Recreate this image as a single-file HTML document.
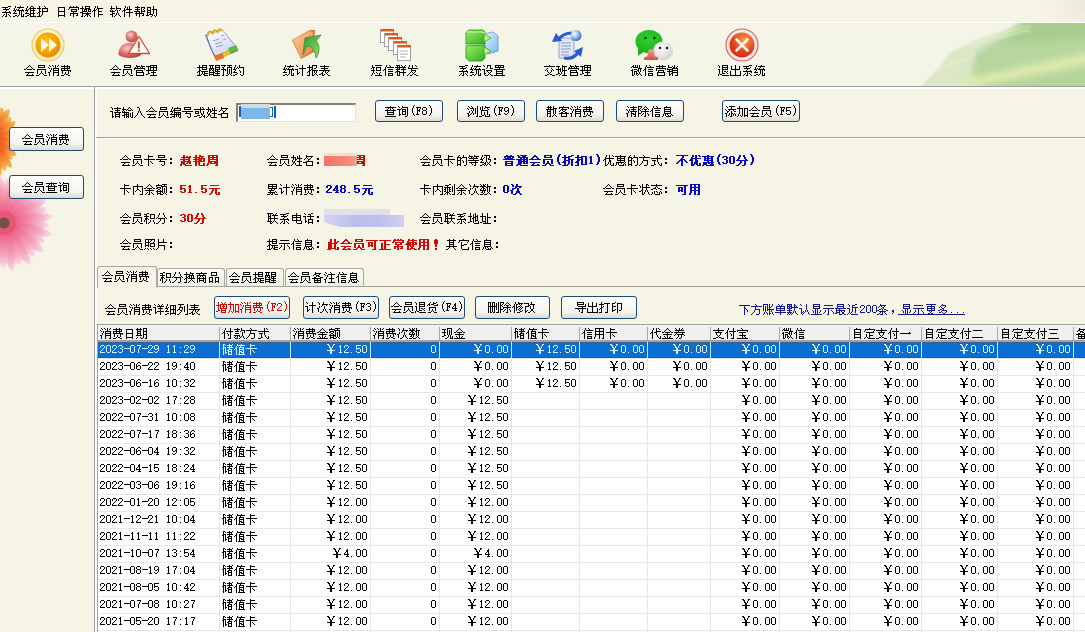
<!DOCTYPE html>
<html><head><meta charset="utf-8">
<style>
*{margin:0;padding:0;box-sizing:border-box}
html,body{width:1085px;height:632px;overflow:hidden;background:#F6F4E5;font-family:"Liberation Sans",sans-serif;font-size:12px;color:#000}
.a{position:absolute}
.t{position:absolute;font-size:12px;line-height:14px;white-space:nowrap}
.b{font-weight:bold;letter-spacing:1px}
.m{font-family:"Liberation Mono",monospace;font-size:12px;letter-spacing:-1.2px}
.red{color:#D00808}
.blue{color:#0808C0}
.btn{position:absolute;border:1px solid #1F4A78;border-radius:3px;background:linear-gradient(#FFFFFF,#F4F3EE 70%,#DCDBD3);font-size:12px;line-height:14px;text-align:center;white-space:nowrap}
.gh{position:absolute;top:326px;font-size:12px;line-height:14px;white-space:nowrap}
.hsep{position:absolute;top:327px;width:1px;height:13px;background:#A8A8A8}
.row{position:absolute;left:98px;width:987px;height:17px}
.row .c{position:absolute;top:0px;font-size:12px;line-height:14px;white-space:nowrap;margin-left:-98px}
.row .c.r{text-align:right}
.sel{background:#0A6ED2;color:#D8F4FF;border-top:1px solid #3D5F88;border-bottom:1px solid #3D5470;height:16px!important}
.sel .c{top:-1px!important}
.vls{position:absolute;top:343px;width:1px;height:14px;background:#B8ECFF}
.b .m{letter-spacing:-0.2px}
.y{display:inline-block;width:12px;text-align:right;padding-right:1px;font-family:"Liberation Sans",sans-serif;font-weight:bold;font-size:12px}
.vl{position:absolute;top:342px;width:1px;height:290px;background:#E6E6E6}
.hl{position:absolute;left:98px;width:987px;height:1px;background:#E8E8E8}
.k{display:inline-block;color:transparent;overflow:hidden;height:14px;vertical-align:top;white-space:nowrap;text-decoration:none}
</style></head><body>

<!-- menu bar -->
<div class="t" style="left:1px;top:4px"><span class="k" style="width: 48px;">系统维护</span></div>
<div class="t" style="left:56px;top:4px"><span class="k" style="width: 48px;">日常操作</span></div>
<div class="t" style="left:110px;top:4px"><span class="k" style="width: 48px;">软件帮助</span></div>
<div class="a" style="left:0;top:22px;width:1085px;height:1px;background:#FFFFFF"></div>
<div class="a" style="left:1000px;top:0;width:85px;height:22px;background:radial-gradient(ellipse 40px 26px at 100% 25%,#EAE8DA,rgba(246,244,229,0))"></div>

<!-- toolbar -->
<div class="a" style="left:0;top:23px;width:1085px;height:63px;background:#F5F5E7"></div>
<svg class="a" style="left:880px;top:23px" width="205" height="63" viewBox="880 23 205 63">
  <defs>
    <filter id="bl1" filterUnits="userSpaceOnUse" x="850" y="0" width="260" height="110"><feGaussianBlur stdDeviation="1.2"></feGaussianBlur></filter>
    <filter id="bl3" filterUnits="userSpaceOnUse" x="850" y="0" width="260" height="110"><feGaussianBlur stdDeviation="3"></feGaussianBlur></filter>
  </defs>
  <path d="M1028 15 L1100 15 L1100 95 L912 95 L925 82 L940 66 L950 52 L975 40 L1005 30Z" fill="#DCE7C6" filter="url(#bl1)"></path>
  <path d="M1032 15 L1100 15 L1100 95 L985 95 L972 75 L975 55 L995 40 L1015 30Z" fill="#B6D69E" filter="url(#bl3)"></path>
  <path d="M1030 15 L1100 15 L1100 38 L1040 42 L1005 42Z" fill="#A9CD8F" filter="url(#bl3)"></path>
  <path d="M958 80 L1100 50 L1100 62 L970 88Z" fill="#DDE9AC" filter="url(#bl3)"></path>
  <path d="M985 92 L1100 72 L1100 95 L1000 95Z" fill="#B2D598" filter="url(#bl3)"></path>
  <path d="M945 52 L1030 30 M960 45 L1030 26 M930 72 L975 55" stroke="#F0F4E4" stroke-width="1.2" opacity="0.8" filter="url(#bl1)"></path>
</svg>
<div class="a" style="left:0;top:86px;width:1085px;height:1px;background:#A0A0A0"></div>
<div class="a" style="left:0;top:87px;width:1085px;height:2px;background:#FFFFFF"></div>

<!-- toolbar icons -->
<svg class="a" style="left:31px;top:28px" width="34" height="34" viewBox="0 0 34 34">
  <defs>
    <radialGradient id="og" cx="0.4" cy="0.35" r="0.7"><stop offset="0" stop-color="#FFC21A"></stop><stop offset="0.7" stop-color="#F29A00"></stop><stop offset="1" stop-color="#E08A00"></stop></radialGradient>
  </defs>
  <circle cx="17" cy="17" r="16" fill="#FDF1C8" stroke="#F1C860" stroke-width="1.2"></circle>
  <circle cx="17" cy="17" r="12.5" fill="url(#og)"></circle>
  <path d="M10 10 L18 17 L10 24Z M18 10 L26 17 L18 24Z" fill="#FFFBEA"></path>
</svg>
<svg class="a" style="left:117px;top:29px" width="34" height="31" viewBox="0 0 34 31">
  <defs>
    <radialGradient id="rg" cx="0.4" cy="0.35" r="0.75"><stop offset="0" stop-color="#F8C8C8"></stop><stop offset="0.55" stop-color="#D86868"></stop><stop offset="1" stop-color="#B03838"></stop></radialGradient>
  </defs>
  <path d="M1.5 26 C1 19 5 14 12 14 C20 14 24 18 24 26 C19 30 7 30 1.5 26Z" fill="url(#rg)"></path>
  <circle cx="14.5" cy="7.5" r="6" fill="url(#rg)"></circle>
  <path d="M22 7.5 L32.5 24.5 L11.5 24.5Z" fill="#FFFFFF" stroke="#D0502A" stroke-width="1.3" stroke-linejoin="round"></path>
  <rect x="20.8" y="12.5" width="2" height="7" fill="#D84A28"></rect>
  <rect x="20.8" y="20.5" width="2" height="2" fill="#D84A28"></rect>
</svg>
<svg class="a" style="left:204px;top:28px" width="36" height="34" viewBox="0 0 36 34">
  <defs><linearGradient id="pg" x1="0" y1="0" x2="1" y2="1"><stop offset="0" stop-color="#FFFFFF"></stop><stop offset="1" stop-color="#C8CCF0"></stop></linearGradient></defs>
  <path d="M1 7 L19 2 C24 8 28 14 33 19 L34 23 L12 32 C8 25 4 15 1 7Z" fill="#6E70A8"></path>
  <path d="M2.5 6.5 L19 2.5 C23 8 27 13.5 32 18.5 L11.5 28 C8 22 5 14 2.5 6.5Z" fill="url(#pg)"></path>
  <path d="M9 13 L15 11 M11 16 L18 14 M12 19 L19 17 M17 8 L20 7 M19 12 L22 11" stroke="#9AA0C8" stroke-width="1"></path>
  <path d="M10 28 L18 25 L20 30 L12 33Z" fill="#E8702A"></path>
  <path d="M18 25 L25 22 L27 26 L20 29Z" fill="#F0C020"></path>
  <path d="M24 20 L32 17 L34 22 L26 25Z" fill="#58C038"></path>
  <path d="M4 8 C3 4 7 2 8 5 M9 6.5 C8 2.5 12 1 13 4 M14 5 C13 1 17 0 18 3" stroke="#D8A818" stroke-width="1.8" fill="none"></path>
</svg>
<svg class="a" style="left:290px;top:28px" width="36" height="32" viewBox="0 0 36 32">
  <defs><linearGradient id="fg" x1="0" y1="0" x2="1" y2="1"><stop offset="0" stop-color="#FFD0A0"></stop><stop offset="1" stop-color="#E88038"></stop></linearGradient>
  <linearGradient id="ag" x1="0" y1="0" x2="1" y2="1"><stop offset="0" stop-color="#2E9A2E"></stop><stop offset="1" stop-color="#9EE070"></stop></linearGradient></defs>
  <path d="M2 12 L20 2 L25 2 L24 24 L11 31 Z" fill="#D87838"></path>
  <path d="M3 12 L20 3 L23 4 L22 23 L11 30 Z" fill="url(#fg)"></path>
  <path d="M15 10 L31 7 L26 13 C30 17 30 24 26 30 C26 24 22 18 17 18 L13 27Z" fill="url(#ag)" stroke="#3A8A30" stroke-width="0.8"></path>
</svg>
<svg class="a" style="left:378px;top:28px" width="34" height="34" viewBox="0 0 34 34">
  <g stroke="#A0A0A0" stroke-width="1" fill="#FFFFFF">
    <rect x="2.5" y="1.5" width="13" height="13"></rect>
    <rect x="6.5" y="5.5" width="13" height="13"></rect>
    <rect x="10.5" y="9.5" width="13" height="13"></rect>
    <rect x="15.5" y="13.5" width="13" height="13"></rect>
    <rect x="19.5" y="17.5" width="13" height="15"></rect>
  </g>
  <g fill="#E05A20">
    <rect x="3" y="1" width="13" height="2.5"></rect>
    <rect x="7" y="5" width="13" height="2.5"></rect>
    <rect x="11" y="9" width="13" height="2.5"></rect>
    <rect x="16" y="13" width="13" height="2.5"></rect>
    <rect x="20" y="17" width="13" height="2.5"></rect>
  </g>
  <path d="M22 23 H30 M22 26 H30 M22 29 H28" stroke="#B0B0B0" stroke-width="1"></path>
</svg>
<svg class="a" style="left:465px;top:28px" width="34" height="34" viewBox="0 0 34 34">
  <defs><linearGradient id="gc" x1="0" y1="0" x2="1" y2="1"><stop offset="0" stop-color="#9AF060"></stop><stop offset="1" stop-color="#30B020"></stop></linearGradient>
  <linearGradient id="bc" x1="0" y1="0" x2="1" y2="1"><stop offset="0" stop-color="#E0F2FF"></stop><stop offset="1" stop-color="#78B8F0"></stop></linearGradient></defs>
  <path d="M19 6 L28 4 L33 8 L33 23 L23 26 L19 24Z" fill="url(#bc)" stroke="#5A98D0" stroke-width="0.8"></path>
  <path d="M1 4 L4 2 L18 2 L20 4 L20 16 L1 16Z" fill="url(#gc)" stroke="#2A8A20" stroke-width="0.8"></path>
  <path d="M1 18 L20 17 L20 30 L17 33 L4 33 L1 30Z" fill="url(#gc)" stroke="#2A8A20" stroke-width="0.8"></path>
  <path d="M1 4 L18 4 L20 6" stroke="#C8FF98" stroke-width="1.2" fill="none"></path>
  <path d="M19 6 L26 10 L19 14Z M19 19 L26 23 L19 27Z" fill="#B8F878" stroke="#40A030" stroke-width="0.8"></path>
</svg>
<svg class="a" style="left:550px;top:29px" width="34" height="33" viewBox="0 0 34 33">
  <defs><radialGradient id="bb" cx="0.35" cy="0.35" r="0.7"><stop offset="0" stop-color="#FFFFFF"></stop><stop offset="0.5" stop-color="#9ABCF4"></stop><stop offset="1" stop-color="#3868C8"></stop></radialGradient></defs>
  <path d="M9 9 L20 9 L24 13 L24 29 L9 29Z" fill="#E2E8F6" stroke="#8090B8" stroke-width="0.8"></path>
  <path d="M11 14 H21 M11 17 H21 M11 20 H21 M11 23 H19 M11 26 H19" stroke="#8A9AC8" stroke-width="1"></path>
  <path d="M8 11 Q13 4 22 4" stroke="#2A5AD8" stroke-width="3.2" fill="none"></path>
  <path d="M2 13 L6 4 L12 12Z" fill="#2A5AD8"></path>
  <path d="M14 29 Q24 31 29 22" stroke="#2A5AD8" stroke-width="3.2" fill="none"></path>
  <path d="M33 18 L31 28 L24 22Z" fill="#2A5AD8"></path>
  <circle cx="26" cy="6.5" r="5.5" fill="url(#bb)"></circle>
</svg>
<svg class="a" style="left:634px;top:29px" width="40" height="33" viewBox="0 0 40 33">
  <defs><radialGradient id="wg" cx="0.45" cy="0.4" r="0.7"><stop offset="0" stop-color="#30D030"></stop><stop offset="1" stop-color="#18B018"></stop></radialGradient>
  <radialGradient id="ww" cx="0.4" cy="0.35" r="0.7"><stop offset="0" stop-color="#FFFFFF"></stop><stop offset="1" stop-color="#D0D0D0"></stop></radialGradient>
  <linearGradient id="sg" x1="0" y1="0" x2="0" y2="1"><stop offset="0" stop-color="#F4A090"></stop><stop offset="1" stop-color="#C85848"></stop></linearGradient></defs>
  <ellipse cx="15" cy="12.5" rx="13.5" ry="11.5" fill="url(#wg)"></ellipse>
  <path d="M4 19 L4 27 L11 22Z" fill="#1CB41C"></path>
  <circle cx="11.5" cy="9" r="1.3" fill="#102010"></circle><circle cx="20.5" cy="9" r="1.3" fill="#102010"></circle>
  <ellipse cx="29" cy="22" rx="10" ry="9.5" fill="url(#ww)"></ellipse>
  <circle cx="26" cy="19" r="1.3" fill="#202020"></circle><circle cx="33" cy="19" r="1.3" fill="#202020"></circle>
  <path d="M13.5 27 C13.5 23 14 20 17 20 C20 20 20.5 23 20.5 27 L24 28.5 L24 31 L10 31 L10 28.5Z" fill="url(#sg)"></path>
</svg>
<svg class="a" style="left:725px;top:28px" width="34" height="34" viewBox="0 0 34 34">
  <defs><radialGradient id="xg" cx="0.6" cy="0.3" r="0.8"><stop offset="0" stop-color="#F8A040"></stop><stop offset="0.6" stop-color="#E04020"></stop><stop offset="1" stop-color="#C82818"></stop></radialGradient></defs>
  <circle cx="17" cy="17" r="16" fill="#FBEAE6" stroke="#D86060" stroke-width="1.2"></circle>
  <circle cx="17" cy="17" r="12.5" fill="url(#xg)"></circle>
  <path d="M11.5 11.5 L22.5 22.5 M22.5 11.5 L11.5 22.5" stroke="#FFF4EE" stroke-width="2.6" stroke-linecap="round"></path>
</svg>

<div class="t" style="left:24px;top:63px"><span class="k" style="width: 48px;">会员消费</span></div>
<div class="t" style="left:110px;top:63px"><span class="k" style="width: 48px;">会员管理</span></div>
<div class="t" style="left:197px;top:63px"><span class="k" style="width: 48px;">提醒预约</span></div>
<div class="t" style="left:283px;top:63px"><span class="k" style="width: 48px;">统计报表</span></div>
<div class="t" style="left:371px;top:63px"><span class="k" style="width: 48px;">短信群发</span></div>
<div class="t" style="left:458px;top:63px"><span class="k" style="width: 48px;">系统设置</span></div>
<div class="t" style="left:544px;top:63px"><span class="k" style="width: 48px;">交班管理</span></div>
<div class="t" style="left:631px;top:63px"><span class="k" style="width: 48px;">微信营销</span></div>
<div class="t" style="left:718px;top:63px"><span class="k" style="width: 48px;">退出系统</span></div>

<!-- left panel -->
<svg class="a" style="left:0;top:88px" width="94" height="200" viewBox="0 88 94 200">
<defs>
<filter id="fb" x="-20%" y="-20%" width="140%" height="140%"><feGaussianBlur stdDeviation="0.7"></feGaussianBlur></filter>
<linearGradient id="pp" x1="0" y1="0" x2="1" y2="0"><stop offset="0" stop-color="#E03A60"></stop><stop offset="0.3" stop-color="#EE6A8E"></stop><stop offset="0.7" stop-color="#F4A2BC"></stop><stop offset="1" stop-color="#FBDDE8"></stop></linearGradient>
<linearGradient id="op" x1="0" y1="0" x2="1" y2="0"><stop offset="0" stop-color="#E84010"></stop><stop offset="0.5" stop-color="#F06A28"></stop><stop offset="1" stop-color="#F8C058"></stop></linearGradient>
</defs><g filter="url(#fb)">
<ellipse cx="17.7" cy="0" rx="17.7" ry="4.2" fill="url(#op)" transform="translate(-10,140) rotate(-80)"></ellipse>
<ellipse cx="17.4" cy="0" rx="17.4" ry="4.2" fill="url(#op)" transform="translate(-10,140) rotate(-69)"></ellipse>
<ellipse cx="18.2" cy="0" rx="18.2" ry="4.2" fill="url(#op)" transform="translate(-10,140) rotate(-58)"></ellipse>
<ellipse cx="15.4" cy="0" rx="15.4" ry="4.2" fill="url(#op)" transform="translate(-10,140) rotate(-47)"></ellipse>
<ellipse cx="15.7" cy="0" rx="15.7" ry="4.2" fill="url(#op)" transform="translate(-10,140) rotate(-36)"></ellipse>
<ellipse cx="13.3" cy="0" rx="13.3" ry="4.2" fill="url(#op)" transform="translate(-10,140) rotate(-25)"></ellipse>
<ellipse cx="14.3" cy="0" rx="14.3" ry="4.2" fill="url(#op)" transform="translate(-10,140) rotate(-14)"></ellipse>
<ellipse cx="12.5" cy="0" rx="12.5" ry="4.2" fill="url(#op)" transform="translate(-10,140) rotate(-3)"></ellipse>
<ellipse cx="14.1" cy="0" rx="14.1" ry="4.2" fill="url(#op)" transform="translate(-10,140) rotate(8)"></ellipse>
<ellipse cx="13.0" cy="0" rx="13.0" ry="4.2" fill="url(#op)" transform="translate(-10,140) rotate(19)"></ellipse>
<ellipse cx="15.2" cy="0" rx="15.2" ry="4.2" fill="url(#op)" transform="translate(-10,140) rotate(30)"></ellipse>
<ellipse cx="14.7" cy="0" rx="14.7" ry="4.2" fill="url(#op)" transform="translate(-10,140) rotate(41)"></ellipse>
<ellipse cx="17.5" cy="0" rx="17.5" ry="4.2" fill="url(#op)" transform="translate(-10,140) rotate(52)"></ellipse>
<ellipse cx="17.2" cy="0" rx="17.2" ry="4.2" fill="url(#op)" transform="translate(-10,140) rotate(63)"></ellipse>
<ellipse cx="18.7" cy="0" rx="18.7" ry="4.2" fill="url(#op)" transform="translate(-10,140) rotate(74)"></ellipse>
<ellipse cx="24.5" cy="0" rx="24.5" ry="5.2" fill="url(#pp)" transform="translate(4,223) rotate(-96)"></ellipse>
<ellipse cx="22.5" cy="0" rx="22.5" ry="5.2" fill="url(#pp)" transform="translate(4,223) rotate(-85)"></ellipse>
<ellipse cx="24.5" cy="0" rx="24.5" ry="5.2" fill="url(#pp)" transform="translate(4,223) rotate(-74)"></ellipse>
<ellipse cx="22.5" cy="0" rx="22.5" ry="5.2" fill="url(#pp)" transform="translate(4,223) rotate(-63)"></ellipse>
<ellipse cx="24.5" cy="0" rx="24.5" ry="5.2" fill="url(#pp)" transform="translate(4,223) rotate(-52)"></ellipse>
<ellipse cx="22.5" cy="0" rx="22.5" ry="5.2" fill="url(#pp)" transform="translate(4,223) rotate(-41)"></ellipse>
<ellipse cx="24.5" cy="0" rx="24.5" ry="5.2" fill="url(#pp)" transform="translate(4,223) rotate(-30)"></ellipse>
<ellipse cx="22.5" cy="0" rx="22.5" ry="5.2" fill="url(#pp)" transform="translate(4,223) rotate(-19)"></ellipse>
<ellipse cx="24.5" cy="0" rx="24.5" ry="5.2" fill="url(#pp)" transform="translate(4,223) rotate(-8)"></ellipse>
<ellipse cx="22.5" cy="0" rx="22.5" ry="5.2" fill="url(#pp)" transform="translate(4,223) rotate(3)"></ellipse>
<ellipse cx="24.5" cy="0" rx="24.5" ry="5.2" fill="url(#pp)" transform="translate(4,223) rotate(14)"></ellipse>
<ellipse cx="22.5" cy="0" rx="22.5" ry="5.2" fill="url(#pp)" transform="translate(4,223) rotate(25)"></ellipse>
<ellipse cx="24.5" cy="0" rx="24.5" ry="5.2" fill="url(#pp)" transform="translate(4,223) rotate(36)"></ellipse>
<ellipse cx="22.5" cy="0" rx="22.5" ry="5.2" fill="url(#pp)" transform="translate(4,223) rotate(47)"></ellipse>
<ellipse cx="24.5" cy="0" rx="24.5" ry="5.2" fill="url(#pp)" transform="translate(4,223) rotate(58)"></ellipse>
<ellipse cx="22.5" cy="0" rx="22.5" ry="5.2" fill="url(#pp)" transform="translate(4,223) rotate(69)"></ellipse>
<ellipse cx="24.5" cy="0" rx="24.5" ry="5.2" fill="url(#pp)" transform="translate(4,223) rotate(80)"></ellipse>
<ellipse cx="22.5" cy="0" rx="22.5" ry="5.2" fill="url(#pp)" transform="translate(4,223) rotate(91)"></ellipse>
<circle cx="4" cy="223" r="12" fill="#E85676" opacity="0.85"></circle>
<circle cx="4" cy="223" r="5.5" fill="#74504C"></circle>
</g></svg>
<div class="btn" style="left:9px;top:127px;width:75px;height:24px;padding-top:4px"><span class="k" style="width: 48px;">会员消费</span></div>
<div class="btn" style="left:9px;top:175px;width:75px;height:24px;padding-top:4px"><span class="k" style="width: 48px;">会员查询</span></div>
<div class="a" style="left:94px;top:87px;width:1px;height:545px;background:#A0A0A0"></div>
<div class="a" style="left:95px;top:88px;width:2px;height:544px;background:#FFFFFF"></div>

<!-- search row -->
<div class="t" style="left:110px;top:105px"><span class="k" style="width: 120px;">请输入会员编号或姓名</span></div>
<div class="a" style="left:236px;top:103px;width:120px;height:19px;background:#fff;border-top:2px solid #808080;border-left:2px solid #808080;border-right:1px solid #E4E2D8;border-bottom:1px solid #E4E2D8"></div>
<div class="a" style="left:239px;top:106px;width:2px;height:11px;background:#1A64B4"></div>
<div class="a" style="left:241px;top:104px;width:29px;height:4px;background:#D2DADE"></div>
<div class="a" style="left:241px;top:108px;width:29px;height:11px;background:#7EB6E8"></div>
<div class="a" style="left:270px;top:107px;width:3px;height:10px;border-right:1px solid #1A64B4;border-top:1px solid #1A64B4;border-bottom:1px solid #1A64B4"></div>
<div class="a" style="left:274px;top:106px;width:2px;height:12px;background:#1060C0"></div>
<div class="btn" style="left:375px;top:100px;width:68px;height:22px;padding-top:3px"><span class="k" style="width: 24px;">查询</span><span class="m"><span class="k" style="width: 24px;">(F8)</span></span></div>
<div class="btn" style="left:457px;top:100px;width:68px;height:22px;padding-top:3px"><span class="k" style="width: 24px;">浏览</span><span class="m"><span class="k" style="width: 24px;">(F9)</span></span></div>
<div class="btn" style="left:536px;top:100px;width:68px;height:22px;padding-top:3px"><span class="k" style="width: 48px;">散客消费</span></div>
<div class="btn" style="left:616px;top:100px;width:68px;height:22px;padding-top:3px"><span class="k" style="width: 48px;">清除信息</span></div>
<div class="btn" style="left:722px;top:100px;width:78px;height:22px;padding-top:3px"><span class="k" style="width: 48px;">添加会员</span><span class="m"><span class="k" style="width: 24px;">(F5)</span></span></div>
<div class="a" style="left:96px;top:137px;width:989px;height:1px;background:#A0A0A0"></div>
<div class="a" style="left:96px;top:138px;width:989px;height:1px;background:#FFFFFF"></div>

<!-- info -->
<div class="t" style="left:120px;top:153px"><span class="k" style="width: 60px;">会员卡号：</span></div>
<div class="t b red" style="left:180px;top:153px"><span class="k" style="width: 39px;">赵艳周</span></div>
<div class="t" style="left:267px;top:153px"><span class="k" style="width: 60px;">会员姓名：</span></div>
<div class="a" style="left:324px;top:153px;width:33px;height:3px;background:#F6DCCC;z-index:60"></div>
<div class="a" style="left:324px;top:156px;width:33px;height:10px;background:linear-gradient(90deg,#F47468,#F48478 60%,#F2A090);z-index:60"></div>
<div class="t b red" style="left:353px;top:153px"><span class="k" style="width: 13px;">周</span></div>
<div class="t" style="left:420px;top:153px"><span class="k" style="width: 84px;">会员卡的等级：</span></div>
<div class="t b blue" style="left:503px;top:153px"><span class="k" style="width: 52px;">普通会员</span><span class="m"><span class="k" style="width: 7px;">(</span></span><span class="k" style="width: 26px;">折扣</span><span class="m"><span class="k" style="width: 14px;">1)</span></span></div>
<div class="t" style="left:603px;top:153px"><span class="k" style="width: 72px;">优惠的方式：</span></div>
<div class="t b blue" style="left:676px;top:153px"><span class="k" style="width: 39px;">不优惠</span><span class="m"><span class="k" style="width: 21px;">(30</span></span><span class="k" style="width: 13px;">分</span><span class="m"><span class="k" style="width: 7px;">)</span></span></div>

<div class="t" style="left:120px;top:182px"><span class="k" style="width: 60px;">卡内余额：</span></div>
<div class="t b red" style="left:180px;top:182px"><span class="m"><span class="k" style="width: 28px;">51.5</span></span><span class="k" style="width: 13px;">元</span></div>
<div class="t" style="left:267px;top:182px"><span class="k" style="width: 60px;">累计消费：</span></div>
<div class="t b blue" style="left:326px;top:182px"><span class="m"><span class="k" style="width: 35px;">248.5</span></span><span class="k" style="width: 13px;">元</span></div>
<div class="t" style="left:420px;top:182px"><span class="k" style="width: 84px;">卡内剩余次数：</span></div>
<div class="t b blue" style="left:503px;top:182px"><span class="m"><span class="k" style="width: 7px;">0</span></span><span class="k" style="width: 13px;">次</span></div>
<div class="t" style="left:603px;top:182px"><span class="k" style="width: 72px;">会员卡状态：</span></div>
<div class="t b blue" style="left:676px;top:182px"><span class="k" style="width: 26px;">可用</span></div>

<div class="t" style="left:120px;top:211px"><span class="k" style="width: 60px;">会员积分：</span></div>
<div class="t b red" style="left:180px;top:211px"><span class="m"><span class="k" style="width: 14px;">30</span></span><span class="k" style="width: 13px;">分</span></div>
<div class="t" style="left:267px;top:211px"><span class="k" style="width: 60px;">联系电话：</span></div>
<div class="a" style="left:324px;top:209px;width:66px;height:6px;background:#E0E0EA"></div>
<div class="a" style="left:324px;top:215px;width:80px;height:12px;background:linear-gradient(90deg,#D4D4F0,#BCBCEE 40%,#C0C0F0 70%,#D0D0F0);clip-path:polygon(0 0,100% 0,100% 100%,20% 100%,0 60%)"></div>
<div class="t" style="left:420px;top:211px"><span class="k" style="width: 84px;">会员联系地址：</span></div>

<div class="t" style="left:120px;top:237px"><span class="k" style="width: 60px;">会员照片：</span></div>
<div class="t" style="left:267px;top:237px"><span class="k" style="width: 60px;">提示信息：</span></div>
<div class="t b red" style="left:327px;top:237px"><span class="k" style="width: 117px;">此会员可正常使用！</span></div>
<div class="t" style="left:446px;top:237px"><span class="k" style="width: 60px;">其它信息：</span></div>

<!-- tabs -->
<div class="a" style="left:157px;top:268px;width:68px;height:19px;border:1px solid #A8A8A0;border-bottom:1px solid #B0B0A8;border-radius:3px 3px 0 0;background:linear-gradient(#FCFCF6,#F0EFE4)"></div>
<div class="a" style="left:226px;top:268px;width:58px;height:19px;border:1px solid #A8A8A0;border-bottom:1px solid #B0B0A8;border-radius:3px 3px 0 0;background:linear-gradient(#FCFCF6,#F0EFE4)"></div>
<div class="a" style="left:285px;top:268px;width:79px;height:19px;border:1px solid #A8A8A0;border-bottom:1px solid #B0B0A8;border-radius:3px 3px 0 0;background:linear-gradient(#FCFCF6,#F0EFE4)"></div>
<div class="a" style="left:157px;top:286px;width:928px;height:1px;background:#A4A39A"></div>
<div class="a" style="left:97px;top:266px;width:60px;height:22px;border:1px solid #A8A8A0;border-bottom:none;border-radius:3px 3px 0 0;background:#F6F4E5"></div>
<div class="t" style="left:102px;top:269px"><span class="k" style="width: 48px;">会员消费</span></div>
<div class="t" style="left:160px;top:270px"><span class="k" style="width: 60px;">积分换商品</span></div>
<div class="t" style="left:229px;top:270px"><span class="k" style="width: 48px;">会员提醒</span></div>
<div class="t" style="left:288px;top:270px"><span class="k" style="width: 72px;">会员备注信息</span></div>

<!-- action buttons -->
<div class="t" style="left:105px;top:302px"><span class="k" style="width: 96px;">会员消费详细列表</span></div>
<div class="btn red" style="left:214px;top:296px;width:76px;height:23px;padding-top:3px"><span class="k" style="width: 48px;">增加消费</span><span class="m"><span class="k" style="width: 24px;">(F2)</span></span></div>
<div class="btn" style="left:303px;top:296px;width:76px;height:23px;padding-top:3px"><span class="k" style="width: 48px;">计次消费</span><span class="m"><span class="k" style="width: 24px;">(F3)</span></span></div>
<div class="btn" style="left:389px;top:296px;width:76px;height:23px;padding-top:3px"><span class="k" style="width: 48px;">会员退货</span><span class="m"><span class="k" style="width: 24px;">(F4)</span></span></div>
<div class="btn" style="left:475px;top:296px;width:75px;height:23px;padding-top:3px"><span class="k" style="width: 48px;">删除修改</span></div>
<div class="btn" style="left:561px;top:296px;width:76px;height:23px;padding-top:3px"><span class="k" style="width: 48px;">导出打印</span></div>
<div class="t" style="left:739px;top:302px;color:#14148C"><span class="k" style="width: 120px;">下方账单默认显示最近</span><span class="m"><span class="k" style="width: 18px;">200</span></span><span class="k" style="width: 72px;">条，显示更多</span><span class="m"><span class="k" style="width: 18px;">...</span></span></div>
<div class="a" style="left:898px;top:314px;width:67px;height:1px;background:#14148C"></div>

<!-- grid -->
<div class="a" style="left:97px;top:324px;width:988px;height:308px;background:#FFFFFF;border-top:1px solid #A0A0A0;border-left:1px solid #A0A0A0"></div>
<div class="a" style="left:98px;top:325px;width:987px;height:16px;background:#F0F0F0"></div>
<div class="a" style="left:98px;top:340px;width:987px;height:2px;background:#A4A4A4"></div>
<div class="gh" style="left:100px"><span class="k" style="width: 48px;">消费日期</span></div>
<div class="gh" style="left:222px"><span class="k" style="width: 48px;">付款方式</span></div>
<div class="gh" style="left:293px"><span class="k" style="width: 48px;">消费金额</span></div>
<div class="gh" style="left:373px"><span class="k" style="width: 48px;">消费次数</span></div>
<div class="gh" style="left:442px"><span class="k" style="width: 24px;">现金</span></div>
<div class="gh" style="left:514px"><span class="k" style="width: 36px;">储值卡</span></div>
<div class="gh" style="left:582px"><span class="k" style="width: 36px;">信用卡</span></div>
<div class="gh" style="left:650px"><span class="k" style="width: 36px;">代金券</span></div>
<div class="gh" style="left:713px"><span class="k" style="width: 36px;">支付宝</span></div>
<div class="gh" style="left:782px"><span class="k" style="width: 24px;">微信</span></div>
<div class="gh" style="left:852px"><span class="k" style="width: 60px;">自定支付一</span></div>
<div class="gh" style="left:924px"><span class="k" style="width: 60px;">自定支付二</span></div>
<div class="gh" style="left:1000px"><span class="k" style="width: 60px;">自定支付三</span></div>
<div class="gh" style="left:1076px"><span class="k" style="width: 24px;">备注</span></div>
<div class="hsep" style="left:219px"></div>
<div class="hsep" style="left:290px"></div>
<div class="hsep" style="left:370px"></div>
<div class="hsep" style="left:439px"></div>
<div class="hsep" style="left:511px"></div>
<div class="hsep" style="left:579px"></div>
<div class="hsep" style="left:647px"></div>
<div class="hsep" style="left:710px"></div>
<div class="hsep" style="left:779px"></div>
<div class="hsep" style="left:849px"></div>
<div class="hsep" style="left:921px"></div>
<div class="hsep" style="left:997px"></div>
<div class="hsep" style="left:1073px"></div>
<div class="row sel" style="top:342px"><span class="c" style="left:99px"><span class="m"><span class="k" style="width: 96px;">2023-07-29 11:29</span></span></span><span class="c" style="left:222px"><span class="k" style="width: 36px;">储值卡</span></span><span class="c r" style="left:290px;width:77px"><span class="k" style="width: 12px;">￥</span><span class="m"><span class="k" style="width: 30px;">12.50</span></span></span><span class="c r" style="left:370px;width:66px"><span class="m"><span class="k" style="width: 6px;">0</span></span></span><span class="c r" style="left:439px;width:69px"><span class="k" style="width: 12px;">￥</span><span class="m"><span class="k" style="width: 24px;">0.00</span></span></span><span class="c r" style="left:511px;width:65px"><span class="k" style="width: 12px;">￥</span><span class="m"><span class="k" style="width: 30px;">12.50</span></span></span><span class="c r" style="left:579px;width:65px"><span class="k" style="width: 12px;">￥</span><span class="m"><span class="k" style="width: 24px;">0.00</span></span></span><span class="c r" style="left:647px;width:60px"><span class="k" style="width: 12px;">￥</span><span class="m"><span class="k" style="width: 24px;">0.00</span></span></span><span class="c r" style="left:710px;width:66px"><span class="k" style="width: 12px;">￥</span><span class="m"><span class="k" style="width: 24px;">0.00</span></span></span><span class="c r" style="left:779px;width:67px"><span class="k" style="width: 12px;">￥</span><span class="m"><span class="k" style="width: 24px;">0.00</span></span></span><span class="c r" style="left:849px;width:69px"><span class="k" style="width: 12px;">￥</span><span class="m"><span class="k" style="width: 24px;">0.00</span></span></span><span class="c r" style="left:921px;width:73px"><span class="k" style="width: 12px;">￥</span><span class="m"><span class="k" style="width: 24px;">0.00</span></span></span><span class="c r" style="left:997px;width:73px"><span class="k" style="width: 12px;">￥</span><span class="m"><span class="k" style="width: 24px;">0.00</span></span></span></div>
<div class="row" style="top:359px"><span class="c" style="left:99px"><span class="m"><span class="k" style="width: 96px;">2023-06-22 19:40</span></span></span><span class="c" style="left:222px"><span class="k" style="width: 36px;">储值卡</span></span><span class="c r" style="left:290px;width:77px"><span class="k" style="width: 12px;">￥</span><span class="m"><span class="k" style="width: 30px;">12.50</span></span></span><span class="c r" style="left:370px;width:66px"><span class="m"><span class="k" style="width: 6px;">0</span></span></span><span class="c r" style="left:439px;width:69px"><span class="k" style="width: 12px;">￥</span><span class="m"><span class="k" style="width: 24px;">0.00</span></span></span><span class="c r" style="left:511px;width:65px"><span class="k" style="width: 12px;">￥</span><span class="m"><span class="k" style="width: 30px;">12.50</span></span></span><span class="c r" style="left:579px;width:65px"><span class="k" style="width: 12px;">￥</span><span class="m"><span class="k" style="width: 24px;">0.00</span></span></span><span class="c r" style="left:647px;width:60px"><span class="k" style="width: 12px;">￥</span><span class="m"><span class="k" style="width: 24px;">0.00</span></span></span><span class="c r" style="left:710px;width:66px"><span class="k" style="width: 12px;">￥</span><span class="m"><span class="k" style="width: 24px;">0.00</span></span></span><span class="c r" style="left:779px;width:67px"><span class="k" style="width: 12px;">￥</span><span class="m"><span class="k" style="width: 24px;">0.00</span></span></span><span class="c r" style="left:849px;width:69px"><span class="k" style="width: 12px;">￥</span><span class="m"><span class="k" style="width: 24px;">0.00</span></span></span><span class="c r" style="left:921px;width:73px"><span class="k" style="width: 12px;">￥</span><span class="m"><span class="k" style="width: 24px;">0.00</span></span></span><span class="c r" style="left:997px;width:73px"><span class="k" style="width: 12px;">￥</span><span class="m"><span class="k" style="width: 24px;">0.00</span></span></span></div>
<div class="row" style="top:376px"><span class="c" style="left:99px"><span class="m"><span class="k" style="width: 96px;">2023-06-16 10:32</span></span></span><span class="c" style="left:222px"><span class="k" style="width: 36px;">储值卡</span></span><span class="c r" style="left:290px;width:77px"><span class="k" style="width: 12px;">￥</span><span class="m"><span class="k" style="width: 30px;">12.50</span></span></span><span class="c r" style="left:370px;width:66px"><span class="m"><span class="k" style="width: 6px;">0</span></span></span><span class="c r" style="left:439px;width:69px"><span class="k" style="width: 12px;">￥</span><span class="m"><span class="k" style="width: 24px;">0.00</span></span></span><span class="c r" style="left:511px;width:65px"><span class="k" style="width: 12px;">￥</span><span class="m"><span class="k" style="width: 30px;">12.50</span></span></span><span class="c r" style="left:579px;width:65px"><span class="k" style="width: 12px;">￥</span><span class="m"><span class="k" style="width: 24px;">0.00</span></span></span><span class="c r" style="left:647px;width:60px"><span class="k" style="width: 12px;">￥</span><span class="m"><span class="k" style="width: 24px;">0.00</span></span></span><span class="c r" style="left:710px;width:66px"><span class="k" style="width: 12px;">￥</span><span class="m"><span class="k" style="width: 24px;">0.00</span></span></span><span class="c r" style="left:779px;width:67px"><span class="k" style="width: 12px;">￥</span><span class="m"><span class="k" style="width: 24px;">0.00</span></span></span><span class="c r" style="left:849px;width:69px"><span class="k" style="width: 12px;">￥</span><span class="m"><span class="k" style="width: 24px;">0.00</span></span></span><span class="c r" style="left:921px;width:73px"><span class="k" style="width: 12px;">￥</span><span class="m"><span class="k" style="width: 24px;">0.00</span></span></span><span class="c r" style="left:997px;width:73px"><span class="k" style="width: 12px;">￥</span><span class="m"><span class="k" style="width: 24px;">0.00</span></span></span></div>
<div class="row" style="top:393px"><span class="c" style="left:99px"><span class="m"><span class="k" style="width: 96px;">2023-02-02 17:28</span></span></span><span class="c" style="left:222px"><span class="k" style="width: 36px;">储值卡</span></span><span class="c r" style="left:290px;width:77px"><span class="k" style="width: 12px;">￥</span><span class="m"><span class="k" style="width: 30px;">12.50</span></span></span><span class="c r" style="left:370px;width:66px"><span class="m"><span class="k" style="width: 6px;">0</span></span></span><span class="c r" style="left:439px;width:69px"><span class="k" style="width: 12px;">￥</span><span class="m"><span class="k" style="width: 30px;">12.50</span></span></span><span class="c r" style="left:710px;width:66px"><span class="k" style="width: 12px;">￥</span><span class="m"><span class="k" style="width: 24px;">0.00</span></span></span><span class="c r" style="left:779px;width:67px"><span class="k" style="width: 12px;">￥</span><span class="m"><span class="k" style="width: 24px;">0.00</span></span></span><span class="c r" style="left:849px;width:69px"><span class="k" style="width: 12px;">￥</span><span class="m"><span class="k" style="width: 24px;">0.00</span></span></span><span class="c r" style="left:921px;width:73px"><span class="k" style="width: 12px;">￥</span><span class="m"><span class="k" style="width: 24px;">0.00</span></span></span><span class="c r" style="left:997px;width:73px"><span class="k" style="width: 12px;">￥</span><span class="m"><span class="k" style="width: 24px;">0.00</span></span></span></div>
<div class="row" style="top:410px"><span class="c" style="left:99px"><span class="m"><span class="k" style="width: 96px;">2022-07-31 10:08</span></span></span><span class="c" style="left:222px"><span class="k" style="width: 36px;">储值卡</span></span><span class="c r" style="left:290px;width:77px"><span class="k" style="width: 12px;">￥</span><span class="m"><span class="k" style="width: 30px;">12.50</span></span></span><span class="c r" style="left:370px;width:66px"><span class="m"><span class="k" style="width: 6px;">0</span></span></span><span class="c r" style="left:439px;width:69px"><span class="k" style="width: 12px;">￥</span><span class="m"><span class="k" style="width: 30px;">12.50</span></span></span><span class="c r" style="left:710px;width:66px"><span class="k" style="width: 12px;">￥</span><span class="m"><span class="k" style="width: 24px;">0.00</span></span></span><span class="c r" style="left:779px;width:67px"><span class="k" style="width: 12px;">￥</span><span class="m"><span class="k" style="width: 24px;">0.00</span></span></span><span class="c r" style="left:849px;width:69px"><span class="k" style="width: 12px;">￥</span><span class="m"><span class="k" style="width: 24px;">0.00</span></span></span><span class="c r" style="left:921px;width:73px"><span class="k" style="width: 12px;">￥</span><span class="m"><span class="k" style="width: 24px;">0.00</span></span></span><span class="c r" style="left:997px;width:73px"><span class="k" style="width: 12px;">￥</span><span class="m"><span class="k" style="width: 24px;">0.00</span></span></span></div>
<div class="row" style="top:427px"><span class="c" style="left:99px"><span class="m"><span class="k" style="width: 96px;">2022-07-17 18:36</span></span></span><span class="c" style="left:222px"><span class="k" style="width: 36px;">储值卡</span></span><span class="c r" style="left:290px;width:77px"><span class="k" style="width: 12px;">￥</span><span class="m"><span class="k" style="width: 30px;">12.50</span></span></span><span class="c r" style="left:370px;width:66px"><span class="m"><span class="k" style="width: 6px;">0</span></span></span><span class="c r" style="left:439px;width:69px"><span class="k" style="width: 12px;">￥</span><span class="m"><span class="k" style="width: 30px;">12.50</span></span></span><span class="c r" style="left:710px;width:66px"><span class="k" style="width: 12px;">￥</span><span class="m"><span class="k" style="width: 24px;">0.00</span></span></span><span class="c r" style="left:779px;width:67px"><span class="k" style="width: 12px;">￥</span><span class="m"><span class="k" style="width: 24px;">0.00</span></span></span><span class="c r" style="left:849px;width:69px"><span class="k" style="width: 12px;">￥</span><span class="m"><span class="k" style="width: 24px;">0.00</span></span></span><span class="c r" style="left:921px;width:73px"><span class="k" style="width: 12px;">￥</span><span class="m"><span class="k" style="width: 24px;">0.00</span></span></span><span class="c r" style="left:997px;width:73px"><span class="k" style="width: 12px;">￥</span><span class="m"><span class="k" style="width: 24px;">0.00</span></span></span></div>
<div class="row" style="top:444px"><span class="c" style="left:99px"><span class="m"><span class="k" style="width: 96px;">2022-06-04 19:32</span></span></span><span class="c" style="left:222px"><span class="k" style="width: 36px;">储值卡</span></span><span class="c r" style="left:290px;width:77px"><span class="k" style="width: 12px;">￥</span><span class="m"><span class="k" style="width: 30px;">12.50</span></span></span><span class="c r" style="left:370px;width:66px"><span class="m"><span class="k" style="width: 6px;">0</span></span></span><span class="c r" style="left:439px;width:69px"><span class="k" style="width: 12px;">￥</span><span class="m"><span class="k" style="width: 30px;">12.50</span></span></span><span class="c r" style="left:710px;width:66px"><span class="k" style="width: 12px;">￥</span><span class="m"><span class="k" style="width: 24px;">0.00</span></span></span><span class="c r" style="left:779px;width:67px"><span class="k" style="width: 12px;">￥</span><span class="m"><span class="k" style="width: 24px;">0.00</span></span></span><span class="c r" style="left:849px;width:69px"><span class="k" style="width: 12px;">￥</span><span class="m"><span class="k" style="width: 24px;">0.00</span></span></span><span class="c r" style="left:921px;width:73px"><span class="k" style="width: 12px;">￥</span><span class="m"><span class="k" style="width: 24px;">0.00</span></span></span><span class="c r" style="left:997px;width:73px"><span class="k" style="width: 12px;">￥</span><span class="m"><span class="k" style="width: 24px;">0.00</span></span></span></div>
<div class="row" style="top:461px"><span class="c" style="left:99px"><span class="m"><span class="k" style="width: 96px;">2022-04-15 18:24</span></span></span><span class="c" style="left:222px"><span class="k" style="width: 36px;">储值卡</span></span><span class="c r" style="left:290px;width:77px"><span class="k" style="width: 12px;">￥</span><span class="m"><span class="k" style="width: 30px;">12.50</span></span></span><span class="c r" style="left:370px;width:66px"><span class="m"><span class="k" style="width: 6px;">0</span></span></span><span class="c r" style="left:439px;width:69px"><span class="k" style="width: 12px;">￥</span><span class="m"><span class="k" style="width: 30px;">12.50</span></span></span><span class="c r" style="left:710px;width:66px"><span class="k" style="width: 12px;">￥</span><span class="m"><span class="k" style="width: 24px;">0.00</span></span></span><span class="c r" style="left:779px;width:67px"><span class="k" style="width: 12px;">￥</span><span class="m"><span class="k" style="width: 24px;">0.00</span></span></span><span class="c r" style="left:849px;width:69px"><span class="k" style="width: 12px;">￥</span><span class="m"><span class="k" style="width: 24px;">0.00</span></span></span><span class="c r" style="left:921px;width:73px"><span class="k" style="width: 12px;">￥</span><span class="m"><span class="k" style="width: 24px;">0.00</span></span></span><span class="c r" style="left:997px;width:73px"><span class="k" style="width: 12px;">￥</span><span class="m"><span class="k" style="width: 24px;">0.00</span></span></span></div>
<div class="row" style="top:478px"><span class="c" style="left:99px"><span class="m"><span class="k" style="width: 96px;">2022-03-06 19:16</span></span></span><span class="c" style="left:222px"><span class="k" style="width: 36px;">储值卡</span></span><span class="c r" style="left:290px;width:77px"><span class="k" style="width: 12px;">￥</span><span class="m"><span class="k" style="width: 30px;">12.50</span></span></span><span class="c r" style="left:370px;width:66px"><span class="m"><span class="k" style="width: 6px;">0</span></span></span><span class="c r" style="left:439px;width:69px"><span class="k" style="width: 12px;">￥</span><span class="m"><span class="k" style="width: 30px;">12.50</span></span></span><span class="c r" style="left:710px;width:66px"><span class="k" style="width: 12px;">￥</span><span class="m"><span class="k" style="width: 24px;">0.00</span></span></span><span class="c r" style="left:779px;width:67px"><span class="k" style="width: 12px;">￥</span><span class="m"><span class="k" style="width: 24px;">0.00</span></span></span><span class="c r" style="left:849px;width:69px"><span class="k" style="width: 12px;">￥</span><span class="m"><span class="k" style="width: 24px;">0.00</span></span></span><span class="c r" style="left:921px;width:73px"><span class="k" style="width: 12px;">￥</span><span class="m"><span class="k" style="width: 24px;">0.00</span></span></span><span class="c r" style="left:997px;width:73px"><span class="k" style="width: 12px;">￥</span><span class="m"><span class="k" style="width: 24px;">0.00</span></span></span></div>
<div class="row" style="top:495px"><span class="c" style="left:99px"><span class="m"><span class="k" style="width: 96px;">2022-01-20 12:05</span></span></span><span class="c" style="left:222px"><span class="k" style="width: 36px;">储值卡</span></span><span class="c r" style="left:290px;width:77px"><span class="k" style="width: 12px;">￥</span><span class="m"><span class="k" style="width: 30px;">12.00</span></span></span><span class="c r" style="left:370px;width:66px"><span class="m"><span class="k" style="width: 6px;">0</span></span></span><span class="c r" style="left:439px;width:69px"><span class="k" style="width: 12px;">￥</span><span class="m"><span class="k" style="width: 30px;">12.00</span></span></span><span class="c r" style="left:710px;width:66px"><span class="k" style="width: 12px;">￥</span><span class="m"><span class="k" style="width: 24px;">0.00</span></span></span><span class="c r" style="left:779px;width:67px"><span class="k" style="width: 12px;">￥</span><span class="m"><span class="k" style="width: 24px;">0.00</span></span></span><span class="c r" style="left:849px;width:69px"><span class="k" style="width: 12px;">￥</span><span class="m"><span class="k" style="width: 24px;">0.00</span></span></span><span class="c r" style="left:921px;width:73px"><span class="k" style="width: 12px;">￥</span><span class="m"><span class="k" style="width: 24px;">0.00</span></span></span><span class="c r" style="left:997px;width:73px"><span class="k" style="width: 12px;">￥</span><span class="m"><span class="k" style="width: 24px;">0.00</span></span></span></div>
<div class="row" style="top:512px"><span class="c" style="left:99px"><span class="m"><span class="k" style="width: 96px;">2021-12-21 10:04</span></span></span><span class="c" style="left:222px"><span class="k" style="width: 36px;">储值卡</span></span><span class="c r" style="left:290px;width:77px"><span class="k" style="width: 12px;">￥</span><span class="m"><span class="k" style="width: 30px;">12.00</span></span></span><span class="c r" style="left:370px;width:66px"><span class="m"><span class="k" style="width: 6px;">0</span></span></span><span class="c r" style="left:439px;width:69px"><span class="k" style="width: 12px;">￥</span><span class="m"><span class="k" style="width: 30px;">12.00</span></span></span><span class="c r" style="left:710px;width:66px"><span class="k" style="width: 12px;">￥</span><span class="m"><span class="k" style="width: 24px;">0.00</span></span></span><span class="c r" style="left:779px;width:67px"><span class="k" style="width: 12px;">￥</span><span class="m"><span class="k" style="width: 24px;">0.00</span></span></span><span class="c r" style="left:849px;width:69px"><span class="k" style="width: 12px;">￥</span><span class="m"><span class="k" style="width: 24px;">0.00</span></span></span><span class="c r" style="left:921px;width:73px"><span class="k" style="width: 12px;">￥</span><span class="m"><span class="k" style="width: 24px;">0.00</span></span></span><span class="c r" style="left:997px;width:73px"><span class="k" style="width: 12px;">￥</span><span class="m"><span class="k" style="width: 24px;">0.00</span></span></span></div>
<div class="row" style="top:529px"><span class="c" style="left:99px"><span class="m"><span class="k" style="width: 96px;">2021-11-11 11:22</span></span></span><span class="c" style="left:222px"><span class="k" style="width: 36px;">储值卡</span></span><span class="c r" style="left:290px;width:77px"><span class="k" style="width: 12px;">￥</span><span class="m"><span class="k" style="width: 30px;">12.00</span></span></span><span class="c r" style="left:370px;width:66px"><span class="m"><span class="k" style="width: 6px;">0</span></span></span><span class="c r" style="left:439px;width:69px"><span class="k" style="width: 12px;">￥</span><span class="m"><span class="k" style="width: 30px;">12.00</span></span></span><span class="c r" style="left:710px;width:66px"><span class="k" style="width: 12px;">￥</span><span class="m"><span class="k" style="width: 24px;">0.00</span></span></span><span class="c r" style="left:779px;width:67px"><span class="k" style="width: 12px;">￥</span><span class="m"><span class="k" style="width: 24px;">0.00</span></span></span><span class="c r" style="left:849px;width:69px"><span class="k" style="width: 12px;">￥</span><span class="m"><span class="k" style="width: 24px;">0.00</span></span></span><span class="c r" style="left:921px;width:73px"><span class="k" style="width: 12px;">￥</span><span class="m"><span class="k" style="width: 24px;">0.00</span></span></span><span class="c r" style="left:997px;width:73px"><span class="k" style="width: 12px;">￥</span><span class="m"><span class="k" style="width: 24px;">0.00</span></span></span></div>
<div class="row" style="top:546px"><span class="c" style="left:99px"><span class="m"><span class="k" style="width: 96px;">2021-10-07 13:54</span></span></span><span class="c" style="left:222px"><span class="k" style="width: 36px;">储值卡</span></span><span class="c r" style="left:290px;width:77px"><span class="k" style="width: 12px;">￥</span><span class="m"><span class="k" style="width: 24px;">4.00</span></span></span><span class="c r" style="left:370px;width:66px"><span class="m"><span class="k" style="width: 6px;">0</span></span></span><span class="c r" style="left:439px;width:69px"><span class="k" style="width: 12px;">￥</span><span class="m"><span class="k" style="width: 24px;">4.00</span></span></span><span class="c r" style="left:710px;width:66px"><span class="k" style="width: 12px;">￥</span><span class="m"><span class="k" style="width: 24px;">0.00</span></span></span><span class="c r" style="left:779px;width:67px"><span class="k" style="width: 12px;">￥</span><span class="m"><span class="k" style="width: 24px;">0.00</span></span></span><span class="c r" style="left:849px;width:69px"><span class="k" style="width: 12px;">￥</span><span class="m"><span class="k" style="width: 24px;">0.00</span></span></span><span class="c r" style="left:921px;width:73px"><span class="k" style="width: 12px;">￥</span><span class="m"><span class="k" style="width: 24px;">0.00</span></span></span><span class="c r" style="left:997px;width:73px"><span class="k" style="width: 12px;">￥</span><span class="m"><span class="k" style="width: 24px;">0.00</span></span></span></div>
<div class="row" style="top:563px"><span class="c" style="left:99px"><span class="m"><span class="k" style="width: 96px;">2021-08-19 17:04</span></span></span><span class="c" style="left:222px"><span class="k" style="width: 36px;">储值卡</span></span><span class="c r" style="left:290px;width:77px"><span class="k" style="width: 12px;">￥</span><span class="m"><span class="k" style="width: 30px;">12.00</span></span></span><span class="c r" style="left:370px;width:66px"><span class="m"><span class="k" style="width: 6px;">0</span></span></span><span class="c r" style="left:439px;width:69px"><span class="k" style="width: 12px;">￥</span><span class="m"><span class="k" style="width: 30px;">12.00</span></span></span><span class="c r" style="left:710px;width:66px"><span class="k" style="width: 12px;">￥</span><span class="m"><span class="k" style="width: 24px;">0.00</span></span></span><span class="c r" style="left:779px;width:67px"><span class="k" style="width: 12px;">￥</span><span class="m"><span class="k" style="width: 24px;">0.00</span></span></span><span class="c r" style="left:849px;width:69px"><span class="k" style="width: 12px;">￥</span><span class="m"><span class="k" style="width: 24px;">0.00</span></span></span><span class="c r" style="left:921px;width:73px"><span class="k" style="width: 12px;">￥</span><span class="m"><span class="k" style="width: 24px;">0.00</span></span></span><span class="c r" style="left:997px;width:73px"><span class="k" style="width: 12px;">￥</span><span class="m"><span class="k" style="width: 24px;">0.00</span></span></span></div>
<div class="row" style="top:580px"><span class="c" style="left:99px"><span class="m"><span class="k" style="width: 96px;">2021-08-05 10:42</span></span></span><span class="c" style="left:222px"><span class="k" style="width: 36px;">储值卡</span></span><span class="c r" style="left:290px;width:77px"><span class="k" style="width: 12px;">￥</span><span class="m"><span class="k" style="width: 30px;">12.00</span></span></span><span class="c r" style="left:370px;width:66px"><span class="m"><span class="k" style="width: 6px;">0</span></span></span><span class="c r" style="left:439px;width:69px"><span class="k" style="width: 12px;">￥</span><span class="m"><span class="k" style="width: 30px;">12.00</span></span></span><span class="c r" style="left:710px;width:66px"><span class="k" style="width: 12px;">￥</span><span class="m"><span class="k" style="width: 24px;">0.00</span></span></span><span class="c r" style="left:779px;width:67px"><span class="k" style="width: 12px;">￥</span><span class="m"><span class="k" style="width: 24px;">0.00</span></span></span><span class="c r" style="left:849px;width:69px"><span class="k" style="width: 12px;">￥</span><span class="m"><span class="k" style="width: 24px;">0.00</span></span></span><span class="c r" style="left:921px;width:73px"><span class="k" style="width: 12px;">￥</span><span class="m"><span class="k" style="width: 24px;">0.00</span></span></span><span class="c r" style="left:997px;width:73px"><span class="k" style="width: 12px;">￥</span><span class="m"><span class="k" style="width: 24px;">0.00</span></span></span></div>
<div class="row" style="top:597px"><span class="c" style="left:99px"><span class="m"><span class="k" style="width: 96px;">2021-07-08 10:27</span></span></span><span class="c" style="left:222px"><span class="k" style="width: 36px;">储值卡</span></span><span class="c r" style="left:290px;width:77px"><span class="k" style="width: 12px;">￥</span><span class="m"><span class="k" style="width: 30px;">12.00</span></span></span><span class="c r" style="left:370px;width:66px"><span class="m"><span class="k" style="width: 6px;">0</span></span></span><span class="c r" style="left:439px;width:69px"><span class="k" style="width: 12px;">￥</span><span class="m"><span class="k" style="width: 30px;">12.00</span></span></span><span class="c r" style="left:710px;width:66px"><span class="k" style="width: 12px;">￥</span><span class="m"><span class="k" style="width: 24px;">0.00</span></span></span><span class="c r" style="left:779px;width:67px"><span class="k" style="width: 12px;">￥</span><span class="m"><span class="k" style="width: 24px;">0.00</span></span></span><span class="c r" style="left:849px;width:69px"><span class="k" style="width: 12px;">￥</span><span class="m"><span class="k" style="width: 24px;">0.00</span></span></span><span class="c r" style="left:921px;width:73px"><span class="k" style="width: 12px;">￥</span><span class="m"><span class="k" style="width: 24px;">0.00</span></span></span><span class="c r" style="left:997px;width:73px"><span class="k" style="width: 12px;">￥</span><span class="m"><span class="k" style="width: 24px;">0.00</span></span></span></div>
<div class="row" style="top:614px"><span class="c" style="left:99px"><span class="m"><span class="k" style="width: 96px;">2021-05-20 17:17</span></span></span><span class="c" style="left:222px"><span class="k" style="width: 36px;">储值卡</span></span><span class="c r" style="left:290px;width:77px"><span class="k" style="width: 12px;">￥</span><span class="m"><span class="k" style="width: 30px;">12.00</span></span></span><span class="c r" style="left:370px;width:66px"><span class="m"><span class="k" style="width: 6px;">0</span></span></span><span class="c r" style="left:439px;width:69px"><span class="k" style="width: 12px;">￥</span><span class="m"><span class="k" style="width: 30px;">12.00</span></span></span><span class="c r" style="left:710px;width:66px"><span class="k" style="width: 12px;">￥</span><span class="m"><span class="k" style="width: 24px;">0.00</span></span></span><span class="c r" style="left:779px;width:67px"><span class="k" style="width: 12px;">￥</span><span class="m"><span class="k" style="width: 24px;">0.00</span></span></span><span class="c r" style="left:849px;width:69px"><span class="k" style="width: 12px;">￥</span><span class="m"><span class="k" style="width: 24px;">0.00</span></span></span><span class="c r" style="left:921px;width:73px"><span class="k" style="width: 12px;">￥</span><span class="m"><span class="k" style="width: 24px;">0.00</span></span></span><span class="c r" style="left:997px;width:73px"><span class="k" style="width: 12px;">￥</span><span class="m"><span class="k" style="width: 24px;">0.00</span></span></span></div>
<div class="hl" style="top:358px"></div>
<div class="hl" style="top:375px"></div>
<div class="hl" style="top:392px"></div>
<div class="hl" style="top:409px"></div>
<div class="hl" style="top:426px"></div>
<div class="hl" style="top:443px"></div>
<div class="hl" style="top:460px"></div>
<div class="hl" style="top:477px"></div>
<div class="hl" style="top:494px"></div>
<div class="hl" style="top:511px"></div>
<div class="hl" style="top:528px"></div>
<div class="hl" style="top:545px"></div>
<div class="hl" style="top:562px"></div>
<div class="hl" style="top:579px"></div>
<div class="hl" style="top:596px"></div>
<div class="hl" style="top:613px"></div>
<div class="hl" style="top:630px"></div>
<div class="vl" style="left:219px"></div>
<div class="vls" style="left:219px"></div>
<div class="vl" style="left:290px"></div>
<div class="vls" style="left:290px"></div>
<div class="vl" style="left:370px"></div>
<div class="vls" style="left:370px"></div>
<div class="vl" style="left:439px"></div>
<div class="vls" style="left:439px"></div>
<div class="vl" style="left:511px"></div>
<div class="vls" style="left:511px"></div>
<div class="vl" style="left:579px"></div>
<div class="vls" style="left:579px"></div>
<div class="vl" style="left:647px"></div>
<div class="vls" style="left:647px"></div>
<div class="vl" style="left:710px"></div>
<div class="vls" style="left:710px"></div>
<div class="vl" style="left:779px"></div>
<div class="vls" style="left:779px"></div>
<div class="vl" style="left:849px"></div>
<div class="vls" style="left:849px"></div>
<div class="vl" style="left:921px"></div>
<div class="vls" style="left:921px"></div>
<div class="vl" style="left:997px"></div>
<div class="vls" style="left:997px"></div>
<div class="vl" style="left:1073px"></div>
<div class="vls" style="left:1073px"></div>

<svg class="a" style="left:0;top:0;z-index:50;pointer-events:none" width="1085" height="632" shape-rendering="crispEdges"><defs>
<path id="g0" d="M7 2h3v1h-3zM1 3h6v1h-6zM4 4h1v1h-1zM8 4h1v1h-1zM2 5h6v1h-6zM5 6h1v1h-1zM4 7h1v1h-1zM8 7h1v1h-1zM1 8h9v1h-9zM5 9h1v1h-1zM9 9h1v1h-1zM3 10h1v1h-1zM5 10h1v1h-1zM7 10h1v1h-1zM2 11h1v1h-1zM5 11h1v1h-1zM8 11h1v1h-1zM1 12h1v1h-1zM4 12h2v1h-2zM9 12h1v1h-1z"/>
<path id="g1" d="M2 2h1v1h-1zM7 2h1v1h-1zM2 3h1v1h-1zM4 3h7v1h-7zM1 4h1v1h-1zM6 4h1v1h-1zM1 5h1v1h-1zM3 5h1v1h-1zM5 5h1v1h-1zM9 5h1v1h-1zM0 6h3v1h-3zM4 6h7v1h-7zM2 7h1v1h-1zM6 7h1v1h-1zM8 7h1v1h-1zM10 7h1v1h-1zM1 8h1v1h-1zM6 8h1v1h-1zM8 8h1v1h-1zM0 9h4v1h-4zM6 9h1v1h-1zM8 9h1v1h-1zM6 10h1v1h-1zM8 10h1v1h-1zM10 10h1v1h-1zM2 11h2v1h-2zM5 11h1v1h-1zM8 11h1v1h-1zM10 11h1v1h-1zM0 12h2v1h-2zM4 12h1v1h-1zM8 12h3v1h-3z"/>
<path id="g2" d="M2 2h1v1h-1zM6 2h2v1h-2zM2 3h1v1h-1zM5 3h1v1h-1zM8 3h1v1h-1zM1 4h1v1h-1zM4 4h7v1h-7zM1 5h1v1h-1zM3 5h1v1h-1zM5 5h1v1h-1zM8 5h1v1h-1zM0 6h3v1h-3zM5 6h5v1h-5zM2 7h1v1h-1zM5 7h1v1h-1zM8 7h1v1h-1zM1 8h1v1h-1zM5 8h1v1h-1zM8 8h1v1h-1zM0 9h4v1h-4zM5 9h5v1h-5zM4 10h2v1h-2zM8 10h1v1h-1zM2 11h2v1h-2zM5 11h1v1h-1zM8 11h1v1h-1zM0 12h2v1h-2zM5 12h6v1h-6z"/>
<path id="g3" d="M2 2h1v1h-1zM7 2h1v1h-1zM2 3h1v1h-1zM8 3h1v1h-1zM0 4h4v1h-4zM5 4h6v1h-6zM2 5h1v1h-1zM5 5h1v1h-1zM10 5h1v1h-1zM2 6h1v1h-1zM5 6h1v1h-1zM10 6h1v1h-1zM2 7h2v1h-2zM5 7h6v1h-6zM1 8h2v1h-2zM5 8h1v1h-1zM0 9h1v1h-1zM2 9h1v1h-1zM5 9h1v1h-1zM2 10h1v1h-1zM5 10h1v1h-1zM2 11h1v1h-1zM4 11h1v1h-1zM0 12h4v1h-4z"/>
<path id="g4" d="M2 3h7v1h-7zM2 4h1v1h-1zM8 4h1v1h-1zM2 5h1v1h-1zM8 5h1v1h-1zM2 6h1v1h-1zM8 6h1v1h-1zM2 7h7v1h-7zM2 8h1v1h-1zM8 8h1v1h-1zM2 9h1v1h-1zM8 9h1v1h-1zM2 10h1v1h-1zM8 10h1v1h-1zM2 11h7v1h-7zM2 12h1v1h-1zM8 12h1v1h-1z"/>
<path id="g5" d="M2 2h1v1h-1zM5 2h1v1h-1zM8 2h1v1h-1zM1 3h10v1h-10zM1 4h1v1h-1zM10 4h1v1h-1zM0 5h1v1h-1zM3 5h6v1h-6zM10 5h1v1h-1zM3 6h1v1h-1zM8 6h1v1h-1zM3 7h6v1h-6zM5 8h1v1h-1zM2 9h8v1h-8zM2 10h1v1h-1zM5 10h1v1h-1zM9 10h1v1h-1zM2 11h1v1h-1zM5 11h1v1h-1zM8 11h2v1h-2zM5 12h1v1h-1z"/>
<path id="g6" d="M2 2h1v1h-1zM5 2h5v1h-5zM2 3h1v1h-1zM5 3h1v1h-1zM9 3h1v1h-1zM0 4h4v1h-4zM5 4h5v1h-5zM2 5h1v1h-1zM4 5h3v1h-3zM8 5h3v1h-3zM2 6h1v1h-1zM4 6h1v1h-1zM6 6h1v1h-1zM8 6h1v1h-1zM10 6h1v1h-1zM2 7h5v1h-5zM8 7h3v1h-3zM0 8h3v1h-3zM7 8h1v1h-1zM2 9h9v1h-9zM2 10h1v1h-1zM6 10h3v1h-3zM2 11h1v1h-1zM5 11h1v1h-1zM7 11h1v1h-1zM9 11h1v1h-1zM1 12h2v1h-2zM4 12h1v1h-1zM7 12h1v1h-1zM10 12h1v1h-1z"/>
<path id="g7" d="M3 2h1v1h-1zM5 2h1v1h-1zM3 3h1v1h-1zM5 3h1v1h-1zM2 4h1v1h-1zM5 4h6v1h-6zM2 5h1v1h-1zM4 5h1v1h-1zM6 5h1v1h-1zM1 6h3v1h-3zM6 6h1v1h-1zM0 7h1v1h-1zM2 7h1v1h-1zM6 7h4v1h-4zM2 8h1v1h-1zM6 8h1v1h-1zM2 9h1v1h-1zM6 9h1v1h-1zM2 10h1v1h-1zM6 10h5v1h-5zM2 11h1v1h-1zM6 11h1v1h-1zM2 12h1v1h-1zM6 12h1v1h-1z"/>
<path id="g8" d="M1 2h1v1h-1zM6 2h1v1h-1zM1 3h1v1h-1zM6 3h1v1h-1zM0 4h5v1h-5zM6 4h5v1h-5zM1 5h1v1h-1zM6 5h1v1h-1zM10 5h1v1h-1zM0 6h1v1h-1zM2 6h1v1h-1zM5 6h1v1h-1zM7 6h1v1h-1zM9 6h1v1h-1zM0 7h5v1h-5zM7 7h1v1h-1zM2 8h1v1h-1zM7 8h1v1h-1zM2 9h3v1h-3zM6 9h1v1h-1zM8 9h1v1h-1zM0 10h3v1h-3zM6 10h1v1h-1zM8 10h1v1h-1zM2 11h1v1h-1zM5 11h1v1h-1zM9 11h1v1h-1zM2 12h1v1h-1zM4 12h1v1h-1zM10 12h1v1h-1z"/>
<path id="g9" d="M3 2h1v1h-1zM7 2h1v1h-1zM3 3h1v1h-1zM5 3h1v1h-1zM7 3h1v1h-1zM2 4h1v1h-1zM5 4h1v1h-1zM7 4h1v1h-1zM2 5h1v1h-1zM4 5h6v1h-6zM1 6h3v1h-3zM7 6h1v1h-1zM0 7h1v1h-1zM2 7h1v1h-1zM7 7h1v1h-1zM2 8h1v1h-1zM4 8h7v1h-7zM2 9h1v1h-1zM7 9h1v1h-1zM2 10h1v1h-1zM7 10h1v1h-1zM2 11h1v1h-1zM7 11h1v1h-1zM2 12h1v1h-1zM7 12h1v1h-1z"/>
<path id="g10" d="M3 2h1v1h-1zM1 3h5v1h-5zM7 3h4v1h-4zM3 4h1v1h-1zM7 4h1v1h-1zM10 4h1v1h-1zM1 5h5v1h-5zM7 5h1v1h-1zM9 5h1v1h-1zM3 6h1v1h-1zM7 6h1v1h-1zM10 6h1v1h-1zM0 7h6v1h-6zM7 7h4v1h-4zM2 8h1v1h-1zM5 8h1v1h-1zM7 8h1v1h-1zM1 9h9v1h-9zM2 10h1v1h-1zM5 10h1v1h-1zM9 10h1v1h-1zM2 11h1v1h-1zM5 11h1v1h-1zM8 11h2v1h-2zM5 12h1v1h-1z"/>
<path id="g11" d="M7 2h1v1h-1zM1 3h4v1h-4zM7 3h1v1h-1zM1 4h1v1h-1zM4 4h1v1h-1zM7 4h1v1h-1zM1 5h1v1h-1zM4 5h1v1h-1zM6 5h5v1h-5zM1 6h4v1h-4zM7 6h1v1h-1zM10 6h1v1h-1zM1 7h1v1h-1zM4 7h1v1h-1zM7 7h1v1h-1zM10 7h1v1h-1zM1 8h4v1h-4zM7 8h1v1h-1zM10 8h1v1h-1zM1 9h1v1h-1zM4 9h1v1h-1zM7 9h1v1h-1zM10 9h1v1h-1zM1 10h1v1h-1zM3 10h4v1h-4zM10 10h1v1h-1zM0 11h3v1h-3zM6 11h1v1h-1zM8 11h1v1h-1zM10 11h1v1h-1zM5 12h1v1h-1zM9 12h1v1h-1z"/>
<path id="g12" d="M5 2h1v1h-1zM4 3h1v1h-1zM6 3h1v1h-1zM3 4h1v1h-1zM7 4h1v1h-1zM2 5h1v1h-1zM8 5h1v1h-1zM0 6h2v1h-2zM3 6h5v1h-5zM9 6h2v1h-2zM1 9h9v1h-9zM4 10h1v1h-1zM3 11h1v1h-1zM8 11h1v1h-1zM2 12h8v1h-8z"/>
<path id="g13" d="M2 2h7v1h-7zM2 3h1v1h-1zM8 3h1v1h-1zM2 4h7v1h-7zM1 6h9v1h-9zM1 7h1v1h-1zM9 7h1v1h-1zM1 8h1v1h-1zM5 8h1v1h-1zM9 8h1v1h-1zM1 9h1v1h-1zM5 9h1v1h-1zM9 9h1v1h-1zM1 10h1v1h-1zM4 10h1v1h-1zM6 10h1v1h-1zM9 10h1v1h-1zM3 11h1v1h-1zM7 11h1v1h-1zM0 12h3v1h-3zM8 12h3v1h-3z"/>
<path id="g14" d="M1 2h1v1h-1zM4 2h1v1h-1zM7 2h1v1h-1zM10 2h1v1h-1zM2 3h1v1h-1zM5 3h1v1h-1zM7 3h1v1h-1zM9 3h1v1h-1zM0 4h1v1h-1zM7 4h1v1h-1zM1 5h1v1h-1zM3 5h1v1h-1zM5 5h6v1h-6zM3 6h1v1h-1zM5 6h1v1h-1zM10 6h1v1h-1zM2 7h1v1h-1zM5 7h6v1h-6zM2 8h1v1h-1zM5 8h1v1h-1zM10 8h1v1h-1zM0 9h2v1h-2zM5 9h6v1h-6zM1 10h1v1h-1zM5 10h1v1h-1zM10 10h1v1h-1zM1 11h1v1h-1zM5 11h1v1h-1zM10 11h1v1h-1zM1 12h1v1h-1zM5 12h1v1h-1zM9 12h2v1h-2z"/>
<path id="g15" d="M4 2h1v1h-1zM7 2h1v1h-1zM1 3h9v1h-9zM4 4h1v1h-1zM7 4h1v1h-1zM9 4h1v1h-1zM1 5h9v1h-9zM1 6h1v1h-1zM4 6h1v1h-1zM7 6h1v1h-1zM1 7h10v1h-10zM2 8h1v1h-1zM8 8h1v1h-1zM10 8h1v1h-1zM2 9h1v1h-1zM5 9h1v1h-1zM8 9h1v1h-1zM2 10h1v1h-1zM5 10h1v1h-1zM8 10h1v1h-1zM4 11h1v1h-1zM6 11h2v1h-2zM1 12h3v1h-3zM8 12h2v1h-2z"/>
<path id="g16" d="M2 2h1v1h-1zM7 2h1v1h-1zM2 3h4v1h-4zM7 3h4v1h-4zM1 4h1v1h-1zM3 4h1v1h-1zM6 4h1v1h-1zM8 4h1v1h-1zM0 5h11v1h-11zM0 6h1v1h-1zM10 6h1v1h-1zM2 7h7v1h-7zM2 8h1v1h-1zM8 8h1v1h-1zM2 9h8v1h-8zM2 10h1v1h-1zM9 10h1v1h-1zM2 11h1v1h-1zM9 11h1v1h-1zM2 12h8v1h-8z"/>
<path id="g17" d="M4 2h7v1h-7zM0 3h5v1h-5zM7 3h1v1h-1zM10 3h1v1h-1zM2 4h1v1h-1zM4 4h7v1h-7zM2 5h1v1h-1zM4 5h1v1h-1zM7 5h1v1h-1zM10 5h1v1h-1zM2 6h1v1h-1zM4 6h1v1h-1zM7 6h1v1h-1zM10 6h1v1h-1zM0 7h11v1h-11zM2 8h1v1h-1zM7 8h1v1h-1zM2 9h1v1h-1zM5 9h5v1h-5zM2 10h2v1h-2zM7 10h1v1h-1zM0 11h2v1h-2zM7 11h1v1h-1zM4 12h7v1h-7z"/>
<path id="g18" d="M2 2h1v1h-1zM5 2h5v1h-5zM2 3h1v1h-1zM5 3h1v1h-1zM9 3h1v1h-1zM0 4h10v1h-10zM2 5h1v1h-1zM5 5h1v1h-1zM9 5h1v1h-1zM2 6h1v1h-1zM5 6h5v1h-5zM2 7h2v1h-2zM1 8h2v1h-2zM4 8h7v1h-7zM0 9h1v1h-1zM2 9h1v1h-1zM5 9h1v1h-1zM7 9h1v1h-1zM2 10h1v1h-1zM5 10h1v1h-1zM7 10h4v1h-4zM2 11h1v1h-1zM4 11h1v1h-1zM6 11h2v1h-2zM0 12h4v1h-4zM7 12h4v1h-4z"/>
<path id="g19" d="M0 2h5v1h-5zM6 2h5v1h-5zM1 3h1v1h-1zM3 3h1v1h-1zM6 3h1v1h-1zM10 3h1v1h-1zM1 4h1v1h-1zM3 4h1v1h-1zM6 4h5v1h-5zM0 5h5v1h-5zM6 5h1v1h-1zM10 5h1v1h-1zM0 6h1v1h-1zM2 6h1v1h-1zM4 6h1v1h-1zM6 6h5v1h-5zM0 7h2v1h-2zM3 7h2v1h-2zM6 7h1v1h-1zM8 7h1v1h-1zM0 8h1v1h-1zM4 8h1v1h-1zM6 8h5v1h-5zM0 9h6v1h-6zM8 9h1v1h-1zM0 10h1v1h-1zM4 10h1v1h-1zM6 10h5v1h-5zM0 11h5v1h-5zM8 11h1v1h-1zM0 12h1v1h-1zM4 12h7v1h-7z"/>
<path id="g20" d="M0 2h5v1h-5zM6 2h5v1h-5zM3 3h1v1h-1zM8 3h1v1h-1zM1 4h2v1h-2zM6 4h5v1h-5zM2 5h1v1h-1zM6 5h1v1h-1zM10 5h1v1h-1zM0 6h5v1h-5zM6 6h1v1h-1zM8 6h1v1h-1zM10 6h1v1h-1zM2 7h1v1h-1zM4 7h1v1h-1zM6 7h1v1h-1zM8 7h1v1h-1zM10 7h1v1h-1zM2 8h1v1h-1zM6 8h1v1h-1zM8 8h1v1h-1zM10 8h1v1h-1zM2 9h1v1h-1zM6 9h1v1h-1zM8 9h1v1h-1zM10 9h1v1h-1zM2 10h1v1h-1zM6 10h1v1h-1zM8 10h1v1h-1zM10 10h1v1h-1zM2 11h1v1h-1zM7 11h1v1h-1zM9 11h1v1h-1zM1 12h2v1h-2zM5 12h2v1h-2zM10 12h1v1h-1z"/>
<path id="g21" d="M2 2h1v1h-1zM6 2h1v1h-1zM2 3h1v1h-1zM6 3h1v1h-1zM1 4h1v1h-1zM4 4h1v1h-1zM6 4h5v1h-5zM1 5h1v1h-1zM3 5h1v1h-1zM5 5h1v1h-1zM10 5h1v1h-1zM0 6h3v1h-3zM10 6h1v1h-1zM2 7h1v1h-1zM6 7h1v1h-1zM10 7h1v1h-1zM1 8h1v1h-1zM7 8h1v1h-1zM10 8h1v1h-1zM0 9h4v1h-4zM7 9h1v1h-1zM10 9h1v1h-1zM4 10h1v1h-1zM10 10h1v1h-1zM2 11h2v1h-2zM7 11h1v1h-1zM10 11h1v1h-1zM0 12h2v1h-2zM8 12h2v1h-2z"/>
<path id="g22" d="M1 2h1v1h-1zM7 2h1v1h-1zM2 3h1v1h-1zM7 3h1v1h-1zM7 4h1v1h-1zM4 5h7v1h-7zM0 6h3v1h-3zM7 6h1v1h-1zM2 7h1v1h-1zM7 7h1v1h-1zM2 8h1v1h-1zM7 8h1v1h-1zM2 9h1v1h-1zM4 9h1v1h-1zM7 9h1v1h-1zM2 10h2v1h-2zM7 10h1v1h-1zM2 11h1v1h-1zM7 11h1v1h-1zM7 12h1v1h-1z"/>
<path id="g23" d="M2 2h1v1h-1zM5 2h5v1h-5zM2 3h1v1h-1zM5 3h1v1h-1zM9 3h1v1h-1zM0 4h6v1h-6zM9 4h1v1h-1zM2 5h1v1h-1zM5 5h1v1h-1zM7 5h2v1h-2zM2 6h1v1h-1zM4 6h2v1h-2zM2 7h2v1h-2zM5 7h6v1h-6zM1 8h2v1h-2zM5 8h1v1h-1zM7 8h1v1h-1zM9 8h1v1h-1zM0 9h1v1h-1zM2 9h1v1h-1zM5 9h1v1h-1zM7 9h1v1h-1zM9 9h1v1h-1zM2 10h1v1h-1zM5 10h1v1h-1zM8 10h1v1h-1zM2 11h1v1h-1zM5 11h1v1h-1zM7 11h1v1h-1zM9 11h1v1h-1zM0 12h3v1h-3zM5 12h2v1h-2zM10 12h1v1h-1z"/>
<path id="g24" d="M5 2h1v1h-1zM1 3h9v1h-9zM5 4h1v1h-1zM2 5h7v1h-7zM5 6h1v1h-1zM0 7h11v1h-11zM4 8h1v1h-1zM6 8h1v1h-1zM9 8h1v1h-1zM3 9h1v1h-1zM6 9h1v1h-1zM8 9h1v1h-1zM2 10h2v1h-2zM7 10h1v1h-1zM0 11h2v1h-2zM3 11h1v1h-1zM5 11h1v1h-1zM8 11h1v1h-1zM3 12h2v1h-2zM9 12h2v1h-2z"/>
<path id="g25" d="M1 2h1v1h-1zM4 2h7v1h-7zM1 3h1v1h-1zM1 4h3v1h-3zM5 4h5v1h-5zM0 5h1v1h-1zM2 5h1v1h-1zM5 5h1v1h-1zM9 5h1v1h-1zM2 6h1v1h-1zM5 6h1v1h-1zM9 6h1v1h-1zM0 7h4v1h-4zM5 7h5v1h-5zM2 8h1v1h-1zM2 9h1v1h-1zM5 9h1v1h-1zM9 9h1v1h-1zM1 10h1v1h-1zM3 10h1v1h-1zM6 10h1v1h-1zM8 10h1v1h-1zM1 11h1v1h-1zM8 11h1v1h-1zM0 12h1v1h-1zM4 12h7v1h-7z"/>
<path id="g26" d="M3 2h1v1h-1zM6 2h1v1h-1zM3 3h1v1h-1zM7 3h1v1h-1zM2 4h1v1h-1zM4 4h7v1h-7zM2 5h1v1h-1zM1 6h2v1h-2zM5 6h5v1h-5zM0 7h1v1h-1zM2 7h1v1h-1zM2 8h1v1h-1zM5 8h5v1h-5zM2 9h1v1h-1zM2 10h1v1h-1zM5 10h5v1h-5zM2 11h1v1h-1zM5 11h1v1h-1zM9 11h1v1h-1zM2 12h1v1h-1zM5 12h5v1h-5z"/>
<path id="g27" d="M1 2h4v1h-4zM6 2h1v1h-1zM10 2h1v1h-1zM2 3h1v1h-1zM4 3h1v1h-1zM7 3h1v1h-1zM9 3h1v1h-1zM0 4h11v1h-11zM2 5h1v1h-1zM4 5h1v1h-1zM8 5h1v1h-1zM1 6h4v1h-4zM6 6h5v1h-5zM2 7h1v1h-1zM8 7h1v1h-1zM1 8h4v1h-4zM8 8h1v1h-1zM0 9h1v1h-1zM2 9h1v1h-1zM4 9h7v1h-7zM2 10h1v1h-1zM4 10h1v1h-1zM8 10h1v1h-1zM2 11h1v1h-1zM4 11h1v1h-1zM8 11h1v1h-1zM2 12h3v1h-3zM8 12h1v1h-1z"/>
<path id="g28" d="M2 2h1v1h-1zM5 2h1v1h-1zM8 2h1v1h-1zM2 3h1v1h-1zM5 3h1v1h-1zM9 3h1v1h-1zM1 4h1v1h-1zM5 4h1v1h-1zM1 5h10v1h-10zM4 6h1v1h-1zM4 7h5v1h-5zM4 8h1v1h-1zM8 8h1v1h-1zM3 9h1v1h-1zM5 9h1v1h-1zM7 9h1v1h-1zM2 10h1v1h-1zM6 10h1v1h-1zM1 11h1v1h-1zM5 11h1v1h-1zM7 11h2v1h-2zM0 12h1v1h-1zM3 12h2v1h-2zM9 12h2v1h-2z"/>
<path id="g29" d="M1 2h1v1h-1zM5 2h4v1h-4zM2 3h1v1h-1zM5 3h1v1h-1zM8 3h1v1h-1zM5 4h1v1h-1zM8 4h1v1h-1zM4 5h1v1h-1zM8 5h3v1h-3zM0 6h3v1h-3zM2 7h1v1h-1zM4 7h6v1h-6zM2 8h1v1h-1zM5 8h1v1h-1zM9 8h1v1h-1zM2 9h1v1h-1zM6 9h1v1h-1zM8 9h1v1h-1zM2 10h2v1h-2zM7 10h1v1h-1zM2 11h1v1h-1zM6 11h1v1h-1zM8 11h1v1h-1zM3 12h3v1h-3zM9 12h2v1h-2z"/>
<path id="g30" d="M1 2h9v1h-9zM1 3h1v1h-1zM4 3h1v1h-1zM6 3h1v1h-1zM9 3h1v1h-1zM1 4h9v1h-9zM5 5h1v1h-1zM0 6h11v1h-11zM2 7h1v1h-1zM8 7h1v1h-1zM2 8h7v1h-7zM2 9h1v1h-1zM8 9h1v1h-1zM2 10h7v1h-7zM2 11h1v1h-1zM8 11h1v1h-1zM0 12h11v1h-11z"/>
<path id="g31" d="M5 2h1v1h-1zM0 3h11v1h-11zM3 5h1v1h-1zM7 5h1v1h-1zM2 6h1v1h-1zM8 6h1v1h-1zM1 7h1v1h-1zM3 7h1v1h-1zM7 7h1v1h-1zM9 7h1v1h-1zM3 8h1v1h-1zM7 8h1v1h-1zM4 9h1v1h-1zM6 9h1v1h-1zM5 10h1v1h-1zM3 11h2v1h-2zM6 11h2v1h-2zM1 12h2v1h-2zM8 12h3v1h-3z"/>
<path id="g32" d="M6 2h1v1h-1zM0 3h4v1h-4zM6 3h5v1h-5zM2 4h1v1h-1zM6 4h1v1h-1zM8 4h1v1h-1zM2 5h1v1h-1zM4 5h1v1h-1zM6 5h1v1h-1zM8 5h1v1h-1zM0 6h5v1h-5zM6 6h1v1h-1zM8 6h1v1h-1zM2 7h1v1h-1zM4 7h1v1h-1zM6 7h5v1h-5zM2 8h1v1h-1zM4 8h1v1h-1zM6 8h1v1h-1zM8 8h1v1h-1zM2 9h1v1h-1zM5 9h1v1h-1zM8 9h1v1h-1zM2 10h2v1h-2zM5 10h1v1h-1zM8 10h1v1h-1zM0 11h2v1h-2zM4 11h1v1h-1zM8 11h1v1h-1zM3 12h1v1h-1zM6 12h5v1h-5z"/>
<path id="g33" d="M2 2h1v1h-1zM4 2h1v1h-1zM6 2h1v1h-1zM8 2h1v1h-1zM1 3h2v1h-2zM4 3h1v1h-1zM6 3h1v1h-1zM8 3h1v1h-1zM0 4h1v1h-1zM2 4h5v1h-5zM8 4h1v1h-1zM7 5h4v1h-4zM1 6h1v1h-1zM3 6h3v1h-3zM7 6h1v1h-1zM9 6h1v1h-1zM0 7h2v1h-2zM6 7h2v1h-2zM9 7h1v1h-1zM1 8h1v1h-1zM3 8h3v1h-3zM7 8h1v1h-1zM9 8h1v1h-1zM1 9h1v1h-1zM3 9h1v1h-1zM5 9h1v1h-1zM8 9h1v1h-1zM1 10h1v1h-1zM3 10h1v1h-1zM5 10h2v1h-2zM8 10h1v1h-1zM1 11h1v1h-1zM3 11h1v1h-1zM5 11h1v1h-1zM7 11h1v1h-1zM9 11h1v1h-1zM1 12h2v1h-2zM6 12h1v1h-1zM10 12h1v1h-1z"/>
<path id="g34" d="M4 2h1v1h-1zM7 2h1v1h-1zM1 3h10v1h-10zM4 4h1v1h-1zM7 4h1v1h-1zM1 5h10v1h-10zM1 6h1v1h-1zM10 6h1v1h-1zM1 7h1v1h-1zM3 7h6v1h-6zM3 8h1v1h-1zM8 8h1v1h-1zM2 9h8v1h-8zM2 10h1v1h-1zM9 10h1v1h-1zM2 11h1v1h-1zM9 11h1v1h-1zM2 12h8v1h-8z"/>
<path id="g35" d="M1 2h1v1h-1zM7 2h1v1h-1zM1 3h1v1h-1zM5 3h1v1h-1zM7 3h1v1h-1zM10 3h1v1h-1zM1 4h4v1h-4zM6 4h2v1h-2zM9 4h1v1h-1zM0 5h1v1h-1zM5 5h6v1h-6zM0 6h6v1h-6zM10 6h1v1h-1zM2 7h1v1h-1zM5 7h6v1h-6zM0 8h6v1h-6zM10 8h1v1h-1zM2 9h1v1h-1zM5 9h6v1h-6zM2 10h1v1h-1zM4 10h2v1h-2zM10 10h1v1h-1zM2 11h2v1h-2zM5 11h1v1h-1zM10 11h1v1h-1zM2 12h1v1h-1zM5 12h1v1h-1zM8 12h3v1h-3z"/>
<path id="g36" d="M0 2h1v1h-1zM4 2h6v1h-6zM1 3h1v1h-1zM4 3h1v1h-1zM9 3h1v1h-1zM1 4h1v1h-1zM4 4h6v1h-6zM4 5h1v1h-1zM9 5h1v1h-1zM0 6h2v1h-2zM4 6h6v1h-6zM1 7h1v1h-1zM4 7h1v1h-1zM1 8h1v1h-1zM4 8h1v1h-1zM6 8h2v1h-2zM9 8h1v1h-1zM1 9h1v1h-1zM4 9h1v1h-1zM8 9h1v1h-1zM1 10h1v1h-1zM4 10h3v1h-3zM9 10h1v1h-1zM0 11h1v1h-1zM2 11h2v1h-2zM0 12h1v1h-1zM4 12h7v1h-7z"/>
<path id="g37" d="M5 2h1v1h-1zM1 3h1v1h-1zM5 3h1v1h-1zM9 3h1v1h-1zM1 4h1v1h-1zM5 4h1v1h-1zM9 4h1v1h-1zM1 5h1v1h-1zM5 5h1v1h-1zM9 5h1v1h-1zM1 6h9v1h-9zM5 7h1v1h-1zM0 8h1v1h-1zM5 8h1v1h-1zM10 8h1v1h-1zM0 9h1v1h-1zM5 9h1v1h-1zM10 9h1v1h-1zM0 10h1v1h-1zM5 10h1v1h-1zM10 10h1v1h-1zM0 11h1v1h-1zM5 11h1v1h-1zM10 11h1v1h-1zM0 12h11v1h-11z"/>
<path id="g38" d="M5 2h1v1h-1zM0 3h11v1h-11zM3 4h1v1h-1zM5 4h1v1h-1zM7 4h1v1h-1zM2 5h1v1h-1zM5 5h1v1h-1zM8 5h1v1h-1zM0 6h11v1h-11zM2 7h1v1h-1zM8 7h1v1h-1zM2 8h7v1h-7zM2 9h1v1h-1zM8 9h1v1h-1zM2 10h7v1h-7zM0 12h11v1h-11z"/>
<path id="g39" d="M1 2h1v1h-1zM5 2h1v1h-1zM2 3h1v1h-1zM5 3h6v1h-6zM4 4h1v1h-1zM10 4h1v1h-1zM0 5h4v1h-4zM5 5h4v1h-4zM10 5h1v1h-1zM2 6h1v1h-1zM5 6h1v1h-1zM8 6h1v1h-1zM10 6h1v1h-1zM2 7h1v1h-1zM5 7h4v1h-4zM10 7h1v1h-1zM2 8h1v1h-1zM5 8h1v1h-1zM8 8h1v1h-1zM10 8h1v1h-1zM2 9h1v1h-1zM5 9h1v1h-1zM8 9h1v1h-1zM10 9h1v1h-1zM2 10h2v1h-2zM5 10h4v1h-4zM10 10h1v1h-1zM2 11h1v1h-1zM10 11h1v1h-1zM8 12h2v1h-2z"/>
<path id="g40" d="M1 2h1v1h-1zM7 2h1v1h-1zM2 3h1v1h-1zM4 3h7v1h-7zM2 4h1v1h-1zM7 4h1v1h-1zM5 5h5v1h-5zM0 6h3v1h-3zM7 6h1v1h-1zM2 7h1v1h-1zM4 7h7v1h-7zM2 8h1v1h-1zM5 8h1v1h-1zM9 8h1v1h-1zM2 9h1v1h-1zM5 9h5v1h-5zM2 10h1v1h-1zM5 10h1v1h-1zM9 10h1v1h-1zM2 11h2v1h-2zM5 11h5v1h-5zM2 12h1v1h-1zM5 12h1v1h-1zM9 12h1v1h-1z"/>
<path id="g41" d="M1 2h1v1h-1zM7 2h1v1h-1zM1 3h1v1h-1zM6 3h1v1h-1zM8 3h1v1h-1zM0 4h4v1h-4zM5 4h1v1h-1zM9 4h1v1h-1zM1 5h1v1h-1zM4 5h1v1h-1zM6 5h3v1h-3zM10 5h1v1h-1zM0 6h1v1h-1zM2 6h1v1h-1zM0 7h7v1h-7zM10 7h1v1h-1zM2 8h1v1h-1zM4 8h1v1h-1zM6 8h1v1h-1zM8 8h1v1h-1zM10 8h1v1h-1zM2 9h5v1h-5zM8 9h1v1h-1zM10 9h1v1h-1zM0 10h3v1h-3zM4 10h1v1h-1zM6 10h1v1h-1zM8 10h1v1h-1zM10 10h1v1h-1zM2 11h1v1h-1zM4 11h3v1h-3zM8 11h1v1h-1zM10 11h1v1h-1zM2 12h1v1h-1zM4 12h1v1h-1zM6 12h1v1h-1zM9 12h2v1h-2z"/>
<path id="g42" d="M3 2h2v1h-2zM5 3h1v1h-1zM5 4h1v1h-1zM5 5h1v1h-1zM4 6h1v1h-1zM6 6h1v1h-1zM4 7h1v1h-1zM6 7h1v1h-1zM3 8h1v1h-1zM7 8h1v1h-1zM3 9h1v1h-1zM7 9h1v1h-1zM2 10h1v1h-1zM8 10h1v1h-1zM1 11h1v1h-1zM9 11h1v1h-1zM0 12h1v1h-1zM10 12h1v1h-1z"/>
<path id="g43" d="M2 2h1v1h-1zM7 2h1v1h-1zM2 3h1v1h-1zM4 3h7v1h-7zM1 4h1v1h-1zM4 4h1v1h-1zM10 4h1v1h-1zM1 5h1v1h-1zM3 5h8v1h-8zM0 6h3v1h-3zM4 6h1v1h-1zM2 7h1v1h-1zM4 7h7v1h-7zM1 8h1v1h-1zM4 8h1v1h-1zM6 8h1v1h-1zM8 8h1v1h-1zM10 8h1v1h-1zM0 9h11v1h-11zM4 10h1v1h-1zM6 10h1v1h-1zM8 10h1v1h-1zM10 10h1v1h-1zM2 11h3v1h-3zM6 11h1v1h-1zM8 11h1v1h-1zM10 11h1v1h-1zM0 12h2v1h-2zM4 12h1v1h-1zM9 12h2v1h-2z"/>
<path id="g44" d="M2 2h7v1h-7zM2 3h1v1h-1zM8 3h1v1h-1zM2 4h7v1h-7zM0 6h11v1h-11zM4 7h1v1h-1zM3 8h6v1h-6zM8 9h1v1h-1zM8 10h1v1h-1zM5 11h1v1h-1zM8 11h1v1h-1zM6 12h2v1h-2z"/>
<path id="g45" d="M6 2h1v1h-1zM8 2h1v1h-1zM6 3h1v1h-1zM9 3h1v1h-1zM0 4h11v1h-11zM6 5h1v1h-1zM1 6h4v1h-4zM6 6h1v1h-1zM9 6h1v1h-1zM1 7h1v1h-1zM4 7h1v1h-1zM6 7h1v1h-1zM9 7h1v1h-1zM1 8h4v1h-4zM7 8h1v1h-1zM9 8h1v1h-1zM7 9h2v1h-2zM3 10h3v1h-3zM8 10h1v1h-1zM10 10h1v1h-1zM0 11h3v1h-3zM7 11h1v1h-1zM9 11h2v1h-2zM5 12h2v1h-2zM10 12h1v1h-1z"/>
<path id="g46" d="M2 2h1v1h-1zM8 2h1v1h-1zM2 3h1v1h-1zM6 3h1v1h-1zM8 3h1v1h-1zM0 4h5v1h-5zM6 4h1v1h-1zM8 4h1v1h-1zM2 5h1v1h-1zM4 5h1v1h-1zM6 5h5v1h-5zM2 6h1v1h-1zM4 6h2v1h-2zM8 6h1v1h-1zM1 7h1v1h-1zM4 7h1v1h-1zM8 7h1v1h-1zM1 8h1v1h-1zM3 8h1v1h-1zM6 8h5v1h-5zM2 9h2v1h-2zM8 9h1v1h-1zM2 10h1v1h-1zM4 10h1v1h-1zM8 10h1v1h-1zM1 11h1v1h-1zM4 11h1v1h-1zM8 11h1v1h-1zM0 12h1v1h-1zM5 12h6v1h-6z"/>
<path id="g47" d="M3 2h1v1h-1zM3 3h7v1h-7zM3 4h1v1h-1zM8 4h1v1h-1zM2 5h1v1h-1zM4 5h1v1h-1zM7 5h1v1h-1zM1 6h1v1h-1zM5 6h2v1h-2zM5 7h1v1h-1zM3 8h7v1h-7zM0 9h4v1h-4zM9 9h1v1h-1zM3 10h1v1h-1zM9 10h1v1h-1zM3 11h1v1h-1zM9 11h1v1h-1zM3 12h7v1h-7z"/>
<path id="a48" d="M5 -2h1v1h-1zM4 -1h1v1h-1zM4 0h1v1h-1zM3 1h1v1h-1zM3 2h1v1h-1zM3 3h1v1h-1zM3 4h1v1h-1zM3 5h1v1h-1zM4 6h1v1h-1zM4 7h1v1h-1zM5 8h1v1h-1z"/>
<path id="a49" d="M1 0h5v1h-5zM2 1h1v1h-1zM5 1h1v1h-1zM2 2h1v1h-1zM4 2h1v1h-1zM2 3h3v1h-3zM2 4h1v1h-1zM4 4h1v1h-1zM2 5h1v1h-1zM2 6h1v1h-1zM1 7h3v1h-3z"/>
<path id="a50" d="M2 0h3v1h-3zM1 1h1v1h-1zM5 1h1v1h-1zM1 2h1v1h-1zM5 2h1v1h-1zM2 3h3v1h-3zM1 4h1v1h-1zM5 4h1v1h-1zM1 5h1v1h-1zM5 5h1v1h-1zM1 6h1v1h-1zM5 6h1v1h-1zM2 7h3v1h-3z"/>
<path id="a51" d="M2 -2h1v1h-1zM3 -1h1v1h-1zM3 0h1v1h-1zM4 1h1v1h-1zM4 2h1v1h-1zM4 3h1v1h-1zM4 4h1v1h-1zM4 5h1v1h-1zM3 6h1v1h-1zM3 7h1v1h-1zM2 8h1v1h-1z"/>
<path id="g52" d="M1 2h1v1h-1zM4 2h1v1h-1zM10 2h1v1h-1zM2 3h1v1h-1zM5 3h1v1h-1zM10 3h1v1h-1zM0 4h1v1h-1zM3 4h4v1h-4zM8 4h1v1h-1zM10 4h1v1h-1zM1 5h1v1h-1zM6 5h1v1h-1zM8 5h1v1h-1zM10 5h1v1h-1zM4 6h1v1h-1zM6 6h1v1h-1zM8 6h1v1h-1zM10 6h1v1h-1zM2 7h1v1h-1zM5 7h1v1h-1zM8 7h1v1h-1zM10 7h1v1h-1zM2 8h1v1h-1zM5 8h1v1h-1zM8 8h1v1h-1zM10 8h1v1h-1zM0 9h2v1h-2zM4 9h1v1h-1zM6 9h1v1h-1zM8 9h1v1h-1zM10 9h1v1h-1zM1 10h1v1h-1zM3 10h1v1h-1zM6 10h1v1h-1zM10 10h1v1h-1zM1 11h2v1h-2zM10 11h1v1h-1zM1 12h1v1h-1zM9 12h2v1h-2z"/>
<path id="g53" d="M3 2h1v1h-1zM6 2h1v1h-1zM1 3h1v1h-1zM3 3h1v1h-1zM6 3h5v1h-5zM1 4h1v1h-1zM3 4h1v1h-1zM5 4h1v1h-1zM8 4h1v1h-1zM1 5h1v1h-1zM3 5h1v1h-1zM9 5h1v1h-1zM2 6h7v1h-7zM2 7h1v1h-1zM8 7h1v1h-1zM2 8h1v1h-1zM5 8h1v1h-1zM8 8h1v1h-1zM2 9h1v1h-1zM5 9h1v1h-1zM8 9h1v1h-1zM2 10h1v1h-1zM5 10h1v1h-1zM8 10h1v1h-1zM10 10h1v1h-1zM3 11h2v1h-2zM6 11h1v1h-1zM10 11h1v1h-1zM0 12h3v1h-3zM6 12h5v1h-5z"/>
<path id="a54" d="M2 0h3v1h-3zM1 1h1v1h-1zM5 1h1v1h-1zM1 2h1v1h-1zM5 2h1v1h-1zM1 3h1v1h-1zM4 3h2v1h-2zM2 4h2v1h-2zM5 4h1v1h-1zM5 5h1v1h-1zM1 6h1v1h-1zM4 6h1v1h-1zM2 7h2v1h-2z"/>
<path id="g55" d="M2 2h1v1h-1zM4 2h1v1h-1zM7 2h1v1h-1zM1 3h5v1h-5zM7 3h1v1h-1zM2 4h1v1h-1zM4 4h1v1h-1zM7 4h4v1h-4zM0 5h8v1h-8zM9 5h1v1h-1zM1 6h1v1h-1zM4 6h1v1h-1zM7 6h1v1h-1zM9 6h1v1h-1zM1 7h4v1h-4zM7 7h1v1h-1zM9 7h1v1h-1zM1 8h1v1h-1zM4 8h1v1h-1zM7 8h1v1h-1zM9 8h1v1h-1zM1 9h4v1h-4zM7 9h1v1h-1zM9 9h1v1h-1zM1 10h1v1h-1zM4 10h1v1h-1zM8 10h1v1h-1zM1 11h1v1h-1zM4 11h1v1h-1zM7 11h1v1h-1zM9 11h1v1h-1zM1 12h1v1h-1zM3 12h2v1h-2zM6 12h1v1h-1zM10 12h1v1h-1z"/>
<path id="g56" d="M5 2h1v1h-1zM1 3h10v1h-10zM1 4h1v1h-1zM4 4h1v1h-1zM10 4h1v1h-1zM3 5h6v1h-6zM2 6h1v1h-1zM4 6h1v1h-1zM7 6h1v1h-1zM1 7h1v1h-1zM5 7h2v1h-2zM3 8h2v1h-2zM7 8h2v1h-2zM1 9h10v1h-10zM3 10h1v1h-1zM8 10h1v1h-1zM3 11h1v1h-1zM8 11h1v1h-1zM3 12h6v1h-6z"/>
<path id="g57" d="M1 2h1v1h-1zM7 2h1v1h-1zM2 3h1v1h-1zM4 3h7v1h-7zM7 4h1v1h-1zM0 5h1v1h-1zM3 5h1v1h-1zM5 5h5v1h-5zM1 6h1v1h-1zM3 6h1v1h-1zM7 6h1v1h-1zM2 7h1v1h-1zM4 7h7v1h-7zM2 8h1v1h-1zM5 8h1v1h-1zM9 8h1v1h-1zM0 9h2v1h-2zM5 9h3v1h-3zM9 9h1v1h-1zM1 10h1v1h-1zM5 10h1v1h-1zM7 10h3v1h-3zM1 11h1v1h-1zM5 11h1v1h-1zM9 11h1v1h-1zM1 12h1v1h-1zM5 12h1v1h-1zM8 12h2v1h-2z"/>
<path id="g58" d="M0 2h4v1h-4zM7 2h1v1h-1zM0 3h1v1h-1zM3 3h1v1h-1zM6 3h1v1h-1zM8 3h1v1h-1zM0 4h1v1h-1zM2 4h1v1h-1zM5 4h1v1h-1zM9 4h1v1h-1zM0 5h2v1h-2zM4 5h1v1h-1zM6 5h3v1h-3zM10 5h1v1h-1zM0 6h1v1h-1zM2 6h1v1h-1zM7 6h1v1h-1zM0 7h1v1h-1zM3 7h8v1h-8zM0 8h1v1h-1zM3 8h1v1h-1zM7 8h1v1h-1zM0 9h3v1h-3zM5 9h1v1h-1zM7 9h1v1h-1zM9 9h1v1h-1zM0 10h1v1h-1zM4 10h1v1h-1zM7 10h1v1h-1zM10 10h1v1h-1zM0 11h1v1h-1zM3 11h1v1h-1zM7 11h1v1h-1zM10 11h1v1h-1zM0 12h1v1h-1zM6 12h2v1h-2z"/>
<path id="g59" d="M4 2h1v1h-1zM2 3h7v1h-7zM2 4h1v1h-1zM8 4h1v1h-1zM2 5h7v1h-7zM2 6h1v1h-1zM8 6h1v1h-1zM2 7h7v1h-7zM2 8h1v1h-1zM8 8h1v1h-1zM2 9h7v1h-7zM1 10h1v1h-1zM3 10h1v1h-1zM5 10h1v1h-1zM9 10h1v1h-1zM1 11h1v1h-1zM3 11h1v1h-1zM6 11h1v1h-1zM8 11h1v1h-1zM10 11h1v1h-1zM0 12h1v1h-1zM4 12h5v1h-5z"/>
<path id="g60" d="M1 2h1v1h-1zM4 2h6v1h-6zM2 3h1v1h-1zM6 3h1v1h-1zM6 4h1v1h-1zM0 5h1v1h-1zM3 5h8v1h-8zM1 6h1v1h-1zM4 6h1v1h-1zM8 6h1v1h-1zM2 7h2v1h-2zM6 7h1v1h-1zM9 7h2v1h-2zM2 8h1v1h-1zM6 8h1v1h-1zM0 9h2v1h-2zM4 9h1v1h-1zM6 9h2v1h-2zM9 9h1v1h-1zM1 10h1v1h-1zM4 10h1v1h-1zM6 10h1v1h-1zM8 10h1v1h-1zM10 10h1v1h-1zM1 11h1v1h-1zM3 11h1v1h-1zM6 11h1v1h-1zM8 11h1v1h-1zM10 11h1v1h-1zM1 12h1v1h-1zM5 12h2v1h-2z"/>
<path id="g61" d="M2 2h1v1h-1zM2 3h1v1h-1zM0 4h6v1h-6zM7 4h4v1h-4zM2 5h1v1h-1zM5 5h1v1h-1zM7 5h1v1h-1zM10 5h1v1h-1zM2 6h1v1h-1zM5 6h1v1h-1zM7 6h1v1h-1zM10 6h1v1h-1zM2 7h1v1h-1zM5 7h1v1h-1zM7 7h1v1h-1zM10 7h1v1h-1zM2 8h1v1h-1zM5 8h1v1h-1zM7 8h1v1h-1zM10 8h1v1h-1zM2 9h1v1h-1zM5 9h1v1h-1zM7 9h1v1h-1zM10 9h1v1h-1zM1 10h1v1h-1zM5 10h1v1h-1zM7 10h1v1h-1zM10 10h1v1h-1zM1 11h1v1h-1zM3 11h1v1h-1zM5 11h1v1h-1zM7 11h4v1h-4zM0 12h1v1h-1zM4 12h1v1h-1zM7 12h1v1h-1zM10 12h1v1h-1z"/>
<path id="a62" d="M1 0h5v1h-5zM1 1h1v1h-1zM1 2h1v1h-1zM1 3h4v1h-4zM1 4h1v1h-1zM5 4h1v1h-1zM5 5h1v1h-1zM1 6h1v1h-1zM5 6h1v1h-1zM2 7h3v1h-3z"/>
<path id="g63" d="M4 2h1v1h-1zM4 3h5v1h-5zM4 4h1v1h-1zM4 5h1v1h-1zM0 6h11v1h-11zM4 7h1v1h-1zM4 8h1v1h-1zM6 8h1v1h-1zM4 9h1v1h-1zM7 9h1v1h-1zM4 10h1v1h-1zM8 10h1v1h-1zM4 11h1v1h-1zM4 12h1v1h-1z"/>
<path id="c64" d="M2 5h2v2h-2zM2 9h2v2h-2z"/>
<path id="g65" d="M3 2h1v1h-1zM3 3h1v1h-1zM6 3h1v1h-1zM9 3h1v1h-1zM1 4h5v1h-5zM7 4h1v1h-1zM9 4h1v1h-1zM3 5h1v1h-1zM8 5h1v1h-1zM0 6h7v1h-7zM8 6h1v1h-1zM3 7h1v1h-1zM8 7h1v1h-1zM1 8h1v1h-1zM3 8h3v1h-3zM7 8h1v1h-1zM9 8h1v1h-1zM1 9h1v1h-1zM3 9h1v1h-1zM7 9h1v1h-1zM9 9h1v1h-1zM1 10h3v1h-3zM6 10h1v1h-1zM9 10h1v1h-1zM0 11h1v1h-1zM3 11h2v1h-2zM0 12h1v1h-1zM5 12h6v1h-6z"/>
<path id="g66" d="M2 2h1v1h-1zM6 2h1v1h-1zM2 3h1v1h-1zM6 3h4v1h-4zM0 4h6v1h-6zM8 4h1v1h-1zM2 5h1v1h-1zM5 5h6v1h-6zM0 6h6v1h-6zM7 6h1v1h-1zM10 6h1v1h-1zM2 7h1v1h-1zM5 7h1v1h-1zM7 7h1v1h-1zM10 7h1v1h-1zM0 8h11v1h-11zM2 9h1v1h-1zM5 9h1v1h-1zM2 10h1v1h-1zM5 10h1v1h-1zM10 10h1v1h-1zM2 11h1v1h-1zM5 11h1v1h-1zM10 11h1v1h-1zM2 12h1v1h-1zM6 12h5v1h-5z"/>
<path id="g67" d="M2 2h9v1h-9zM2 3h1v1h-1zM6 3h1v1h-1zM10 3h1v1h-1zM2 4h1v1h-1zM4 4h5v1h-5zM10 4h1v1h-1zM2 5h1v1h-1zM6 5h1v1h-1zM10 5h1v1h-1zM2 6h9v1h-9zM2 7h1v1h-1zM10 7h1v1h-1zM2 8h1v1h-1zM4 8h5v1h-5zM10 8h1v1h-1zM2 9h1v1h-1zM4 9h1v1h-1zM8 9h1v1h-1zM10 9h1v1h-1zM1 10h1v1h-1zM4 10h5v1h-5zM10 10h1v1h-1zM1 11h1v1h-1zM10 11h1v1h-1zM0 12h1v1h-1zM9 12h2v1h-2z"/>
<path id="g68" d="M3 2h1v1h-1zM7 2h1v1h-1zM2 3h1v1h-1zM7 3h1v1h-1zM1 4h4v1h-4zM6 4h5v1h-5zM1 5h1v1h-1zM4 5h2v1h-2zM10 5h1v1h-1zM1 6h1v1h-1zM4 6h1v1h-1zM10 6h1v1h-1zM1 7h4v1h-4zM6 7h1v1h-1zM10 7h1v1h-1zM1 8h1v1h-1zM4 8h1v1h-1zM7 8h1v1h-1zM10 8h1v1h-1zM1 9h1v1h-1zM4 9h1v1h-1zM7 9h1v1h-1zM10 9h1v1h-1zM1 10h1v1h-1zM4 10h1v1h-1zM10 10h1v1h-1zM1 11h4v1h-4zM10 11h1v1h-1zM1 12h1v1h-1zM4 12h1v1h-1zM8 12h2v1h-2z"/>
<path id="g69" d="M1 2h1v1h-1zM6 2h1v1h-1zM1 3h4v1h-4zM6 3h5v1h-5zM0 4h1v1h-1zM3 4h1v1h-1zM5 4h1v1h-1zM8 4h1v1h-1zM1 5h9v1h-9zM5 6h1v1h-1zM0 7h11v1h-11zM7 8h1v1h-1zM1 9h9v1h-9zM3 10h1v1h-1zM7 10h1v1h-1zM4 11h1v1h-1zM7 11h1v1h-1zM6 12h2v1h-2z"/>
<path id="g70" d="M2 2h1v1h-1zM4 2h6v1h-6zM2 3h1v1h-1zM6 3h1v1h-1zM9 3h1v1h-1zM1 4h1v1h-1zM4 4h1v1h-1zM6 4h1v1h-1zM9 4h1v1h-1zM1 5h1v1h-1zM3 5h1v1h-1zM6 5h1v1h-1zM8 5h1v1h-1zM0 6h3v1h-3zM6 6h1v1h-1zM8 6h3v1h-3zM2 7h1v1h-1zM6 7h1v1h-1zM10 7h1v1h-1zM1 8h1v1h-1zM6 8h1v1h-1zM10 8h1v1h-1zM0 9h4v1h-4zM5 9h1v1h-1zM7 9h1v1h-1zM9 9h1v1h-1zM4 10h2v1h-2zM8 10h1v1h-1zM2 11h2v1h-2zM5 11h1v1h-1zM7 11h1v1h-1zM9 11h1v1h-1zM0 12h2v1h-2zM4 12h1v1h-1zM6 12h1v1h-1zM10 12h1v1h-1z"/>
<path id="g71" d="M3 2h1v1h-1zM7 2h1v1h-1zM1 3h9v1h-9zM1 4h1v1h-1zM4 4h1v1h-1zM6 4h1v1h-1zM9 4h1v1h-1zM2 5h1v1h-1zM4 5h1v1h-1zM6 5h1v1h-1zM8 5h1v1h-1zM0 6h11v1h-11zM2 8h7v1h-7zM2 9h1v1h-1zM8 9h1v1h-1zM2 10h7v1h-7zM2 11h1v1h-1zM8 11h1v1h-1zM2 12h7v1h-7z"/>
<path id="g72" d="M1 2h1v1h-1zM4 2h6v1h-6zM2 3h1v1h-1zM6 3h1v1h-1zM8 3h1v1h-1zM2 4h1v1h-1zM4 4h7v1h-7zM4 5h1v1h-1zM7 5h1v1h-1zM10 5h1v1h-1zM0 6h3v1h-3zM4 6h7v1h-7zM2 7h1v1h-1zM4 7h1v1h-1zM7 7h1v1h-1zM10 7h1v1h-1zM2 8h1v1h-1zM4 8h7v1h-7zM2 9h1v1h-1zM4 9h1v1h-1zM7 9h1v1h-1zM10 9h1v1h-1zM2 10h1v1h-1zM4 10h1v1h-1zM7 10h1v1h-1zM9 10h2v1h-2zM1 11h1v1h-1zM3 11h1v1h-1zM0 12h1v1h-1zM4 12h7v1h-7z"/>
<path id="g73" d="M2 2h1v1h-1zM9 2h2v1h-2zM2 3h1v1h-1zM6 3h3v1h-3zM0 4h5v1h-5zM6 4h1v1h-1zM2 5h1v1h-1zM6 5h1v1h-1zM2 6h1v1h-1zM6 6h5v1h-5zM2 7h3v1h-3zM6 7h1v1h-1zM9 7h1v1h-1zM1 8h2v1h-2zM6 8h1v1h-1zM9 8h1v1h-1zM0 9h1v1h-1zM2 9h1v1h-1zM6 9h1v1h-1zM9 9h1v1h-1zM2 10h1v1h-1zM6 10h1v1h-1zM9 10h1v1h-1zM2 11h1v1h-1zM5 11h1v1h-1zM9 11h1v1h-1zM0 12h3v1h-3zM4 12h1v1h-1zM9 12h1v1h-1z"/>
<path id="g74" d="M2 2h1v1h-1zM2 3h1v1h-1zM6 3h5v1h-5zM0 4h5v1h-5zM6 4h1v1h-1zM10 4h1v1h-1zM2 5h1v1h-1zM6 5h1v1h-1zM10 5h1v1h-1zM2 6h1v1h-1zM4 6h1v1h-1zM6 6h1v1h-1zM10 6h1v1h-1zM2 7h2v1h-2zM6 7h1v1h-1zM10 7h1v1h-1zM1 8h2v1h-2zM6 8h1v1h-1zM10 8h1v1h-1zM0 9h1v1h-1zM2 9h1v1h-1zM6 9h1v1h-1zM10 9h1v1h-1zM2 10h1v1h-1zM6 10h1v1h-1zM10 10h1v1h-1zM2 11h1v1h-1zM6 11h5v1h-5zM0 12h3v1h-3z"/>
<path id="a75" d="M3 0h1v1h-1zM2 1h2v1h-2zM3 2h1v1h-1zM3 3h1v1h-1zM3 4h1v1h-1zM3 5h1v1h-1zM3 6h1v1h-1zM2 7h3v1h-3z"/>
<path id="g76" d="M3 2h1v1h-1zM6 2h1v1h-1zM9 2h1v1h-1zM3 3h1v1h-1zM6 3h1v1h-1zM10 3h1v1h-1zM2 4h1v1h-1zM6 4h1v1h-1zM2 5h9v1h-9zM1 6h2v1h-2zM6 6h1v1h-1zM0 7h1v1h-1zM2 7h1v1h-1zM6 7h2v1h-2zM2 8h1v1h-1zM6 8h2v1h-2zM2 9h1v1h-1zM5 9h1v1h-1zM7 9h1v1h-1zM2 10h1v1h-1zM5 10h1v1h-1zM7 10h1v1h-1zM10 10h1v1h-1zM2 11h1v1h-1zM4 11h1v1h-1zM7 11h1v1h-1zM10 11h1v1h-1zM2 12h2v1h-2zM8 12h3v1h-3z"/>
<path id="g77" d="M5 2h1v1h-1zM0 3h11v1h-11zM2 4h1v1h-1zM5 4h1v1h-1zM9 4h1v1h-1zM2 5h8v1h-8zM2 6h1v1h-1zM5 6h1v1h-1zM9 6h1v1h-1zM2 7h8v1h-8zM5 8h1v1h-1zM9 8h1v1h-1zM1 9h8v1h-8zM10 9h1v1h-1zM1 10h1v1h-1zM3 10h1v1h-1zM6 10h1v1h-1zM9 10h1v1h-1zM1 11h1v1h-1zM3 11h1v1h-1zM8 11h1v1h-1zM10 11h1v1h-1zM0 12h1v1h-1zM4 12h5v1h-5zM10 12h1v1h-1z"/>
<path id="g78" d="M4 2h1v1h-1zM5 3h1v1h-1zM0 4h11v1h-11zM4 5h1v1h-1zM4 6h1v1h-1zM4 7h5v1h-5zM3 8h1v1h-1zM8 8h1v1h-1zM3 9h1v1h-1zM8 9h1v1h-1zM2 10h1v1h-1zM8 10h1v1h-1zM1 11h1v1h-1zM8 11h1v1h-1zM0 12h1v1h-1zM5 12h3v1h-3z"/>
<path id="g79" d="M6 2h1v1h-1zM8 2h1v1h-1zM6 3h1v1h-1zM9 3h1v1h-1zM6 4h1v1h-1zM0 5h11v1h-11zM6 6h1v1h-1zM1 7h4v1h-4zM6 7h1v1h-1zM3 8h1v1h-1zM6 8h1v1h-1zM3 9h1v1h-1zM7 9h1v1h-1zM3 10h1v1h-1zM7 10h1v1h-1zM10 10h1v1h-1zM3 11h2v1h-2zM8 11h1v1h-1zM10 11h1v1h-1zM0 12h3v1h-3zM9 12h2v1h-2z"/>
<path id="g80" d="M0 2h11v1h-11zM6 3h1v1h-1zM6 4h1v1h-1zM5 5h1v1h-1zM4 6h2v1h-2zM7 6h1v1h-1zM3 7h1v1h-1zM5 7h1v1h-1zM8 7h1v1h-1zM2 8h1v1h-1zM5 8h1v1h-1zM9 8h1v1h-1zM1 9h1v1h-1zM5 9h1v1h-1zM10 9h1v1h-1zM0 10h1v1h-1zM5 10h1v1h-1zM5 11h1v1h-1zM5 12h1v1h-1z"/>
<path id="a81" d="M2 0h3v1h-3zM1 1h1v1h-1zM5 1h1v1h-1zM5 2h1v1h-1zM3 3h2v1h-2zM5 4h1v1h-1zM5 5h1v1h-1zM1 6h1v1h-1zM5 6h1v1h-1zM2 7h3v1h-3z"/>
<path id="a82" d="M2 0h3v1h-3zM1 1h1v1h-1zM5 1h1v1h-1zM1 2h1v1h-1zM5 2h1v1h-1zM1 3h1v1h-1zM5 3h1v1h-1zM1 4h1v1h-1zM5 4h1v1h-1zM1 5h1v1h-1zM5 5h1v1h-1zM1 6h1v1h-1zM5 6h1v1h-1zM2 7h3v1h-3z"/>
<path id="g83" d="M3 2h1v1h-1zM7 2h1v1h-1zM3 3h1v1h-1zM7 3h1v1h-1zM2 4h1v1h-1zM8 4h1v1h-1zM2 5h1v1h-1zM8 5h1v1h-1zM1 6h1v1h-1zM9 6h1v1h-1zM0 7h1v1h-1zM2 7h7v1h-7zM10 7h1v1h-1zM4 8h1v1h-1zM8 8h1v1h-1zM4 9h1v1h-1zM8 9h1v1h-1zM3 10h1v1h-1zM8 10h1v1h-1zM2 11h1v1h-1zM8 11h1v1h-1zM0 12h2v1h-2zM6 12h2v1h-2z"/>
<path id="g84" d="M5 2h1v1h-1zM5 3h1v1h-1zM1 4h10v1h-10zM1 5h1v1h-1zM5 5h1v1h-1zM10 5h1v1h-1zM1 6h1v1h-1zM5 6h1v1h-1zM10 6h1v1h-1zM1 7h1v1h-1zM5 7h2v1h-2zM10 7h1v1h-1zM1 8h1v1h-1zM4 8h1v1h-1zM7 8h1v1h-1zM10 8h1v1h-1zM1 9h1v1h-1zM3 9h1v1h-1zM8 9h1v1h-1zM10 9h1v1h-1zM1 10h1v1h-1zM10 10h1v1h-1zM1 11h1v1h-1zM10 11h1v1h-1zM1 12h1v1h-1zM8 12h3v1h-3z"/>
<path id="g85" d="M5 2h1v1h-1zM4 3h1v1h-1zM6 3h1v1h-1zM3 4h1v1h-1zM7 4h1v1h-1zM2 5h1v1h-1zM8 5h1v1h-1zM0 6h2v1h-2zM3 6h5v1h-5zM9 6h2v1h-2zM5 7h1v1h-1zM1 8h9v1h-9zM5 9h1v1h-1zM3 10h1v1h-1zM5 10h1v1h-1zM7 10h1v1h-1zM2 11h1v1h-1zM5 11h1v1h-1zM8 11h1v1h-1zM1 12h1v1h-1zM4 12h2v1h-2zM9 12h1v1h-1z"/>
<path id="g86" d="M2 2h1v1h-1zM6 2h5v1h-5zM0 3h6v1h-6zM8 3h1v1h-1zM0 4h1v1h-1zM5 4h6v1h-6zM1 5h4v1h-4zM6 5h1v1h-1zM10 5h1v1h-1zM0 6h2v1h-2zM4 6h1v1h-1zM6 6h1v1h-1zM8 6h1v1h-1zM10 6h1v1h-1zM2 7h2v1h-2zM6 7h1v1h-1zM8 7h1v1h-1zM10 7h1v1h-1zM1 8h1v1h-1zM4 8h1v1h-1zM6 8h1v1h-1zM8 8h1v1h-1zM10 8h1v1h-1zM0 9h7v1h-7zM8 9h1v1h-1zM10 9h1v1h-1zM1 10h1v1h-1zM4 10h1v1h-1zM6 10h1v1h-1zM8 10h1v1h-1zM10 10h1v1h-1zM1 11h4v1h-4zM7 11h1v1h-1zM9 11h1v1h-1zM1 12h1v1h-1zM4 12h3v1h-3zM10 12h1v1h-1z"/>
<path id="a87" d="M2 7h1v1h-1z"/>
<path id="g88" d="M2 3h8v1h-8zM1 6h10v1h-10zM4 7h1v1h-1zM7 7h1v1h-1zM4 8h1v1h-1zM7 8h1v1h-1zM3 9h1v1h-1zM7 9h1v1h-1zM3 10h1v1h-1zM7 10h1v1h-1zM10 10h1v1h-1zM2 11h1v1h-1zM7 11h1v1h-1zM10 11h1v1h-1zM1 12h1v1h-1zM8 12h3v1h-3z"/>
<path id="g89" d="M1 2h9v1h-9zM1 3h1v1h-1zM5 3h1v1h-1zM9 3h1v1h-1zM1 4h9v1h-9zM1 5h1v1h-1zM5 5h1v1h-1zM9 5h1v1h-1zM1 6h9v1h-9zM4 7h1v1h-1zM7 7h1v1h-1zM2 8h5v1h-5zM3 9h1v1h-1zM8 9h1v1h-1zM1 10h7v1h-7zM9 10h1v1h-1zM3 11h1v1h-1zM5 11h1v1h-1zM7 11h1v1h-1zM0 12h3v1h-3zM4 12h2v1h-2zM8 12h3v1h-3z"/>
<path id="a90" d="M2 0h3v1h-3zM1 1h1v1h-1zM5 1h1v1h-1zM1 2h1v1h-1zM5 2h1v1h-1zM4 3h1v1h-1zM3 4h1v1h-1zM2 5h1v1h-1zM1 6h1v1h-1zM1 7h5v1h-5z"/>
<path id="a91" d="M4 0h1v1h-1zM3 1h2v1h-2zM3 2h2v1h-2zM2 3h1v1h-1zM4 3h1v1h-1zM1 4h1v1h-1zM4 4h1v1h-1zM1 5h5v1h-5zM4 6h1v1h-1zM3 7h3v1h-3z"/>
<path id="g92" d="M5 2h2v1h-2zM10 2h1v1h-1zM1 3h4v1h-4zM10 3h1v1h-1zM3 4h1v1h-1zM8 4h1v1h-1zM10 4h1v1h-1zM0 5h7v1h-7zM8 5h1v1h-1zM10 5h1v1h-1zM1 6h1v1h-1zM3 6h1v1h-1zM5 6h1v1h-1zM8 6h1v1h-1zM10 6h1v1h-1zM0 7h2v1h-2zM3 7h1v1h-1zM5 7h2v1h-2zM8 7h1v1h-1zM10 7h1v1h-1zM1 8h1v1h-1zM3 8h1v1h-1zM5 8h1v1h-1zM8 8h1v1h-1zM10 8h1v1h-1zM0 9h2v1h-2zM3 9h1v1h-1zM5 9h2v1h-2zM8 9h1v1h-1zM10 9h1v1h-1zM2 10h3v1h-3zM10 10h1v1h-1zM1 11h1v1h-1zM3 11h1v1h-1zM5 11h1v1h-1zM10 11h1v1h-1zM0 12h1v1h-1zM3 12h1v1h-1zM6 12h1v1h-1zM8 12h3v1h-3z"/>
<path id="g93" d="M1 2h1v1h-1zM6 2h1v1h-1zM2 3h1v1h-1zM6 3h1v1h-1zM2 4h1v1h-1zM5 4h6v1h-6zM5 5h1v1h-1zM9 5h1v1h-1zM2 6h1v1h-1zM4 6h1v1h-1zM7 6h1v1h-1zM2 7h1v1h-1zM7 7h1v1h-1zM0 8h2v1h-2zM7 8h1v1h-1zM1 9h1v1h-1zM6 9h1v1h-1zM8 9h1v1h-1zM1 10h1v1h-1zM6 10h1v1h-1zM8 10h1v1h-1zM1 11h1v1h-1zM5 11h1v1h-1zM9 11h1v1h-1zM3 12h2v1h-2zM10 12h1v1h-1z"/>
<path id="g94" d="M0 2h1v1h-1zM3 2h1v1h-1zM5 2h1v1h-1zM7 2h1v1h-1zM1 3h1v1h-1zM3 3h2v1h-2zM7 3h1v1h-1zM0 4h6v1h-6zM7 4h4v1h-4zM2 5h2v1h-2zM6 5h2v1h-2zM9 5h1v1h-1zM1 6h1v1h-1zM3 6h2v1h-2zM7 6h1v1h-1zM9 6h1v1h-1zM0 7h1v1h-1zM3 7h1v1h-1zM5 7h1v1h-1zM7 7h1v1h-1zM9 7h1v1h-1zM0 8h6v1h-6zM7 8h1v1h-1zM9 8h1v1h-1zM2 9h1v1h-1zM4 9h1v1h-1zM7 9h1v1h-1zM9 9h1v1h-1zM1 10h2v1h-2zM4 10h1v1h-1zM8 10h1v1h-1zM3 11h1v1h-1zM7 11h1v1h-1zM9 11h1v1h-1zM0 12h3v1h-3zM4 12h3v1h-3zM10 12h1v1h-1z"/>
<path id="g95" d="M3 2h1v1h-1zM7 2h2v1h-2zM0 3h1v1h-1zM3 3h1v1h-1zM7 3h1v1h-1zM9 3h1v1h-1zM1 4h1v1h-1zM3 4h1v1h-1zM7 4h1v1h-1zM1 5h1v1h-1zM3 5h8v1h-8zM3 6h1v1h-1zM7 6h1v1h-1zM3 7h1v1h-1zM7 7h1v1h-1zM2 8h2v1h-2zM6 8h1v1h-1zM8 8h1v1h-1zM0 9h2v1h-2zM3 9h1v1h-1zM6 9h1v1h-1zM8 9h1v1h-1zM3 10h1v1h-1zM5 10h1v1h-1zM9 10h1v1h-1zM3 11h1v1h-1zM5 11h1v1h-1zM9 11h1v1h-1zM3 12h2v1h-2zM10 12h1v1h-1z"/>
<path id="g96" d="M5 2h1v1h-1zM0 3h11v1h-11zM5 4h1v1h-1zM4 5h1v1h-1zM6 5h1v1h-1zM2 6h3v1h-3zM7 6h2v1h-2zM0 7h2v1h-2zM5 7h1v1h-1zM9 7h2v1h-2zM3 9h1v1h-1zM5 9h1v1h-1zM9 9h1v1h-1zM1 10h1v1h-1zM3 10h1v1h-1zM6 10h1v1h-1zM8 10h1v1h-1zM10 10h1v1h-1zM1 11h1v1h-1zM3 11h1v1h-1zM8 11h1v1h-1zM10 11h1v1h-1zM0 12h1v1h-1zM4 12h5v1h-5z"/>
<path id="g97" d="M0 3h11v1h-11zM8 4h1v1h-1zM2 5h4v1h-4zM8 5h1v1h-1zM2 6h1v1h-1zM5 6h1v1h-1zM8 6h1v1h-1zM2 7h1v1h-1zM5 7h1v1h-1zM8 7h1v1h-1zM2 8h4v1h-4zM8 8h1v1h-1zM2 9h1v1h-1zM5 9h1v1h-1zM8 9h1v1h-1zM8 10h1v1h-1zM8 11h1v1h-1zM6 12h3v1h-3z"/>
<path id="g98" d="M1 2h9v1h-9zM1 3h1v1h-1zM5 3h1v1h-1zM9 3h1v1h-1zM1 4h1v1h-1zM5 4h1v1h-1zM9 4h1v1h-1zM1 5h9v1h-9zM1 6h1v1h-1zM5 6h1v1h-1zM9 6h1v1h-1zM1 7h1v1h-1zM5 7h1v1h-1zM9 7h1v1h-1zM1 8h9v1h-9zM1 9h1v1h-1zM5 9h1v1h-1zM9 9h1v1h-1zM1 10h1v1h-1zM5 10h1v1h-1zM9 10h1v1h-1zM0 11h1v1h-1zM5 11h1v1h-1zM9 11h1v1h-1zM0 12h1v1h-1zM5 12h1v1h-1zM8 12h2v1h-2z"/>
<path id="g99" d="M3 2h2v1h-2zM0 3h3v1h-3zM6 3h5v1h-5zM2 4h1v1h-1zM6 4h1v1h-1zM10 4h1v1h-1zM0 5h5v1h-5zM6 5h1v1h-1zM10 5h1v1h-1zM2 6h1v1h-1zM6 6h1v1h-1zM10 6h1v1h-1zM1 7h3v1h-3zM6 7h5v1h-5zM1 8h2v1h-2zM4 8h1v1h-1zM0 9h1v1h-1zM2 9h1v1h-1zM6 9h1v1h-1zM9 9h1v1h-1zM0 10h1v1h-1zM2 10h1v1h-1zM6 10h1v1h-1zM9 10h1v1h-1zM2 11h1v1h-1zM5 11h1v1h-1zM10 11h1v1h-1zM2 12h1v1h-1zM4 12h1v1h-1zM10 12h1v1h-1z"/>
<path id="g100" d="M0 2h6v1h-6zM9 2h1v1h-1zM1 3h1v1h-1zM3 3h1v1h-1zM6 3h1v1h-1zM8 3h1v1h-1zM1 4h1v1h-1zM3 4h1v1h-1zM5 4h6v1h-6zM1 5h3v1h-3zM7 5h1v1h-1zM1 6h1v1h-1zM3 6h1v1h-1zM7 6h1v1h-1zM1 7h10v1h-10zM1 8h1v1h-1zM3 8h1v1h-1zM7 8h1v1h-1zM1 9h1v1h-1zM3 9h1v1h-1zM7 9h1v1h-1zM0 10h5v1h-5zM6 10h1v1h-1zM8 10h1v1h-1zM3 11h1v1h-1zM5 11h1v1h-1zM9 11h1v1h-1zM3 12h2v1h-2zM10 12h1v1h-1z"/>
<path id="g101" d="M5 2h1v1h-1zM5 3h1v1h-1zM1 4h9v1h-9zM1 5h1v1h-1zM5 5h1v1h-1zM9 5h1v1h-1zM1 6h9v1h-9zM1 7h1v1h-1zM5 7h1v1h-1zM9 7h1v1h-1zM1 8h1v1h-1zM5 8h1v1h-1zM9 8h1v1h-1zM1 9h9v1h-9zM5 10h1v1h-1zM10 10h1v1h-1zM5 11h1v1h-1zM10 11h1v1h-1zM6 12h5v1h-5z"/>
<path id="g102" d="M1 2h1v1h-1zM8 2h2v1h-2zM2 3h1v1h-1zM5 3h3v1h-3zM7 4h1v1h-1zM0 5h3v1h-3zM4 5h7v1h-7zM2 6h1v1h-1zM7 6h1v1h-1zM2 7h1v1h-1zM7 7h1v1h-1zM2 8h1v1h-1zM5 8h5v1h-5zM2 9h1v1h-1zM5 9h1v1h-1zM9 9h1v1h-1zM2 10h2v1h-2zM5 10h1v1h-1zM9 10h1v1h-1zM2 11h1v1h-1zM5 11h5v1h-5zM5 12h1v1h-1zM9 12h1v1h-1z"/>
<path id="g103" d="M2 2h1v1h-1zM7 2h1v1h-1zM2 3h1v1h-1zM5 3h1v1h-1zM7 3h1v1h-1zM2 4h1v1h-1zM5 4h1v1h-1zM7 4h1v1h-1zM9 4h1v1h-1zM0 5h4v1h-4zM5 5h1v1h-1zM7 5h3v1h-3zM2 6h1v1h-1zM5 6h3v1h-3zM9 6h1v1h-1zM2 7h1v1h-1zM4 7h2v1h-2zM7 7h1v1h-1zM9 7h1v1h-1zM2 8h1v1h-1zM5 8h1v1h-1zM7 8h1v1h-1zM9 8h1v1h-1zM2 9h1v1h-1zM5 9h1v1h-1zM7 9h3v1h-3zM2 10h2v1h-2zM5 10h1v1h-1zM7 10h1v1h-1zM10 10h1v1h-1zM0 11h2v1h-2zM5 11h1v1h-1zM10 11h1v1h-1zM6 12h5v1h-5z"/>
<path id="g104" d="M2 2h1v1h-1zM7 2h1v1h-1zM2 3h1v1h-1zM7 3h1v1h-1zM2 4h1v1h-1zM7 4h1v1h-1zM0 5h6v1h-6zM7 5h1v1h-1zM2 6h1v1h-1zM5 6h1v1h-1zM7 6h4v1h-4zM2 7h1v1h-1zM5 7h1v1h-1zM7 7h1v1h-1zM2 8h1v1h-1zM5 8h1v1h-1zM7 8h1v1h-1zM2 9h1v1h-1zM5 9h1v1h-1zM7 9h1v1h-1zM2 10h4v1h-4zM7 10h1v1h-1zM0 11h2v1h-2zM5 11h1v1h-1zM7 11h1v1h-1zM3 12h8v1h-8z"/>
<path id="g105" d="M1 2h10v1h-10zM1 3h1v1h-1zM4 3h1v1h-1zM7 3h1v1h-1zM10 3h1v1h-1zM1 4h1v1h-1zM4 4h1v1h-1zM6 4h1v1h-1zM10 4h1v1h-1zM1 5h5v1h-5zM9 5h1v1h-1zM1 6h1v1h-1zM4 6h1v1h-1zM6 6h5v1h-5zM1 7h1v1h-1zM4 7h1v1h-1zM6 7h1v1h-1zM10 7h1v1h-1zM1 8h4v1h-4zM6 8h1v1h-1zM10 8h1v1h-1zM1 9h1v1h-1zM4 9h1v1h-1zM6 9h5v1h-5zM1 11h1v1h-1zM3 11h1v1h-1zM6 11h1v1h-1zM9 11h1v1h-1zM0 12h1v1h-1zM4 12h1v1h-1zM7 12h1v1h-1zM10 12h1v1h-1z"/>
<path id="g106" d="M2 2h1v1h-1zM7 2h1v1h-1zM2 3h1v1h-1zM7 3h1v1h-1zM2 4h1v1h-1zM7 4h1v1h-1zM2 5h9v1h-9zM2 6h1v1h-1zM2 7h1v1h-1zM2 8h7v1h-7zM2 9h1v1h-1zM8 9h1v1h-1zM2 10h1v1h-1zM8 10h1v1h-1zM1 11h1v1h-1zM8 11h1v1h-1zM0 12h1v1h-1zM8 12h1v1h-1z"/>
<path id="g107" d="M1 3h9v1h-9zM0 6h11v1h-11zM5 7h1v1h-1zM2 8h1v1h-1zM5 8h1v1h-1zM8 8h1v1h-1zM2 9h1v1h-1zM5 9h1v1h-1zM9 9h1v1h-1zM1 10h1v1h-1zM5 10h1v1h-1zM10 10h1v1h-1zM0 11h1v1h-1zM5 11h1v1h-1zM10 11h1v1h-1zM4 12h2v1h-2z"/>
<path id="g108" d="M3 2h1v1h-1zM7 2h1v1h-1zM3 3h1v1h-1zM7 3h1v1h-1zM3 4h1v1h-1zM7 4h1v1h-1zM10 4h1v1h-1zM1 5h1v1h-1zM3 5h1v1h-1zM7 5h1v1h-1zM9 5h1v1h-1zM1 6h1v1h-1zM3 6h3v1h-3zM7 6h2v1h-2zM1 7h1v1h-1zM3 7h1v1h-1zM7 7h1v1h-1zM1 8h1v1h-1zM3 8h1v1h-1zM7 8h1v1h-1zM1 9h1v1h-1zM3 9h1v1h-1zM7 9h1v1h-1zM1 10h1v1h-1zM3 10h1v1h-1zM7 10h1v1h-1zM10 10h1v1h-1zM1 11h1v1h-1zM3 11h3v1h-3zM7 11h1v1h-1zM10 11h1v1h-1zM0 12h3v1h-3zM8 12h3v1h-3z"/>
<path id="g109" d="M0 3h11v1h-11zM5 4h1v1h-1zM5 5h1v1h-1zM2 6h1v1h-1zM5 6h1v1h-1zM2 7h1v1h-1zM5 7h5v1h-5zM2 8h1v1h-1zM5 8h1v1h-1zM2 9h1v1h-1zM5 9h1v1h-1zM2 10h1v1h-1zM5 10h1v1h-1zM2 11h1v1h-1zM5 11h1v1h-1zM0 12h11v1h-11z"/>
<path id="g110" d="M3 2h1v1h-1zM7 2h1v1h-1zM3 3h8v1h-8zM2 4h1v1h-1zM7 4h1v1h-1zM2 5h1v1h-1zM4 5h7v1h-7zM1 6h2v1h-2zM4 6h1v1h-1zM7 6h1v1h-1zM10 6h1v1h-1zM0 7h1v1h-1zM2 7h1v1h-1zM4 7h7v1h-7zM2 8h1v1h-1zM4 8h1v1h-1zM7 8h1v1h-1zM2 9h1v1h-1zM5 9h1v1h-1zM7 9h1v1h-1zM2 10h1v1h-1zM6 10h1v1h-1zM2 11h1v1h-1zM5 11h1v1h-1zM7 11h2v1h-2zM2 12h3v1h-3zM9 12h2v1h-2z"/>
<path id="g111" d="M4 2h1v1h-1zM3 3h3v1h-3zM3 4h3v1h-3zM3 5h3v1h-3zM3 6h3v1h-3zM4 7h1v1h-1zM4 8h1v1h-1zM4 9h1v1h-1zM4 11h1v1h-1zM4 12h1v1h-1z"/>
<path id="g112" d="M3 2h1v1h-1zM7 2h1v1h-1zM1 3h9v1h-9zM3 4h1v1h-1zM7 4h1v1h-1zM3 5h5v1h-5zM3 6h1v1h-1zM7 6h1v1h-1zM3 7h5v1h-5zM3 8h1v1h-1zM7 8h1v1h-1zM0 9h11v1h-11zM3 10h1v1h-1zM7 10h1v1h-1zM2 11h1v1h-1zM8 11h1v1h-1zM0 12h2v1h-2zM9 12h1v1h-1z"/>
<path id="g113" d="M5 2h1v1h-1zM1 3h10v1h-10zM1 4h1v1h-1zM10 4h1v1h-1zM0 5h1v1h-1zM3 5h1v1h-1zM9 5h1v1h-1zM3 6h1v1h-1zM3 7h1v1h-1zM6 7h3v1h-3zM3 8h3v1h-3zM3 9h1v1h-1zM3 10h1v1h-1zM10 10h1v1h-1zM3 11h1v1h-1zM10 11h1v1h-1zM4 12h7v1h-7z"/>
<path id="g114" d="M2 2h1v1h-1zM6 2h1v1h-1zM2 3h1v1h-1zM6 3h4v1h-4zM0 4h6v1h-6zM8 4h1v1h-1zM2 5h1v1h-1zM5 5h5v1h-5zM2 6h1v1h-1zM4 6h2v1h-2zM7 6h1v1h-1zM9 6h1v1h-1zM2 7h2v1h-2zM5 7h1v1h-1zM7 7h1v1h-1zM9 7h1v1h-1zM1 8h2v1h-2zM4 8h7v1h-7zM0 9h1v1h-1zM2 9h1v1h-1zM7 9h1v1h-1zM2 10h1v1h-1zM6 10h1v1h-1zM8 10h1v1h-1zM2 11h1v1h-1zM5 11h1v1h-1zM9 11h1v1h-1zM0 12h3v1h-3zM4 12h1v1h-1zM10 12h1v1h-1z"/>
<path id="g115" d="M5 2h1v1h-1zM0 3h11v1h-11zM3 4h1v1h-1zM7 4h1v1h-1zM1 5h9v1h-9zM1 6h1v1h-1zM4 6h1v1h-1zM6 6h1v1h-1zM9 6h1v1h-1zM1 7h1v1h-1zM3 7h1v1h-1zM7 7h1v1h-1zM9 7h1v1h-1zM1 8h9v1h-9zM1 9h1v1h-1zM3 9h1v1h-1zM7 9h1v1h-1zM9 9h1v1h-1zM1 10h1v1h-1zM3 10h5v1h-5zM9 10h1v1h-1zM1 11h1v1h-1zM3 11h1v1h-1zM7 11h1v1h-1zM9 11h1v1h-1zM1 12h1v1h-1zM8 12h2v1h-2z"/>
<path id="g116" d="M3 2h6v1h-6zM3 3h1v1h-1zM8 3h1v1h-1zM3 4h1v1h-1zM8 4h1v1h-1zM3 5h6v1h-6zM1 7h4v1h-4zM7 7h4v1h-4zM1 8h1v1h-1zM4 8h1v1h-1zM7 8h1v1h-1zM10 8h1v1h-1zM1 9h1v1h-1zM4 9h1v1h-1zM7 9h1v1h-1zM10 9h1v1h-1zM1 10h1v1h-1zM4 10h1v1h-1zM7 10h1v1h-1zM10 10h1v1h-1zM1 11h4v1h-4zM7 11h4v1h-4zM1 12h1v1h-1zM4 12h1v1h-1zM7 12h1v1h-1zM10 12h1v1h-1z"/>
<path id="g117" d="M3 2h1v1h-1zM3 3h6v1h-6zM2 4h2v1h-2zM7 4h1v1h-1zM1 5h1v1h-1zM4 5h3v1h-3zM4 6h1v1h-1zM6 6h2v1h-2zM2 7h2v1h-2zM8 7h3v1h-3zM0 8h9v1h-9zM2 9h1v1h-1zM5 9h1v1h-1zM8 9h1v1h-1zM2 10h7v1h-7zM2 11h1v1h-1zM5 11h1v1h-1zM8 11h1v1h-1zM2 12h7v1h-7z"/>
<path id="g118" d="M1 2h1v1h-1zM6 2h1v1h-1zM2 3h1v1h-1zM7 3h1v1h-1zM0 4h1v1h-1zM4 4h7v1h-7zM1 5h1v1h-1zM3 5h1v1h-1zM7 5h1v1h-1zM3 6h1v1h-1zM7 6h1v1h-1zM2 7h1v1h-1zM7 7h1v1h-1zM2 8h1v1h-1zM5 8h5v1h-5zM0 9h2v1h-2zM7 9h1v1h-1zM1 10h1v1h-1zM7 10h1v1h-1zM1 11h1v1h-1zM7 11h1v1h-1zM1 12h1v1h-1zM4 12h7v1h-7z"/>
<path id="g119" d="M1 2h1v1h-1zM5 2h1v1h-1zM9 2h1v1h-1zM2 3h1v1h-1zM6 3h1v1h-1zM8 3h1v1h-1zM4 4h7v1h-7zM0 5h3v1h-3zM7 5h1v1h-1zM2 6h1v1h-1zM5 6h5v1h-5zM2 7h1v1h-1zM7 7h1v1h-1zM2 8h1v1h-1zM7 8h1v1h-1zM2 9h1v1h-1zM4 9h7v1h-7zM2 10h2v1h-2zM7 10h1v1h-1zM2 11h1v1h-1zM7 11h1v1h-1zM7 12h1v1h-1z"/>
<path id="g120" d="M2 2h1v1h-1zM2 3h1v1h-1zM5 3h6v1h-6zM1 4h1v1h-1zM5 4h1v1h-1zM8 4h1v1h-1zM10 4h1v1h-1zM1 5h1v1h-1zM3 5h1v1h-1zM5 5h1v1h-1zM8 5h1v1h-1zM10 5h1v1h-1zM0 6h3v1h-3zM5 6h1v1h-1zM8 6h1v1h-1zM10 6h1v1h-1zM2 7h1v1h-1zM5 7h6v1h-6zM1 8h1v1h-1zM5 8h1v1h-1zM8 8h1v1h-1zM10 8h1v1h-1zM0 9h4v1h-4zM5 9h1v1h-1zM8 9h1v1h-1zM10 9h1v1h-1zM5 10h1v1h-1zM8 10h1v1h-1zM10 10h1v1h-1zM2 11h2v1h-2zM5 11h6v1h-6zM0 12h2v1h-2zM5 12h1v1h-1zM10 12h1v1h-1z"/>
<path id="g121" d="M1 2h6v1h-6zM10 2h1v1h-1zM3 3h1v1h-1zM10 3h1v1h-1zM3 4h1v1h-1zM7 4h1v1h-1zM10 4h1v1h-1zM2 5h4v1h-4zM7 5h1v1h-1zM10 5h1v1h-1zM2 6h1v1h-1zM5 6h1v1h-1zM7 6h1v1h-1zM10 6h1v1h-1zM1 7h2v1h-2zM5 7h1v1h-1zM7 7h1v1h-1zM10 7h1v1h-1zM0 8h1v1h-1zM3 8h2v1h-2zM7 8h1v1h-1zM10 8h1v1h-1zM4 9h1v1h-1zM7 9h1v1h-1zM10 9h1v1h-1zM3 10h1v1h-1zM10 10h1v1h-1zM2 11h1v1h-1zM10 11h1v1h-1zM0 12h2v1h-2zM8 12h3v1h-3z"/>
<path id="g122" d="M2 2h1v1h-1zM5 2h1v1h-1zM9 2h1v1h-1zM2 3h1v1h-1zM6 3h1v1h-1zM8 3h1v1h-1zM2 4h1v1h-1zM4 4h7v1h-7zM0 5h5v1h-5zM7 5h1v1h-1zM10 5h1v1h-1zM2 6h1v1h-1zM4 6h1v1h-1zM6 6h3v1h-3zM10 6h1v1h-1zM2 7h1v1h-1zM4 7h1v1h-1zM7 7h1v1h-1zM10 7h1v1h-1zM2 8h1v1h-1zM4 8h7v1h-7zM2 9h1v1h-1zM5 9h1v1h-1zM9 9h1v1h-1zM2 10h2v1h-2zM5 10h5v1h-5zM0 11h2v1h-2zM5 11h1v1h-1zM9 11h1v1h-1zM5 12h5v1h-5z"/>
<path id="g123" d="M3 2h1v1h-1zM6 2h1v1h-1zM9 2h1v1h-1zM2 3h1v1h-1zM6 3h3v1h-3zM1 4h2v1h-2zM4 4h3v1h-3zM10 4h1v1h-1zM0 5h1v1h-1zM2 5h1v1h-1zM7 5h4v1h-4zM2 7h7v1h-7zM2 8h1v1h-1zM8 8h1v1h-1zM2 9h1v1h-1zM5 9h1v1h-1zM8 9h1v1h-1zM2 10h1v1h-1zM5 10h1v1h-1zM8 10h1v1h-1zM4 11h1v1h-1zM6 11h1v1h-1zM1 12h3v1h-3zM7 12h3v1h-3z"/>
<path id="g124" d="M0 2h3v1h-3zM4 2h3v1h-3zM10 2h1v1h-1zM0 3h1v1h-1zM2 3h1v1h-1zM4 3h1v1h-1zM6 3h1v1h-1zM8 3h1v1h-1zM10 3h1v1h-1zM0 4h1v1h-1zM2 4h1v1h-1zM4 4h1v1h-1zM6 4h1v1h-1zM8 4h1v1h-1zM10 4h1v1h-1zM0 5h1v1h-1zM2 5h1v1h-1zM4 5h1v1h-1zM6 5h1v1h-1zM8 5h1v1h-1zM10 5h1v1h-1zM0 6h9v1h-9zM10 6h1v1h-1zM0 7h1v1h-1zM2 7h1v1h-1zM4 7h1v1h-1zM6 7h1v1h-1zM8 7h1v1h-1zM10 7h1v1h-1zM0 8h1v1h-1zM2 8h1v1h-1zM4 8h1v1h-1zM6 8h1v1h-1zM8 8h1v1h-1zM10 8h1v1h-1zM0 9h1v1h-1zM2 9h1v1h-1zM4 9h1v1h-1zM6 9h1v1h-1zM8 9h1v1h-1zM10 9h1v1h-1zM0 10h1v1h-1zM2 10h1v1h-1zM4 10h1v1h-1zM6 10h1v1h-1zM10 10h1v1h-1zM0 11h1v1h-1zM2 11h1v1h-1zM4 11h1v1h-1zM6 11h1v1h-1zM10 11h1v1h-1zM0 12h1v1h-1zM2 12h2v1h-2zM5 12h2v1h-2zM8 12h3v1h-3z"/>
<path id="g125" d="M3 2h1v1h-1zM6 2h1v1h-1zM3 3h1v1h-1zM6 3h5v1h-5zM2 4h1v1h-1zM4 4h2v1h-2zM7 4h1v1h-1zM9 4h1v1h-1zM2 5h1v1h-1zM4 5h1v1h-1zM8 5h1v1h-1zM1 6h2v1h-2zM4 6h1v1h-1zM6 6h2v1h-2zM9 6h1v1h-1zM0 7h1v1h-1zM2 7h1v1h-1zM4 7h2v1h-2zM8 7h1v1h-1zM10 7h1v1h-1zM2 8h1v1h-1zM4 8h1v1h-1zM7 8h1v1h-1zM9 8h1v1h-1zM2 9h1v1h-1zM4 9h1v1h-1zM6 9h1v1h-1zM8 9h1v1h-1zM2 10h1v1h-1zM4 10h1v1h-1zM7 10h1v1h-1zM10 10h1v1h-1zM2 11h1v1h-1zM8 11h2v1h-2zM2 12h1v1h-1zM5 12h3v1h-3z"/>
<path id="g126" d="M7 2h1v1h-1zM0 3h5v1h-5zM7 3h1v1h-1zM4 4h1v1h-1zM6 4h5v1h-5zM4 5h2v1h-2zM9 5h1v1h-1zM1 6h4v1h-4zM6 6h1v1h-1zM9 6h1v1h-1zM1 7h1v1h-1zM6 7h1v1h-1zM9 7h1v1h-1zM1 8h1v1h-1zM6 8h1v1h-1zM9 8h1v1h-1zM1 9h1v1h-1zM7 9h2v1h-2zM1 10h1v1h-1zM3 10h1v1h-1zM7 10h2v1h-2zM1 11h2v1h-2zM6 11h1v1h-1zM9 11h1v1h-1zM1 12h1v1h-1zM4 12h2v1h-2zM10 12h1v1h-1z"/>
<path id="g127" d="M2 2h7v1h-7zM2 3h1v1h-1zM8 3h1v1h-1zM2 4h7v1h-7zM10 4h1v1h-1zM2 5h1v1h-1zM10 5h1v1h-1zM3 6h8v1h-8zM7 7h1v1h-1zM0 8h11v1h-11zM3 9h1v1h-1zM7 9h1v1h-1zM4 10h1v1h-1zM7 10h1v1h-1zM4 11h1v1h-1zM7 11h1v1h-1zM6 12h2v1h-2z"/>
<path id="g128" d="M2 2h1v1h-1zM2 3h1v1h-1zM5 3h6v1h-6zM0 4h5v1h-5zM8 4h1v1h-1zM2 5h1v1h-1zM8 5h1v1h-1zM2 6h1v1h-1zM4 6h1v1h-1zM8 6h1v1h-1zM2 7h2v1h-2zM8 7h1v1h-1zM1 8h2v1h-2zM8 8h1v1h-1zM0 9h1v1h-1zM2 9h1v1h-1zM8 9h1v1h-1zM2 10h1v1h-1zM8 10h1v1h-1zM2 11h1v1h-1zM8 11h1v1h-1zM0 12h3v1h-3zM6 12h3v1h-3z"/>
<path id="g129" d="M4 2h1v1h-1zM1 3h3v1h-3zM6 3h5v1h-5zM1 4h1v1h-1zM6 4h1v1h-1zM10 4h1v1h-1zM1 5h1v1h-1zM6 5h1v1h-1zM10 5h1v1h-1zM1 6h4v1h-4zM6 6h1v1h-1zM10 6h1v1h-1zM1 7h1v1h-1zM6 7h1v1h-1zM10 7h1v1h-1zM1 8h1v1h-1zM6 8h1v1h-1zM10 8h1v1h-1zM1 9h1v1h-1zM4 9h1v1h-1zM6 9h1v1h-1zM10 9h1v1h-1zM1 10h3v1h-3zM6 10h1v1h-1zM8 10h2v1h-2zM1 11h1v1h-1zM6 11h1v1h-1zM6 12h1v1h-1z"/>
<path id="g130" d="M0 3h11v1h-11zM5 4h1v1h-1zM5 5h1v1h-1zM5 6h2v1h-2zM5 7h1v1h-1zM7 7h1v1h-1zM5 8h1v1h-1zM8 8h1v1h-1zM5 9h1v1h-1zM8 9h1v1h-1zM5 10h1v1h-1zM5 11h1v1h-1zM5 12h1v1h-1z"/>
<path id="g131" d="M0 2h5v1h-5zM6 2h1v1h-1zM9 2h1v1h-1zM0 3h1v1h-1zM4 3h1v1h-1zM6 3h1v1h-1zM9 3h1v1h-1zM0 4h1v1h-1zM2 4h1v1h-1zM4 4h1v1h-1zM6 4h1v1h-1zM8 4h1v1h-1zM0 5h1v1h-1zM2 5h1v1h-1zM4 5h1v1h-1zM6 5h2v1h-2zM0 6h1v1h-1zM2 6h1v1h-1zM4 6h1v1h-1zM6 6h1v1h-1zM0 7h1v1h-1zM2 7h1v1h-1zM4 7h7v1h-7zM0 8h1v1h-1zM2 8h1v1h-1zM4 8h1v1h-1zM6 8h1v1h-1zM8 8h1v1h-1zM2 9h1v1h-1zM6 9h1v1h-1zM8 9h1v1h-1zM1 10h1v1h-1zM3 10h1v1h-1zM6 10h1v1h-1zM9 10h1v1h-1zM1 11h1v1h-1zM4 11h1v1h-1zM6 11h2v1h-2zM9 11h1v1h-1zM0 12h1v1h-1zM4 12h1v1h-1zM6 12h1v1h-1zM10 12h1v1h-1z"/>
<path id="g132" d="M3 2h1v1h-1zM7 2h1v1h-1zM4 3h1v1h-1zM6 3h1v1h-1zM1 4h9v1h-9zM1 5h1v1h-1zM5 5h1v1h-1zM9 5h1v1h-1zM1 6h9v1h-9zM1 7h1v1h-1zM5 7h1v1h-1zM9 7h1v1h-1zM1 8h9v1h-9zM5 9h1v1h-1zM0 10h11v1h-11zM5 11h1v1h-1zM5 12h1v1h-1z"/>
<path id="g133" d="M0 2h5v1h-5zM7 2h1v1h-1zM0 3h1v1h-1zM2 3h1v1h-1zM4 3h1v1h-1zM7 3h2v1h-2zM0 4h5v1h-5zM7 4h1v1h-1zM9 4h1v1h-1zM0 5h1v1h-1zM2 5h1v1h-1zM4 5h7v1h-7zM0 6h5v1h-5zM7 6h1v1h-1zM2 7h1v1h-1zM7 7h1v1h-1zM0 8h5v1h-5zM7 8h1v1h-1zM2 9h1v1h-1zM6 9h1v1h-1zM8 9h1v1h-1zM0 10h5v1h-5zM6 10h1v1h-1zM8 10h1v1h-1zM1 11h1v1h-1zM3 11h1v1h-1zM5 11h1v1h-1zM9 11h1v1h-1zM0 12h1v1h-1zM2 12h1v1h-1zM4 12h1v1h-1zM10 12h1v1h-1z"/>
<path id="g134" d="M1 2h1v1h-1zM7 2h1v1h-1zM2 3h1v1h-1zM7 3h1v1h-1zM7 4h1v1h-1zM7 5h1v1h-1zM0 6h3v1h-3zM7 6h1v1h-1zM2 7h1v1h-1zM7 7h1v1h-1zM2 8h1v1h-1zM6 8h1v1h-1zM8 8h1v1h-1zM2 9h1v1h-1zM4 9h1v1h-1zM6 9h1v1h-1zM8 9h1v1h-1zM2 10h2v1h-2zM5 10h1v1h-1zM9 10h1v1h-1zM2 11h1v1h-1zM4 11h1v1h-1zM9 11h1v1h-1zM3 12h1v1h-1zM10 12h1v1h-1z"/>
<path id="g135" d="M2 2h7v1h-7zM2 3h1v1h-1zM8 3h1v1h-1zM2 4h7v1h-7zM2 5h1v1h-1zM8 5h1v1h-1zM2 6h7v1h-7zM4 7h1v1h-1zM6 7h1v1h-1zM1 8h1v1h-1zM4 8h1v1h-1zM6 8h1v1h-1zM9 8h1v1h-1zM2 9h1v1h-1zM4 9h1v1h-1zM6 9h1v1h-1zM9 9h1v1h-1zM2 10h1v1h-1zM4 10h1v1h-1zM6 10h1v1h-1zM8 10h1v1h-1zM4 11h1v1h-1zM6 11h1v1h-1zM0 12h11v1h-11z"/>
<path id="g136" d="M2 2h7v1h-7zM2 3h1v1h-1zM8 3h1v1h-1zM2 4h7v1h-7zM2 5h1v1h-1zM8 5h1v1h-1zM0 6h11v1h-11zM1 7h1v1h-1zM4 7h1v1h-1zM1 8h9v1h-9zM1 9h1v1h-1zM4 9h1v1h-1zM6 9h1v1h-1zM9 9h1v1h-1zM1 10h4v1h-4zM7 10h2v1h-2zM0 11h2v1h-2zM4 11h1v1h-1zM7 11h2v1h-2zM4 12h3v1h-3zM9 12h2v1h-2z"/>
<path id="g137" d="M1 2h1v1h-1zM8 2h2v1h-2zM2 3h1v1h-1zM5 3h3v1h-3zM2 4h1v1h-1zM5 4h1v1h-1zM5 5h6v1h-6zM0 6h3v1h-3zM5 6h1v1h-1zM8 6h1v1h-1zM2 7h1v1h-1zM5 7h1v1h-1zM8 7h1v1h-1zM2 8h1v1h-1zM5 8h1v1h-1zM8 8h1v1h-1zM2 9h1v1h-1zM5 9h1v1h-1zM8 9h1v1h-1zM2 10h1v1h-1zM4 10h1v1h-1zM8 10h1v1h-1zM1 11h1v1h-1zM3 11h1v1h-1zM0 12h1v1h-1zM4 12h7v1h-7z"/>
<path id="g138" d="M3 2h1v1h-1zM3 3h6v1h-6zM2 4h1v1h-1zM4 4h1v1h-1zM7 4h1v1h-1zM1 5h1v1h-1zM5 5h2v1h-2zM4 6h1v1h-1zM6 6h1v1h-1zM2 7h2v1h-2zM5 7h1v1h-1zM7 7h2v1h-2zM0 8h2v1h-2zM5 8h1v1h-1zM9 8h2v1h-2zM2 9h7v1h-7zM3 10h1v1h-1zM5 10h1v1h-1zM7 10h1v1h-1zM2 11h1v1h-1zM5 11h1v1h-1zM8 11h1v1h-1zM0 12h2v1h-2zM3 12h3v1h-3zM9 12h1v1h-1z"/>
<path id="g139" d="M3 8h2v1h-2zM3 9h2v1h-2zM4 10h1v1h-1zM3 11h1v1h-1z"/>
<path id="g140" d="M1 2h10v1h-10zM6 3h1v1h-1zM2 4h8v1h-8zM2 5h1v1h-1zM6 5h1v1h-1zM9 5h1v1h-1zM2 6h8v1h-8zM2 7h1v1h-1zM6 7h1v1h-1zM9 7h1v1h-1zM2 8h8v1h-8zM4 9h1v1h-1zM6 9h1v1h-1zM5 10h1v1h-1zM3 11h2v1h-2zM6 11h2v1h-2zM0 12h3v1h-3zM8 12h3v1h-3z"/>
<path id="g141" d="M5 2h1v1h-1zM4 3h5v1h-5zM3 4h1v1h-1zM8 4h1v1h-1zM2 5h1v1h-1zM4 5h1v1h-1zM7 5h1v1h-1zM5 6h2v1h-2zM3 7h2v1h-2zM6 7h1v1h-1zM1 8h2v1h-2zM5 8h5v1h-5zM4 9h1v1h-1zM9 9h1v1h-1zM2 10h2v1h-2zM5 10h1v1h-1zM8 10h1v1h-1zM6 11h2v1h-2zM1 12h5v1h-5z"/>
<path id="g142" d="M1 2h1v1h-1zM4 2h1v1h-1zM7 2h4v1h-4zM0 3h6v1h-6zM7 3h1v1h-1zM10 3h1v1h-1zM1 4h1v1h-1zM4 4h1v1h-1zM7 4h1v1h-1zM10 4h1v1h-1zM1 5h4v1h-4zM7 5h4v1h-4zM1 6h1v1h-1zM4 6h1v1h-1zM7 6h1v1h-1zM10 6h1v1h-1zM1 7h4v1h-4zM7 7h1v1h-1zM10 7h1v1h-1zM1 8h1v1h-1zM4 8h1v1h-1zM7 8h4v1h-4zM0 9h6v1h-6zM7 9h1v1h-1zM10 9h1v1h-1zM7 10h1v1h-1zM10 10h1v1h-1zM1 11h1v1h-1zM4 11h1v1h-1zM7 11h1v1h-1zM10 11h1v1h-1zM0 12h1v1h-1zM5 12h2v1h-2zM9 12h2v1h-2z"/>
<path id="g143" d="M3 2h1v1h-1zM8 2h1v1h-1zM3 3h1v1h-1zM8 3h1v1h-1zM2 4h1v1h-1zM8 4h1v1h-1zM2 5h1v1h-1zM4 5h7v1h-7zM1 6h2v1h-2zM8 6h1v1h-1zM0 7h1v1h-1zM2 7h1v1h-1zM5 7h1v1h-1zM8 7h1v1h-1zM2 8h1v1h-1zM6 8h1v1h-1zM8 8h1v1h-1zM2 9h1v1h-1zM6 9h1v1h-1zM8 9h1v1h-1zM2 10h1v1h-1zM8 10h1v1h-1zM2 11h1v1h-1zM8 11h1v1h-1zM2 12h1v1h-1zM6 12h3v1h-3z"/>
<path id="g144" d="M3 2h1v1h-1zM7 2h1v1h-1zM0 3h6v1h-6zM7 3h1v1h-1zM3 4h1v1h-1zM7 4h4v1h-4zM1 5h4v1h-4zM6 5h1v1h-1zM10 5h1v1h-1zM8 6h1v1h-1zM10 6h1v1h-1zM1 7h4v1h-4zM8 7h1v1h-1zM8 8h1v1h-1zM0 9h6v1h-6zM8 9h1v1h-1zM1 10h1v1h-1zM3 10h1v1h-1zM5 10h1v1h-1zM7 10h1v1h-1zM9 10h1v1h-1zM0 11h1v1h-1zM3 11h1v1h-1zM6 11h1v1h-1zM9 11h1v1h-1zM1 12h3v1h-3zM5 12h1v1h-1zM10 12h1v1h-1z"/>
<path id="g145" d="M5 2h1v1h-1zM4 3h1v1h-1zM6 3h1v1h-1zM3 4h1v1h-1zM7 4h1v1h-1zM2 5h1v1h-1zM8 5h1v1h-1zM0 6h2v1h-2zM3 6h5v1h-5zM9 6h2v1h-2zM5 7h1v1h-1zM1 8h9v1h-9zM5 9h1v1h-1zM2 10h1v1h-1zM5 10h1v1h-1zM8 10h1v1h-1zM3 11h1v1h-1zM5 11h1v1h-1zM7 11h1v1h-1zM0 12h11v1h-11z"/>
<path id="g146" d="M5 2h5v1h-5zM0 3h4v1h-4zM5 3h1v1h-1zM9 3h1v1h-1zM2 4h1v1h-1zM5 4h1v1h-1zM7 4h1v1h-1zM9 4h1v1h-1zM2 5h1v1h-1zM5 5h1v1h-1zM7 5h1v1h-1zM9 5h1v1h-1zM0 6h4v1h-4zM5 6h1v1h-1zM7 6h1v1h-1zM9 6h1v1h-1zM2 7h1v1h-1zM5 7h1v1h-1zM7 7h1v1h-1zM9 7h1v1h-1zM2 8h1v1h-1zM5 8h1v1h-1zM7 8h1v1h-1zM9 8h1v1h-1zM2 9h2v1h-2zM6 9h1v1h-1zM8 9h1v1h-1zM0 10h2v1h-2zM6 10h1v1h-1zM8 10h1v1h-1zM10 10h1v1h-1zM5 11h1v1h-1zM8 11h1v1h-1zM10 11h1v1h-1zM3 12h2v1h-2zM8 12h3v1h-3z"/>
<path id="g147" d="M1 2h2v1h-2zM7 2h1v1h-1zM10 2h1v1h-1zM1 3h1v1h-1zM3 3h1v1h-1zM5 3h5v1h-5zM1 4h1v1h-1zM7 4h1v1h-1zM9 4h1v1h-1zM1 5h3v1h-3zM5 5h6v1h-6zM0 6h2v1h-2zM3 6h1v1h-1zM7 6h1v1h-1zM1 7h1v1h-1zM3 7h1v1h-1zM6 7h4v1h-4zM1 8h1v1h-1zM3 8h1v1h-1zM5 8h2v1h-2zM9 8h1v1h-1zM1 9h1v1h-1zM3 9h1v1h-1zM6 9h4v1h-4zM1 10h1v1h-1zM3 10h2v1h-2zM6 10h1v1h-1zM9 10h1v1h-1zM1 11h1v1h-1zM3 11h1v1h-1zM6 11h1v1h-1zM9 11h1v1h-1zM1 12h1v1h-1zM6 12h4v1h-4z"/>
<path id="g148" d="M3 2h1v1h-1zM7 2h1v1h-1zM3 3h8v1h-8zM2 4h1v1h-1zM6 4h1v1h-1zM2 5h1v1h-1zM5 5h5v1h-5zM1 6h2v1h-2zM5 6h1v1h-1zM9 6h1v1h-1zM0 7h1v1h-1zM2 7h1v1h-1zM5 7h5v1h-5zM2 8h1v1h-1zM5 8h1v1h-1zM9 8h1v1h-1zM2 9h1v1h-1zM5 9h3v1h-3zM9 9h1v1h-1zM2 10h1v1h-1zM5 10h1v1h-1zM7 10h3v1h-3zM2 11h1v1h-1zM5 11h1v1h-1zM9 11h1v1h-1zM2 12h1v1h-1zM4 12h7v1h-7z"/>
<path id="g149" d="M3 2h1v1h-1zM6 2h1v1h-1zM8 2h1v1h-1zM3 3h1v1h-1zM6 3h1v1h-1zM9 3h1v1h-1zM2 4h1v1h-1zM6 4h1v1h-1zM2 5h1v1h-1zM6 5h5v1h-5zM1 6h2v1h-2zM4 6h3v1h-3zM0 7h1v1h-1zM2 7h1v1h-1zM6 7h1v1h-1zM2 8h1v1h-1zM6 8h1v1h-1zM2 9h1v1h-1zM7 9h1v1h-1zM2 10h1v1h-1zM7 10h1v1h-1zM10 10h1v1h-1zM2 11h1v1h-1zM8 11h1v1h-1zM10 11h1v1h-1zM2 12h1v1h-1zM9 12h2v1h-2z"/>
<path id="g150" d="M1 2h1v1h-1zM5 2h1v1h-1zM8 2h1v1h-1zM2 3h1v1h-1zM5 3h1v1h-1zM7 3h1v1h-1zM1 4h9v1h-9zM4 5h1v1h-1zM0 6h11v1h-11zM2 7h1v1h-1zM8 7h1v1h-1zM1 8h1v1h-1zM3 8h7v1h-7zM0 9h1v1h-1zM4 9h1v1h-1zM7 9h1v1h-1zM10 9h1v1h-1zM4 10h1v1h-1zM7 10h1v1h-1zM3 11h1v1h-1zM7 11h1v1h-1zM2 12h1v1h-1zM5 12h2v1h-2z"/>
<path id="g151" d="M5 2h1v1h-1zM5 3h1v1h-1zM0 4h11v1h-11zM5 5h1v1h-1zM2 6h7v1h-7zM3 7h1v1h-1zM7 7h1v1h-1zM3 8h1v1h-1zM7 8h1v1h-1zM4 9h1v1h-1zM6 9h1v1h-1zM5 10h1v1h-1zM3 11h2v1h-2zM6 11h2v1h-2zM0 12h3v1h-3zM8 12h3v1h-3z"/>
<path id="g152" d="M4 2h1v1h-1zM5 3h1v1h-1zM0 4h11v1h-11zM0 5h1v1h-1zM10 5h1v1h-1zM2 6h7v1h-7zM5 7h1v1h-1zM5 8h1v1h-1zM2 9h7v1h-7zM5 10h1v1h-1zM7 10h1v1h-1zM5 11h1v1h-1zM8 11h1v1h-1zM0 12h11v1h-11z"/>
<path id="g153" d="M4 2h1v1h-1zM2 3h7v1h-7zM2 4h1v1h-1zM8 4h1v1h-1zM2 5h1v1h-1zM8 5h1v1h-1zM2 6h7v1h-7zM2 7h1v1h-1zM8 7h1v1h-1zM2 8h7v1h-7zM2 9h1v1h-1zM8 9h1v1h-1zM2 10h1v1h-1zM8 10h1v1h-1zM2 11h7v1h-7zM2 12h1v1h-1zM8 12h1v1h-1z"/>
<path id="g154" d="M5 2h1v1h-1zM1 3h10v1h-10zM1 4h1v1h-1zM10 4h1v1h-1zM0 5h1v1h-1zM9 5h1v1h-1zM2 6h8v1h-8zM5 7h1v1h-1zM2 8h1v1h-1zM5 8h1v1h-1zM2 9h1v1h-1zM5 9h4v1h-4zM2 10h1v1h-1zM5 10h1v1h-1zM1 11h1v1h-1zM3 11h1v1h-1zM5 11h1v1h-1zM0 12h1v1h-1zM4 12h7v1h-7z"/>
<path id="g155" d="M9 6h1v1h-1zM0 7h11v1h-11z"/>
<path id="g156" d="M1 4h9v1h-9zM0 11h11v1h-11z"/>
<path id="g157" d="M1 3h9v1h-9zM2 7h7v1h-7zM0 12h11v1h-11z"/>
<path id="a158" d="M1 3h6v1h-6z"/>
<path id="a159" d="M2 0h4v1h-4zM5 1h1v1h-1zM4 2h1v1h-1zM4 3h1v1h-1zM3 4h1v1h-1zM3 5h1v1h-1zM3 6h1v1h-1zM3 7h1v1h-1z"/>
<path id="a160" d="M3 2h1v1h-1zM3 7h1v1h-1z"/>
<path id="a161" d="M2 -1h2v1h-2zM8 -1h2v1h-2zM3 0h2v1h-2zM8 0h1v1h-1zM4 1h1v1h-1zM7 1h1v1h-1zM4 2h2v1h-2zM7 2h1v1h-1zM5 3h2v1h-2zM5 4h2v1h-2zM2 5h8v1h-8zM5 6h2v1h-2zM5 7h2v1h-2zM5 8h2v1h-2z"/>
<path id="a162" d="M3 0h2v1h-2zM2 1h1v1h-1zM5 1h1v1h-1zM1 2h1v1h-1zM1 3h1v1h-1zM3 3h2v1h-2zM1 4h2v1h-2zM5 4h1v1h-1zM1 5h1v1h-1zM5 5h1v1h-1zM1 6h1v1h-1zM5 6h1v1h-1zM2 7h3v1h-3z"/>
</defs>
<g fill="#000000"><use href="#g0" x="1" y="4"/><use href="#g1" x="13" y="4"/><use href="#g2" x="25" y="4"/><use href="#g3" x="37" y="4"/><use href="#g4" x="56" y="4"/><use href="#g5" x="68" y="4"/><use href="#g6" x="80" y="4"/><use href="#g7" x="92" y="4"/><use href="#g8" x="110" y="4"/><use href="#g9" x="122" y="4"/><use href="#g10" x="134" y="4"/><use href="#g11" x="146" y="4"/><use href="#g12" x="24" y="63"/><use href="#g13" x="36" y="63"/><use href="#g14" x="48" y="63"/><use href="#g15" x="60" y="63"/><use href="#g12" x="110" y="63"/><use href="#g13" x="122" y="63"/><use href="#g16" x="134" y="63"/><use href="#g17" x="146" y="63"/><use href="#g18" x="197" y="63"/><use href="#g19" x="209" y="63"/><use href="#g20" x="221" y="63"/><use href="#g21" x="233" y="63"/><use href="#g1" x="283" y="63"/><use href="#g22" x="295" y="63"/><use href="#g23" x="307" y="63"/><use href="#g24" x="319" y="63"/><use href="#g25" x="371" y="63"/><use href="#g26" x="383" y="63"/><use href="#g27" x="395" y="63"/><use href="#g28" x="407" y="63"/><use href="#g0" x="458" y="63"/><use href="#g1" x="470" y="63"/><use href="#g29" x="482" y="63"/><use href="#g30" x="494" y="63"/><use href="#g31" x="544" y="63"/><use href="#g32" x="556" y="63"/><use href="#g16" x="568" y="63"/><use href="#g17" x="580" y="63"/><use href="#g33" x="631" y="63"/><use href="#g26" x="643" y="63"/><use href="#g34" x="655" y="63"/><use href="#g35" x="667" y="63"/><use href="#g36" x="718" y="63"/><use href="#g37" x="730" y="63"/><use href="#g0" x="742" y="63"/><use href="#g1" x="754" y="63"/><use href="#g12" x="22" y="132"/><use href="#g13" x="34" y="132"/><use href="#g14" x="46" y="132"/><use href="#g15" x="58" y="132"/><use href="#g12" x="22" y="180"/><use href="#g13" x="34" y="180"/><use href="#g38" x="46" y="180"/><use href="#g39" x="58" y="180"/><use href="#g40" x="110" y="105"/><use href="#g41" x="122" y="105"/><use href="#g42" x="134" y="105"/><use href="#g12" x="146" y="105"/><use href="#g13" x="158" y="105"/><use href="#g43" x="170" y="105"/><use href="#g44" x="182" y="105"/><use href="#g45" x="194" y="105"/><use href="#g46" x="206" y="105"/><use href="#g47" x="218" y="105"/><use href="#g38" x="385" y="104"/><use href="#g39" x="397" y="104"/><use href="#a48" x="409" y="107"/><use href="#a49" x="415" y="107"/><use href="#a50" x="421" y="107"/><use href="#a51" x="427" y="107"/><use href="#g52" x="467" y="104"/><use href="#g53" x="479" y="104"/><use href="#a48" x="491" y="107"/><use href="#a49" x="497" y="107"/><use href="#a54" x="503" y="107"/><use href="#a51" x="509" y="107"/><use href="#g55" x="546" y="104"/><use href="#g56" x="558" y="104"/><use href="#g14" x="570" y="104"/><use href="#g15" x="582" y="104"/><use href="#g57" x="626" y="104"/><use href="#g58" x="638" y="104"/><use href="#g26" x="650" y="104"/><use href="#g59" x="662" y="104"/><use href="#g60" x="725" y="104"/><use href="#g61" x="737" y="104"/><use href="#g12" x="749" y="104"/><use href="#g13" x="761" y="104"/><use href="#a48" x="773" y="107"/><use href="#a49" x="779" y="107"/><use href="#a62" x="785" y="107"/><use href="#a51" x="791" y="107"/><use href="#g12" x="120" y="153"/><use href="#g13" x="132" y="153"/><use href="#g63" x="144" y="153"/><use href="#g44" x="156" y="153"/><use href="#c64" x="168" y="153"/><use href="#g12" x="267" y="153"/><use href="#g13" x="279" y="153"/><use href="#g46" x="291" y="153"/><use href="#g47" x="303" y="153"/><use href="#c64" x="315" y="153"/><use href="#g12" x="420" y="153"/><use href="#g13" x="432" y="153"/><use href="#g63" x="444" y="153"/><use href="#g68" x="456" y="153"/><use href="#g69" x="468" y="153"/><use href="#g70" x="480" y="153"/><use href="#c64" x="492" y="153"/><use href="#g76" x="603" y="153"/><use href="#g77" x="615" y="153"/><use href="#g68" x="627" y="153"/><use href="#g78" x="639" y="153"/><use href="#g79" x="651" y="153"/><use href="#c64" x="663" y="153"/><use href="#g63" x="120" y="182"/><use href="#g84" x="132" y="182"/><use href="#g85" x="144" y="182"/><use href="#g86" x="156" y="182"/><use href="#c64" x="168" y="182"/><use href="#g89" x="267" y="182"/><use href="#g22" x="279" y="182"/><use href="#g14" x="291" y="182"/><use href="#g15" x="303" y="182"/><use href="#c64" x="315" y="182"/><use href="#g63" x="420" y="182"/><use href="#g84" x="432" y="182"/><use href="#g92" x="444" y="182"/><use href="#g85" x="456" y="182"/><use href="#g93" x="468" y="182"/><use href="#g94" x="480" y="182"/><use href="#c64" x="492" y="182"/><use href="#g12" x="603" y="182"/><use href="#g13" x="615" y="182"/><use href="#g63" x="627" y="182"/><use href="#g95" x="639" y="182"/><use href="#g96" x="651" y="182"/><use href="#c64" x="663" y="182"/><use href="#g12" x="120" y="211"/><use href="#g13" x="132" y="211"/><use href="#g99" x="144" y="211"/><use href="#g83" x="156" y="211"/><use href="#c64" x="168" y="211"/><use href="#g100" x="267" y="211"/><use href="#g0" x="279" y="211"/><use href="#g101" x="291" y="211"/><use href="#g102" x="303" y="211"/><use href="#c64" x="315" y="211"/><use href="#g12" x="420" y="211"/><use href="#g13" x="432" y="211"/><use href="#g100" x="444" y="211"/><use href="#g0" x="456" y="211"/><use href="#g103" x="468" y="211"/><use href="#g104" x="480" y="211"/><use href="#c64" x="492" y="211"/><use href="#g12" x="120" y="237"/><use href="#g13" x="132" y="237"/><use href="#g105" x="144" y="237"/><use href="#g106" x="156" y="237"/><use href="#c64" x="168" y="237"/><use href="#g18" x="267" y="237"/><use href="#g107" x="279" y="237"/><use href="#g26" x="291" y="237"/><use href="#g59" x="303" y="237"/><use href="#c64" x="315" y="237"/><use href="#g112" x="446" y="237"/><use href="#g113" x="458" y="237"/><use href="#g26" x="470" y="237"/><use href="#g59" x="482" y="237"/><use href="#c64" x="494" y="237"/><use href="#g12" x="102" y="269"/><use href="#g13" x="114" y="269"/><use href="#g14" x="126" y="269"/><use href="#g15" x="138" y="269"/><use href="#g99" x="160" y="270"/><use href="#g83" x="172" y="270"/><use href="#g114" x="184" y="270"/><use href="#g115" x="196" y="270"/><use href="#g116" x="208" y="270"/><use href="#g12" x="229" y="270"/><use href="#g13" x="241" y="270"/><use href="#g18" x="253" y="270"/><use href="#g19" x="265" y="270"/><use href="#g12" x="288" y="270"/><use href="#g13" x="300" y="270"/><use href="#g117" x="312" y="270"/><use href="#g118" x="324" y="270"/><use href="#g26" x="336" y="270"/><use href="#g59" x="348" y="270"/><use href="#g12" x="105" y="302"/><use href="#g13" x="117" y="302"/><use href="#g14" x="129" y="302"/><use href="#g15" x="141" y="302"/><use href="#g119" x="153" y="302"/><use href="#g120" x="165" y="302"/><use href="#g121" x="177" y="302"/><use href="#g24" x="189" y="302"/><use href="#g22" x="305" y="300"/><use href="#g93" x="317" y="300"/><use href="#g14" x="329" y="300"/><use href="#g15" x="341" y="300"/><use href="#a48" x="353" y="303"/><use href="#a49" x="359" y="303"/><use href="#a81" x="365" y="303"/><use href="#a51" x="371" y="303"/><use href="#g12" x="391" y="300"/><use href="#g13" x="403" y="300"/><use href="#g36" x="415" y="300"/><use href="#g123" x="427" y="300"/><use href="#a48" x="439" y="303"/><use href="#a49" x="445" y="303"/><use href="#a91" x="451" y="303"/><use href="#a51" x="457" y="303"/><use href="#g124" x="488" y="300"/><use href="#g58" x="500" y="300"/><use href="#g125" x="512" y="300"/><use href="#g126" x="524" y="300"/><use href="#g127" x="575" y="300"/><use href="#g37" x="587" y="300"/><use href="#g128" x="599" y="300"/><use href="#g129" x="611" y="300"/><use href="#g14" x="100" y="326"/><use href="#g15" x="112" y="326"/><use href="#g4" x="124" y="326"/><use href="#g142" x="136" y="326"/><use href="#g143" x="222" y="326"/><use href="#g144" x="234" y="326"/><use href="#g78" x="246" y="326"/><use href="#g79" x="258" y="326"/><use href="#g14" x="293" y="326"/><use href="#g15" x="305" y="326"/><use href="#g145" x="317" y="326"/><use href="#g86" x="329" y="326"/><use href="#g14" x="373" y="326"/><use href="#g15" x="385" y="326"/><use href="#g93" x="397" y="326"/><use href="#g94" x="409" y="326"/><use href="#g146" x="442" y="326"/><use href="#g145" x="454" y="326"/><use href="#g147" x="514" y="326"/><use href="#g148" x="526" y="326"/><use href="#g63" x="538" y="326"/><use href="#g26" x="582" y="326"/><use href="#g98" x="594" y="326"/><use href="#g63" x="606" y="326"/><use href="#g149" x="650" y="326"/><use href="#g145" x="662" y="326"/><use href="#g150" x="674" y="326"/><use href="#g151" x="713" y="326"/><use href="#g143" x="725" y="326"/><use href="#g152" x="737" y="326"/><use href="#g33" x="782" y="326"/><use href="#g26" x="794" y="326"/><use href="#g153" x="852" y="326"/><use href="#g154" x="864" y="326"/><use href="#g151" x="876" y="326"/><use href="#g143" x="888" y="326"/><use href="#g155" x="900" y="326"/><use href="#g153" x="924" y="326"/><use href="#g154" x="936" y="326"/><use href="#g151" x="948" y="326"/><use href="#g143" x="960" y="326"/><use href="#g156" x="972" y="326"/><use href="#g153" x="1000" y="326"/><use href="#g154" x="1012" y="326"/><use href="#g151" x="1024" y="326"/><use href="#g143" x="1036" y="326"/><use href="#g157" x="1048" y="326"/><use href="#g117" x="1076" y="326"/><use href="#g118" x="1088" y="326"/><use href="#a90" x="99" y="362"/><use href="#a82" x="105" y="362"/><use href="#a90" x="111" y="362"/><use href="#a81" x="117" y="362"/><use href="#a158" x="123" y="362"/><use href="#a82" x="129" y="362"/><use href="#a162" x="135" y="362"/><use href="#a158" x="141" y="362"/><use href="#a90" x="147" y="362"/><use href="#a90" x="153" y="362"/><use href="#a75" x="165" y="362"/><use href="#a54" x="171" y="362"/><use href="#a160" x="177" y="362"/><use href="#a91" x="183" y="362"/><use href="#a82" x="189" y="362"/><use href="#g147" x="222" y="359"/><use href="#g148" x="234" y="359"/><use href="#g63" x="246" y="359"/><use href="#a161" x="325" y="362"/><use href="#a75" x="337" y="362"/><use href="#a90" x="343" y="362"/><use href="#a87" x="349" y="362"/><use href="#a62" x="355" y="362"/><use href="#a82" x="361" y="362"/><use href="#a82" x="430" y="362"/><use href="#a161" x="472" y="362"/><use href="#a82" x="484" y="362"/><use href="#a87" x="490" y="362"/><use href="#a82" x="496" y="362"/><use href="#a82" x="502" y="362"/><use href="#a161" x="534" y="362"/><use href="#a75" x="546" y="362"/><use href="#a90" x="552" y="362"/><use href="#a87" x="558" y="362"/><use href="#a62" x="564" y="362"/><use href="#a82" x="570" y="362"/><use href="#a161" x="608" y="362"/><use href="#a82" x="620" y="362"/><use href="#a87" x="626" y="362"/><use href="#a82" x="632" y="362"/><use href="#a82" x="638" y="362"/><use href="#a161" x="671" y="362"/><use href="#a82" x="683" y="362"/><use href="#a87" x="689" y="362"/><use href="#a82" x="695" y="362"/><use href="#a82" x="701" y="362"/><use href="#a161" x="740" y="362"/><use href="#a82" x="752" y="362"/><use href="#a87" x="758" y="362"/><use href="#a82" x="764" y="362"/><use href="#a82" x="770" y="362"/><use href="#a161" x="810" y="362"/><use href="#a82" x="822" y="362"/><use href="#a87" x="828" y="362"/><use href="#a82" x="834" y="362"/><use href="#a82" x="840" y="362"/><use href="#a161" x="882" y="362"/><use href="#a82" x="894" y="362"/><use href="#a87" x="900" y="362"/><use href="#a82" x="906" y="362"/><use href="#a82" x="912" y="362"/><use href="#a161" x="958" y="362"/><use href="#a82" x="970" y="362"/><use href="#a87" x="976" y="362"/><use href="#a82" x="982" y="362"/><use href="#a82" x="988" y="362"/><use href="#a161" x="1034" y="362"/><use href="#a82" x="1046" y="362"/><use href="#a87" x="1052" y="362"/><use href="#a82" x="1058" y="362"/><use href="#a82" x="1064" y="362"/><use href="#a90" x="99" y="379"/><use href="#a82" x="105" y="379"/><use href="#a90" x="111" y="379"/><use href="#a81" x="117" y="379"/><use href="#a158" x="123" y="379"/><use href="#a82" x="129" y="379"/><use href="#a162" x="135" y="379"/><use href="#a158" x="141" y="379"/><use href="#a75" x="147" y="379"/><use href="#a162" x="153" y="379"/><use href="#a75" x="165" y="379"/><use href="#a82" x="171" y="379"/><use href="#a160" x="177" y="379"/><use href="#a81" x="183" y="379"/><use href="#a90" x="189" y="379"/><use href="#g147" x="222" y="376"/><use href="#g148" x="234" y="376"/><use href="#g63" x="246" y="376"/><use href="#a161" x="325" y="379"/><use href="#a75" x="337" y="379"/><use href="#a90" x="343" y="379"/><use href="#a87" x="349" y="379"/><use href="#a62" x="355" y="379"/><use href="#a82" x="361" y="379"/><use href="#a82" x="430" y="379"/><use href="#a161" x="472" y="379"/><use href="#a82" x="484" y="379"/><use href="#a87" x="490" y="379"/><use href="#a82" x="496" y="379"/><use href="#a82" x="502" y="379"/><use href="#a161" x="534" y="379"/><use href="#a75" x="546" y="379"/><use href="#a90" x="552" y="379"/><use href="#a87" x="558" y="379"/><use href="#a62" x="564" y="379"/><use href="#a82" x="570" y="379"/><use href="#a161" x="608" y="379"/><use href="#a82" x="620" y="379"/><use href="#a87" x="626" y="379"/><use href="#a82" x="632" y="379"/><use href="#a82" x="638" y="379"/><use href="#a161" x="671" y="379"/><use href="#a82" x="683" y="379"/><use href="#a87" x="689" y="379"/><use href="#a82" x="695" y="379"/><use href="#a82" x="701" y="379"/><use href="#a161" x="740" y="379"/><use href="#a82" x="752" y="379"/><use href="#a87" x="758" y="379"/><use href="#a82" x="764" y="379"/><use href="#a82" x="770" y="379"/><use href="#a161" x="810" y="379"/><use href="#a82" x="822" y="379"/><use href="#a87" x="828" y="379"/><use href="#a82" x="834" y="379"/><use href="#a82" x="840" y="379"/><use href="#a161" x="882" y="379"/><use href="#a82" x="894" y="379"/><use href="#a87" x="900" y="379"/><use href="#a82" x="906" y="379"/><use href="#a82" x="912" y="379"/><use href="#a161" x="958" y="379"/><use href="#a82" x="970" y="379"/><use href="#a87" x="976" y="379"/><use href="#a82" x="982" y="379"/><use href="#a82" x="988" y="379"/><use href="#a161" x="1034" y="379"/><use href="#a82" x="1046" y="379"/><use href="#a87" x="1052" y="379"/><use href="#a82" x="1058" y="379"/><use href="#a82" x="1064" y="379"/><use href="#a90" x="99" y="396"/><use href="#a82" x="105" y="396"/><use href="#a90" x="111" y="396"/><use href="#a81" x="117" y="396"/><use href="#a158" x="123" y="396"/><use href="#a82" x="129" y="396"/><use href="#a90" x="135" y="396"/><use href="#a158" x="141" y="396"/><use href="#a82" x="147" y="396"/><use href="#a90" x="153" y="396"/><use href="#a75" x="165" y="396"/><use href="#a159" x="171" y="396"/><use href="#a160" x="177" y="396"/><use href="#a90" x="183" y="396"/><use href="#a50" x="189" y="396"/><use href="#g147" x="222" y="393"/><use href="#g148" x="234" y="393"/><use href="#g63" x="246" y="393"/><use href="#a161" x="325" y="396"/><use href="#a75" x="337" y="396"/><use href="#a90" x="343" y="396"/><use href="#a87" x="349" y="396"/><use href="#a62" x="355" y="396"/><use href="#a82" x="361" y="396"/><use href="#a82" x="430" y="396"/><use href="#a161" x="466" y="396"/><use href="#a75" x="478" y="396"/><use href="#a90" x="484" y="396"/><use href="#a87" x="490" y="396"/><use href="#a62" x="496" y="396"/><use href="#a82" x="502" y="396"/><use href="#a161" x="740" y="396"/><use href="#a82" x="752" y="396"/><use href="#a87" x="758" y="396"/><use href="#a82" x="764" y="396"/><use href="#a82" x="770" y="396"/><use href="#a161" x="810" y="396"/><use href="#a82" x="822" y="396"/><use href="#a87" x="828" y="396"/><use href="#a82" x="834" y="396"/><use href="#a82" x="840" y="396"/><use href="#a161" x="882" y="396"/><use href="#a82" x="894" y="396"/><use href="#a87" x="900" y="396"/><use href="#a82" x="906" y="396"/><use href="#a82" x="912" y="396"/><use href="#a161" x="958" y="396"/><use href="#a82" x="970" y="396"/><use href="#a87" x="976" y="396"/><use href="#a82" x="982" y="396"/><use href="#a82" x="988" y="396"/><use href="#a161" x="1034" y="396"/><use href="#a82" x="1046" y="396"/><use href="#a87" x="1052" y="396"/><use href="#a82" x="1058" y="396"/><use href="#a82" x="1064" y="396"/><use href="#a90" x="99" y="413"/><use href="#a82" x="105" y="413"/><use href="#a90" x="111" y="413"/><use href="#a90" x="117" y="413"/><use href="#a158" x="123" y="413"/><use href="#a82" x="129" y="413"/><use href="#a159" x="135" y="413"/><use href="#a158" x="141" y="413"/><use href="#a81" x="147" y="413"/><use href="#a75" x="153" y="413"/><use href="#a75" x="165" y="413"/><use href="#a82" x="171" y="413"/><use href="#a160" x="177" y="413"/><use href="#a82" x="183" y="413"/><use href="#a50" x="189" y="413"/><use href="#g147" x="222" y="410"/><use href="#g148" x="234" y="410"/><use href="#g63" x="246" y="410"/><use href="#a161" x="325" y="413"/><use href="#a75" x="337" y="413"/><use href="#a90" x="343" y="413"/><use href="#a87" x="349" y="413"/><use href="#a62" x="355" y="413"/><use href="#a82" x="361" y="413"/><use href="#a82" x="430" y="413"/><use href="#a161" x="466" y="413"/><use href="#a75" x="478" y="413"/><use href="#a90" x="484" y="413"/><use href="#a87" x="490" y="413"/><use href="#a62" x="496" y="413"/><use href="#a82" x="502" y="413"/><use href="#a161" x="740" y="413"/><use href="#a82" x="752" y="413"/><use href="#a87" x="758" y="413"/><use href="#a82" x="764" y="413"/><use href="#a82" x="770" y="413"/><use href="#a161" x="810" y="413"/><use href="#a82" x="822" y="413"/><use href="#a87" x="828" y="413"/><use href="#a82" x="834" y="413"/><use href="#a82" x="840" y="413"/><use href="#a161" x="882" y="413"/><use href="#a82" x="894" y="413"/><use href="#a87" x="900" y="413"/><use href="#a82" x="906" y="413"/><use href="#a82" x="912" y="413"/><use href="#a161" x="958" y="413"/><use href="#a82" x="970" y="413"/><use href="#a87" x="976" y="413"/><use href="#a82" x="982" y="413"/><use href="#a82" x="988" y="413"/><use href="#a161" x="1034" y="413"/><use href="#a82" x="1046" y="413"/><use href="#a87" x="1052" y="413"/><use href="#a82" x="1058" y="413"/><use href="#a82" x="1064" y="413"/><use href="#a90" x="99" y="430"/><use href="#a82" x="105" y="430"/><use href="#a90" x="111" y="430"/><use href="#a90" x="117" y="430"/><use href="#a158" x="123" y="430"/><use href="#a82" x="129" y="430"/><use href="#a159" x="135" y="430"/><use href="#a158" x="141" y="430"/><use href="#a75" x="147" y="430"/><use href="#a159" x="153" y="430"/><use href="#a75" x="165" y="430"/><use href="#a50" x="171" y="430"/><use href="#a160" x="177" y="430"/><use href="#a81" x="183" y="430"/><use href="#a162" x="189" y="430"/><use href="#g147" x="222" y="427"/><use href="#g148" x="234" y="427"/><use href="#g63" x="246" y="427"/><use href="#a161" x="325" y="430"/><use href="#a75" x="337" y="430"/><use href="#a90" x="343" y="430"/><use href="#a87" x="349" y="430"/><use href="#a62" x="355" y="430"/><use href="#a82" x="361" y="430"/><use href="#a82" x="430" y="430"/><use href="#a161" x="466" y="430"/><use href="#a75" x="478" y="430"/><use href="#a90" x="484" y="430"/><use href="#a87" x="490" y="430"/><use href="#a62" x="496" y="430"/><use href="#a82" x="502" y="430"/><use href="#a161" x="740" y="430"/><use href="#a82" x="752" y="430"/><use href="#a87" x="758" y="430"/><use href="#a82" x="764" y="430"/><use href="#a82" x="770" y="430"/><use href="#a161" x="810" y="430"/><use href="#a82" x="822" y="430"/><use href="#a87" x="828" y="430"/><use href="#a82" x="834" y="430"/><use href="#a82" x="840" y="430"/><use href="#a161" x="882" y="430"/><use href="#a82" x="894" y="430"/><use href="#a87" x="900" y="430"/><use href="#a82" x="906" y="430"/><use href="#a82" x="912" y="430"/><use href="#a161" x="958" y="430"/><use href="#a82" x="970" y="430"/><use href="#a87" x="976" y="430"/><use href="#a82" x="982" y="430"/><use href="#a82" x="988" y="430"/><use href="#a161" x="1034" y="430"/><use href="#a82" x="1046" y="430"/><use href="#a87" x="1052" y="430"/><use href="#a82" x="1058" y="430"/><use href="#a82" x="1064" y="430"/><use href="#a90" x="99" y="447"/><use href="#a82" x="105" y="447"/><use href="#a90" x="111" y="447"/><use href="#a90" x="117" y="447"/><use href="#a158" x="123" y="447"/><use href="#a82" x="129" y="447"/><use href="#a162" x="135" y="447"/><use href="#a158" x="141" y="447"/><use href="#a82" x="147" y="447"/><use href="#a91" x="153" y="447"/><use href="#a75" x="165" y="447"/><use href="#a54" x="171" y="447"/><use href="#a160" x="177" y="447"/><use href="#a81" x="183" y="447"/><use href="#a90" x="189" y="447"/><use href="#g147" x="222" y="444"/><use href="#g148" x="234" y="444"/><use href="#g63" x="246" y="444"/><use href="#a161" x="325" y="447"/><use href="#a75" x="337" y="447"/><use href="#a90" x="343" y="447"/><use href="#a87" x="349" y="447"/><use href="#a62" x="355" y="447"/><use href="#a82" x="361" y="447"/><use href="#a82" x="430" y="447"/><use href="#a161" x="466" y="447"/><use href="#a75" x="478" y="447"/><use href="#a90" x="484" y="447"/><use href="#a87" x="490" y="447"/><use href="#a62" x="496" y="447"/><use href="#a82" x="502" y="447"/><use href="#a161" x="740" y="447"/><use href="#a82" x="752" y="447"/><use href="#a87" x="758" y="447"/><use href="#a82" x="764" y="447"/><use href="#a82" x="770" y="447"/><use href="#a161" x="810" y="447"/><use href="#a82" x="822" y="447"/><use href="#a87" x="828" y="447"/><use href="#a82" x="834" y="447"/><use href="#a82" x="840" y="447"/><use href="#a161" x="882" y="447"/><use href="#a82" x="894" y="447"/><use href="#a87" x="900" y="447"/><use href="#a82" x="906" y="447"/><use href="#a82" x="912" y="447"/><use href="#a161" x="958" y="447"/><use href="#a82" x="970" y="447"/><use href="#a87" x="976" y="447"/><use href="#a82" x="982" y="447"/><use href="#a82" x="988" y="447"/><use href="#a161" x="1034" y="447"/><use href="#a82" x="1046" y="447"/><use href="#a87" x="1052" y="447"/><use href="#a82" x="1058" y="447"/><use href="#a82" x="1064" y="447"/><use href="#a90" x="99" y="464"/><use href="#a82" x="105" y="464"/><use href="#a90" x="111" y="464"/><use href="#a90" x="117" y="464"/><use href="#a158" x="123" y="464"/><use href="#a82" x="129" y="464"/><use href="#a91" x="135" y="464"/><use href="#a158" x="141" y="464"/><use href="#a75" x="147" y="464"/><use href="#a62" x="153" y="464"/><use href="#a75" x="165" y="464"/><use href="#a50" x="171" y="464"/><use href="#a160" x="177" y="464"/><use href="#a90" x="183" y="464"/><use href="#a91" x="189" y="464"/><use href="#g147" x="222" y="461"/><use href="#g148" x="234" y="461"/><use href="#g63" x="246" y="461"/><use href="#a161" x="325" y="464"/><use href="#a75" x="337" y="464"/><use href="#a90" x="343" y="464"/><use href="#a87" x="349" y="464"/><use href="#a62" x="355" y="464"/><use href="#a82" x="361" y="464"/><use href="#a82" x="430" y="464"/><use href="#a161" x="466" y="464"/><use href="#a75" x="478" y="464"/><use href="#a90" x="484" y="464"/><use href="#a87" x="490" y="464"/><use href="#a62" x="496" y="464"/><use href="#a82" x="502" y="464"/><use href="#a161" x="740" y="464"/><use href="#a82" x="752" y="464"/><use href="#a87" x="758" y="464"/><use href="#a82" x="764" y="464"/><use href="#a82" x="770" y="464"/><use href="#a161" x="810" y="464"/><use href="#a82" x="822" y="464"/><use href="#a87" x="828" y="464"/><use href="#a82" x="834" y="464"/><use href="#a82" x="840" y="464"/><use href="#a161" x="882" y="464"/><use href="#a82" x="894" y="464"/><use href="#a87" x="900" y="464"/><use href="#a82" x="906" y="464"/><use href="#a82" x="912" y="464"/><use href="#a161" x="958" y="464"/><use href="#a82" x="970" y="464"/><use href="#a87" x="976" y="464"/><use href="#a82" x="982" y="464"/><use href="#a82" x="988" y="464"/><use href="#a161" x="1034" y="464"/><use href="#a82" x="1046" y="464"/><use href="#a87" x="1052" y="464"/><use href="#a82" x="1058" y="464"/><use href="#a82" x="1064" y="464"/><use href="#a90" x="99" y="481"/><use href="#a82" x="105" y="481"/><use href="#a90" x="111" y="481"/><use href="#a90" x="117" y="481"/><use href="#a158" x="123" y="481"/><use href="#a82" x="129" y="481"/><use href="#a81" x="135" y="481"/><use href="#a158" x="141" y="481"/><use href="#a82" x="147" y="481"/><use href="#a162" x="153" y="481"/><use href="#a75" x="165" y="481"/><use href="#a54" x="171" y="481"/><use href="#a160" x="177" y="481"/><use href="#a75" x="183" y="481"/><use href="#a162" x="189" y="481"/><use href="#g147" x="222" y="478"/><use href="#g148" x="234" y="478"/><use href="#g63" x="246" y="478"/><use href="#a161" x="325" y="481"/><use href="#a75" x="337" y="481"/><use href="#a90" x="343" y="481"/><use href="#a87" x="349" y="481"/><use href="#a62" x="355" y="481"/><use href="#a82" x="361" y="481"/><use href="#a82" x="430" y="481"/><use href="#a161" x="466" y="481"/><use href="#a75" x="478" y="481"/><use href="#a90" x="484" y="481"/><use href="#a87" x="490" y="481"/><use href="#a62" x="496" y="481"/><use href="#a82" x="502" y="481"/><use href="#a161" x="740" y="481"/><use href="#a82" x="752" y="481"/><use href="#a87" x="758" y="481"/><use href="#a82" x="764" y="481"/><use href="#a82" x="770" y="481"/><use href="#a161" x="810" y="481"/><use href="#a82" x="822" y="481"/><use href="#a87" x="828" y="481"/><use href="#a82" x="834" y="481"/><use href="#a82" x="840" y="481"/><use href="#a161" x="882" y="481"/><use href="#a82" x="894" y="481"/><use href="#a87" x="900" y="481"/><use href="#a82" x="906" y="481"/><use href="#a82" x="912" y="481"/><use href="#a161" x="958" y="481"/><use href="#a82" x="970" y="481"/><use href="#a87" x="976" y="481"/><use href="#a82" x="982" y="481"/><use href="#a82" x="988" y="481"/><use href="#a161" x="1034" y="481"/><use href="#a82" x="1046" y="481"/><use href="#a87" x="1052" y="481"/><use href="#a82" x="1058" y="481"/><use href="#a82" x="1064" y="481"/><use href="#a90" x="99" y="498"/><use href="#a82" x="105" y="498"/><use href="#a90" x="111" y="498"/><use href="#a90" x="117" y="498"/><use href="#a158" x="123" y="498"/><use href="#a82" x="129" y="498"/><use href="#a75" x="135" y="498"/><use href="#a158" x="141" y="498"/><use href="#a90" x="147" y="498"/><use href="#a82" x="153" y="498"/><use href="#a75" x="165" y="498"/><use href="#a90" x="171" y="498"/><use href="#a160" x="177" y="498"/><use href="#a82" x="183" y="498"/><use href="#a62" x="189" y="498"/><use href="#g147" x="222" y="495"/><use href="#g148" x="234" y="495"/><use href="#g63" x="246" y="495"/><use href="#a161" x="325" y="498"/><use href="#a75" x="337" y="498"/><use href="#a90" x="343" y="498"/><use href="#a87" x="349" y="498"/><use href="#a82" x="355" y="498"/><use href="#a82" x="361" y="498"/><use href="#a82" x="430" y="498"/><use href="#a161" x="466" y="498"/><use href="#a75" x="478" y="498"/><use href="#a90" x="484" y="498"/><use href="#a87" x="490" y="498"/><use href="#a82" x="496" y="498"/><use href="#a82" x="502" y="498"/><use href="#a161" x="740" y="498"/><use href="#a82" x="752" y="498"/><use href="#a87" x="758" y="498"/><use href="#a82" x="764" y="498"/><use href="#a82" x="770" y="498"/><use href="#a161" x="810" y="498"/><use href="#a82" x="822" y="498"/><use href="#a87" x="828" y="498"/><use href="#a82" x="834" y="498"/><use href="#a82" x="840" y="498"/><use href="#a161" x="882" y="498"/><use href="#a82" x="894" y="498"/><use href="#a87" x="900" y="498"/><use href="#a82" x="906" y="498"/><use href="#a82" x="912" y="498"/><use href="#a161" x="958" y="498"/><use href="#a82" x="970" y="498"/><use href="#a87" x="976" y="498"/><use href="#a82" x="982" y="498"/><use href="#a82" x="988" y="498"/><use href="#a161" x="1034" y="498"/><use href="#a82" x="1046" y="498"/><use href="#a87" x="1052" y="498"/><use href="#a82" x="1058" y="498"/><use href="#a82" x="1064" y="498"/><use href="#a90" x="99" y="515"/><use href="#a82" x="105" y="515"/><use href="#a90" x="111" y="515"/><use href="#a75" x="117" y="515"/><use href="#a158" x="123" y="515"/><use href="#a75" x="129" y="515"/><use href="#a90" x="135" y="515"/><use href="#a158" x="141" y="515"/><use href="#a90" x="147" y="515"/><use href="#a75" x="153" y="515"/><use href="#a75" x="165" y="515"/><use href="#a82" x="171" y="515"/><use href="#a160" x="177" y="515"/><use href="#a82" x="183" y="515"/><use href="#a91" x="189" y="515"/><use href="#g147" x="222" y="512"/><use href="#g148" x="234" y="512"/><use href="#g63" x="246" y="512"/><use href="#a161" x="325" y="515"/><use href="#a75" x="337" y="515"/><use href="#a90" x="343" y="515"/><use href="#a87" x="349" y="515"/><use href="#a82" x="355" y="515"/><use href="#a82" x="361" y="515"/><use href="#a82" x="430" y="515"/><use href="#a161" x="466" y="515"/><use href="#a75" x="478" y="515"/><use href="#a90" x="484" y="515"/><use href="#a87" x="490" y="515"/><use href="#a82" x="496" y="515"/><use href="#a82" x="502" y="515"/><use href="#a161" x="740" y="515"/><use href="#a82" x="752" y="515"/><use href="#a87" x="758" y="515"/><use href="#a82" x="764" y="515"/><use href="#a82" x="770" y="515"/><use href="#a161" x="810" y="515"/><use href="#a82" x="822" y="515"/><use href="#a87" x="828" y="515"/><use href="#a82" x="834" y="515"/><use href="#a82" x="840" y="515"/><use href="#a161" x="882" y="515"/><use href="#a82" x="894" y="515"/><use href="#a87" x="900" y="515"/><use href="#a82" x="906" y="515"/><use href="#a82" x="912" y="515"/><use href="#a161" x="958" y="515"/><use href="#a82" x="970" y="515"/><use href="#a87" x="976" y="515"/><use href="#a82" x="982" y="515"/><use href="#a82" x="988" y="515"/><use href="#a161" x="1034" y="515"/><use href="#a82" x="1046" y="515"/><use href="#a87" x="1052" y="515"/><use href="#a82" x="1058" y="515"/><use href="#a82" x="1064" y="515"/><use href="#a90" x="99" y="532"/><use href="#a82" x="105" y="532"/><use href="#a90" x="111" y="532"/><use href="#a75" x="117" y="532"/><use href="#a158" x="123" y="532"/><use href="#a75" x="129" y="532"/><use href="#a75" x="135" y="532"/><use href="#a158" x="141" y="532"/><use href="#a75" x="147" y="532"/><use href="#a75" x="153" y="532"/><use href="#a75" x="165" y="532"/><use href="#a75" x="171" y="532"/><use href="#a160" x="177" y="532"/><use href="#a90" x="183" y="532"/><use href="#a90" x="189" y="532"/><use href="#g147" x="222" y="529"/><use href="#g148" x="234" y="529"/><use href="#g63" x="246" y="529"/><use href="#a161" x="325" y="532"/><use href="#a75" x="337" y="532"/><use href="#a90" x="343" y="532"/><use href="#a87" x="349" y="532"/><use href="#a82" x="355" y="532"/><use href="#a82" x="361" y="532"/><use href="#a82" x="430" y="532"/><use href="#a161" x="466" y="532"/><use href="#a75" x="478" y="532"/><use href="#a90" x="484" y="532"/><use href="#a87" x="490" y="532"/><use href="#a82" x="496" y="532"/><use href="#a82" x="502" y="532"/><use href="#a161" x="740" y="532"/><use href="#a82" x="752" y="532"/><use href="#a87" x="758" y="532"/><use href="#a82" x="764" y="532"/><use href="#a82" x="770" y="532"/><use href="#a161" x="810" y="532"/><use href="#a82" x="822" y="532"/><use href="#a87" x="828" y="532"/><use href="#a82" x="834" y="532"/><use href="#a82" x="840" y="532"/><use href="#a161" x="882" y="532"/><use href="#a82" x="894" y="532"/><use href="#a87" x="900" y="532"/><use href="#a82" x="906" y="532"/><use href="#a82" x="912" y="532"/><use href="#a161" x="958" y="532"/><use href="#a82" x="970" y="532"/><use href="#a87" x="976" y="532"/><use href="#a82" x="982" y="532"/><use href="#a82" x="988" y="532"/><use href="#a161" x="1034" y="532"/><use href="#a82" x="1046" y="532"/><use href="#a87" x="1052" y="532"/><use href="#a82" x="1058" y="532"/><use href="#a82" x="1064" y="532"/><use href="#a90" x="99" y="549"/><use href="#a82" x="105" y="549"/><use href="#a90" x="111" y="549"/><use href="#a75" x="117" y="549"/><use href="#a158" x="123" y="549"/><use href="#a75" x="129" y="549"/><use href="#a82" x="135" y="549"/><use href="#a158" x="141" y="549"/><use href="#a82" x="147" y="549"/><use href="#a159" x="153" y="549"/><use href="#a75" x="165" y="549"/><use href="#a81" x="171" y="549"/><use href="#a160" x="177" y="549"/><use href="#a62" x="183" y="549"/><use href="#a91" x="189" y="549"/><use href="#g147" x="222" y="546"/><use href="#g148" x="234" y="546"/><use href="#g63" x="246" y="546"/><use href="#a161" x="331" y="549"/><use href="#a91" x="343" y="549"/><use href="#a87" x="349" y="549"/><use href="#a82" x="355" y="549"/><use href="#a82" x="361" y="549"/><use href="#a82" x="430" y="549"/><use href="#a161" x="472" y="549"/><use href="#a91" x="484" y="549"/><use href="#a87" x="490" y="549"/><use href="#a82" x="496" y="549"/><use href="#a82" x="502" y="549"/><use href="#a161" x="740" y="549"/><use href="#a82" x="752" y="549"/><use href="#a87" x="758" y="549"/><use href="#a82" x="764" y="549"/><use href="#a82" x="770" y="549"/><use href="#a161" x="810" y="549"/><use href="#a82" x="822" y="549"/><use href="#a87" x="828" y="549"/><use href="#a82" x="834" y="549"/><use href="#a82" x="840" y="549"/><use href="#a161" x="882" y="549"/><use href="#a82" x="894" y="549"/><use href="#a87" x="900" y="549"/><use href="#a82" x="906" y="549"/><use href="#a82" x="912" y="549"/><use href="#a161" x="958" y="549"/><use href="#a82" x="970" y="549"/><use href="#a87" x="976" y="549"/><use href="#a82" x="982" y="549"/><use href="#a82" x="988" y="549"/><use href="#a161" x="1034" y="549"/><use href="#a82" x="1046" y="549"/><use href="#a87" x="1052" y="549"/><use href="#a82" x="1058" y="549"/><use href="#a82" x="1064" y="549"/><use href="#a90" x="99" y="566"/><use href="#a82" x="105" y="566"/><use href="#a90" x="111" y="566"/><use href="#a75" x="117" y="566"/><use href="#a158" x="123" y="566"/><use href="#a82" x="129" y="566"/><use href="#a50" x="135" y="566"/><use href="#a158" x="141" y="566"/><use href="#a75" x="147" y="566"/><use href="#a54" x="153" y="566"/><use href="#a75" x="165" y="566"/><use href="#a159" x="171" y="566"/><use href="#a160" x="177" y="566"/><use href="#a82" x="183" y="566"/><use href="#a91" x="189" y="566"/><use href="#g147" x="222" y="563"/><use href="#g148" x="234" y="563"/><use href="#g63" x="246" y="563"/><use href="#a161" x="325" y="566"/><use href="#a75" x="337" y="566"/><use href="#a90" x="343" y="566"/><use href="#a87" x="349" y="566"/><use href="#a82" x="355" y="566"/><use href="#a82" x="361" y="566"/><use href="#a82" x="430" y="566"/><use href="#a161" x="466" y="566"/><use href="#a75" x="478" y="566"/><use href="#a90" x="484" y="566"/><use href="#a87" x="490" y="566"/><use href="#a82" x="496" y="566"/><use href="#a82" x="502" y="566"/><use href="#a161" x="740" y="566"/><use href="#a82" x="752" y="566"/><use href="#a87" x="758" y="566"/><use href="#a82" x="764" y="566"/><use href="#a82" x="770" y="566"/><use href="#a161" x="810" y="566"/><use href="#a82" x="822" y="566"/><use href="#a87" x="828" y="566"/><use href="#a82" x="834" y="566"/><use href="#a82" x="840" y="566"/><use href="#a161" x="882" y="566"/><use href="#a82" x="894" y="566"/><use href="#a87" x="900" y="566"/><use href="#a82" x="906" y="566"/><use href="#a82" x="912" y="566"/><use href="#a161" x="958" y="566"/><use href="#a82" x="970" y="566"/><use href="#a87" x="976" y="566"/><use href="#a82" x="982" y="566"/><use href="#a82" x="988" y="566"/><use href="#a161" x="1034" y="566"/><use href="#a82" x="1046" y="566"/><use href="#a87" x="1052" y="566"/><use href="#a82" x="1058" y="566"/><use href="#a82" x="1064" y="566"/><use href="#a90" x="99" y="583"/><use href="#a82" x="105" y="583"/><use href="#a90" x="111" y="583"/><use href="#a75" x="117" y="583"/><use href="#a158" x="123" y="583"/><use href="#a82" x="129" y="583"/><use href="#a50" x="135" y="583"/><use href="#a158" x="141" y="583"/><use href="#a82" x="147" y="583"/><use href="#a62" x="153" y="583"/><use href="#a75" x="165" y="583"/><use href="#a82" x="171" y="583"/><use href="#a160" x="177" y="583"/><use href="#a91" x="183" y="583"/><use href="#a90" x="189" y="583"/><use href="#g147" x="222" y="580"/><use href="#g148" x="234" y="580"/><use href="#g63" x="246" y="580"/><use href="#a161" x="325" y="583"/><use href="#a75" x="337" y="583"/><use href="#a90" x="343" y="583"/><use href="#a87" x="349" y="583"/><use href="#a82" x="355" y="583"/><use href="#a82" x="361" y="583"/><use href="#a82" x="430" y="583"/><use href="#a161" x="466" y="583"/><use href="#a75" x="478" y="583"/><use href="#a90" x="484" y="583"/><use href="#a87" x="490" y="583"/><use href="#a82" x="496" y="583"/><use href="#a82" x="502" y="583"/><use href="#a161" x="740" y="583"/><use href="#a82" x="752" y="583"/><use href="#a87" x="758" y="583"/><use href="#a82" x="764" y="583"/><use href="#a82" x="770" y="583"/><use href="#a161" x="810" y="583"/><use href="#a82" x="822" y="583"/><use href="#a87" x="828" y="583"/><use href="#a82" x="834" y="583"/><use href="#a82" x="840" y="583"/><use href="#a161" x="882" y="583"/><use href="#a82" x="894" y="583"/><use href="#a87" x="900" y="583"/><use href="#a82" x="906" y="583"/><use href="#a82" x="912" y="583"/><use href="#a161" x="958" y="583"/><use href="#a82" x="970" y="583"/><use href="#a87" x="976" y="583"/><use href="#a82" x="982" y="583"/><use href="#a82" x="988" y="583"/><use href="#a161" x="1034" y="583"/><use href="#a82" x="1046" y="583"/><use href="#a87" x="1052" y="583"/><use href="#a82" x="1058" y="583"/><use href="#a82" x="1064" y="583"/><use href="#a90" x="99" y="600"/><use href="#a82" x="105" y="600"/><use href="#a90" x="111" y="600"/><use href="#a75" x="117" y="600"/><use href="#a158" x="123" y="600"/><use href="#a82" x="129" y="600"/><use href="#a159" x="135" y="600"/><use href="#a158" x="141" y="600"/><use href="#a82" x="147" y="600"/><use href="#a50" x="153" y="600"/><use href="#a75" x="165" y="600"/><use href="#a82" x="171" y="600"/><use href="#a160" x="177" y="600"/><use href="#a90" x="183" y="600"/><use href="#a159" x="189" y="600"/><use href="#g147" x="222" y="597"/><use href="#g148" x="234" y="597"/><use href="#g63" x="246" y="597"/><use href="#a161" x="325" y="600"/><use href="#a75" x="337" y="600"/><use href="#a90" x="343" y="600"/><use href="#a87" x="349" y="600"/><use href="#a82" x="355" y="600"/><use href="#a82" x="361" y="600"/><use href="#a82" x="430" y="600"/><use href="#a161" x="466" y="600"/><use href="#a75" x="478" y="600"/><use href="#a90" x="484" y="600"/><use href="#a87" x="490" y="600"/><use href="#a82" x="496" y="600"/><use href="#a82" x="502" y="600"/><use href="#a161" x="740" y="600"/><use href="#a82" x="752" y="600"/><use href="#a87" x="758" y="600"/><use href="#a82" x="764" y="600"/><use href="#a82" x="770" y="600"/><use href="#a161" x="810" y="600"/><use href="#a82" x="822" y="600"/><use href="#a87" x="828" y="600"/><use href="#a82" x="834" y="600"/><use href="#a82" x="840" y="600"/><use href="#a161" x="882" y="600"/><use href="#a82" x="894" y="600"/><use href="#a87" x="900" y="600"/><use href="#a82" x="906" y="600"/><use href="#a82" x="912" y="600"/><use href="#a161" x="958" y="600"/><use href="#a82" x="970" y="600"/><use href="#a87" x="976" y="600"/><use href="#a82" x="982" y="600"/><use href="#a82" x="988" y="600"/><use href="#a161" x="1034" y="600"/><use href="#a82" x="1046" y="600"/><use href="#a87" x="1052" y="600"/><use href="#a82" x="1058" y="600"/><use href="#a82" x="1064" y="600"/><use href="#a90" x="99" y="617"/><use href="#a82" x="105" y="617"/><use href="#a90" x="111" y="617"/><use href="#a75" x="117" y="617"/><use href="#a158" x="123" y="617"/><use href="#a82" x="129" y="617"/><use href="#a62" x="135" y="617"/><use href="#a158" x="141" y="617"/><use href="#a90" x="147" y="617"/><use href="#a82" x="153" y="617"/><use href="#a75" x="165" y="617"/><use href="#a159" x="171" y="617"/><use href="#a160" x="177" y="617"/><use href="#a75" x="183" y="617"/><use href="#a159" x="189" y="617"/><use href="#g147" x="222" y="614"/><use href="#g148" x="234" y="614"/><use href="#g63" x="246" y="614"/><use href="#a161" x="325" y="617"/><use href="#a75" x="337" y="617"/><use href="#a90" x="343" y="617"/><use href="#a87" x="349" y="617"/><use href="#a82" x="355" y="617"/><use href="#a82" x="361" y="617"/><use href="#a82" x="430" y="617"/><use href="#a161" x="466" y="617"/><use href="#a75" x="478" y="617"/><use href="#a90" x="484" y="617"/><use href="#a87" x="490" y="617"/><use href="#a82" x="496" y="617"/><use href="#a82" x="502" y="617"/><use href="#a161" x="740" y="617"/><use href="#a82" x="752" y="617"/><use href="#a87" x="758" y="617"/><use href="#a82" x="764" y="617"/><use href="#a82" x="770" y="617"/><use href="#a161" x="810" y="617"/><use href="#a82" x="822" y="617"/><use href="#a87" x="828" y="617"/><use href="#a82" x="834" y="617"/><use href="#a82" x="840" y="617"/><use href="#a161" x="882" y="617"/><use href="#a82" x="894" y="617"/><use href="#a87" x="900" y="617"/><use href="#a82" x="906" y="617"/><use href="#a82" x="912" y="617"/><use href="#a161" x="958" y="617"/><use href="#a82" x="970" y="617"/><use href="#a87" x="976" y="617"/><use href="#a82" x="982" y="617"/><use href="#a82" x="988" y="617"/><use href="#a161" x="1034" y="617"/><use href="#a82" x="1046" y="617"/><use href="#a87" x="1052" y="617"/><use href="#a82" x="1058" y="617"/><use href="#a82" x="1064" y="617"/></g>
<g fill="#D00808"><use href="#g65" x="180" y="153"/><use href="#g65" x="181" y="153"/><use href="#g66" x="193" y="153"/><use href="#g66" x="194" y="153"/><use href="#g67" x="206" y="153"/><use href="#g67" x="207" y="153"/><use href="#g67" x="353" y="153"/><use href="#g67" x="354" y="153"/><use href="#a62" x="179" y="185"/><use href="#a62" x="180" y="185"/><use href="#a75" x="186" y="185"/><use href="#a75" x="187" y="185"/><use href="#a87" x="193" y="185"/><use href="#a87" x="194" y="185"/><use href="#a62" x="200" y="185"/><use href="#a62" x="201" y="185"/><use href="#g88" x="208" y="182"/><use href="#g88" x="209" y="182"/><use href="#a81" x="179" y="214"/><use href="#a81" x="180" y="214"/><use href="#a82" x="186" y="214"/><use href="#a82" x="187" y="214"/><use href="#g83" x="194" y="211"/><use href="#g83" x="195" y="211"/><use href="#g108" x="327" y="237"/><use href="#g108" x="328" y="237"/><use href="#g12" x="340" y="237"/><use href="#g12" x="341" y="237"/><use href="#g13" x="353" y="237"/><use href="#g13" x="354" y="237"/><use href="#g97" x="366" y="237"/><use href="#g97" x="367" y="237"/><use href="#g109" x="379" y="237"/><use href="#g109" x="380" y="237"/><use href="#g5" x="392" y="237"/><use href="#g5" x="393" y="237"/><use href="#g110" x="405" y="237"/><use href="#g110" x="406" y="237"/><use href="#g98" x="418" y="237"/><use href="#g98" x="419" y="237"/><use href="#g111" x="431" y="237"/><use href="#g111" x="432" y="237"/><use href="#g122" x="216" y="300"/><use href="#g61" x="228" y="300"/><use href="#g14" x="240" y="300"/><use href="#g15" x="252" y="300"/><use href="#a48" x="264" y="303"/><use href="#a49" x="270" y="303"/><use href="#a90" x="276" y="303"/><use href="#a51" x="282" y="303"/></g>
<g fill="#0808C0"><use href="#g71" x="503" y="153"/><use href="#g71" x="504" y="153"/><use href="#g72" x="516" y="153"/><use href="#g72" x="517" y="153"/><use href="#g12" x="529" y="153"/><use href="#g12" x="530" y="153"/><use href="#g13" x="542" y="153"/><use href="#g13" x="543" y="153"/><use href="#a48" x="554" y="156"/><use href="#a48" x="555" y="156"/><use href="#g73" x="562" y="153"/><use href="#g73" x="563" y="153"/><use href="#g74" x="575" y="153"/><use href="#g74" x="576" y="153"/><use href="#a75" x="587" y="156"/><use href="#a75" x="588" y="156"/><use href="#a51" x="594" y="156"/><use href="#a51" x="595" y="156"/><use href="#g80" x="676" y="153"/><use href="#g80" x="677" y="153"/><use href="#g76" x="689" y="153"/><use href="#g76" x="690" y="153"/><use href="#g77" x="702" y="153"/><use href="#g77" x="703" y="153"/><use href="#a48" x="714" y="156"/><use href="#a48" x="715" y="156"/><use href="#a81" x="721" y="156"/><use href="#a81" x="722" y="156"/><use href="#a82" x="728" y="156"/><use href="#a82" x="729" y="156"/><use href="#g83" x="736" y="153"/><use href="#g83" x="737" y="153"/><use href="#a51" x="748" y="156"/><use href="#a51" x="749" y="156"/><use href="#a90" x="325" y="185"/><use href="#a90" x="326" y="185"/><use href="#a91" x="332" y="185"/><use href="#a91" x="333" y="185"/><use href="#a50" x="339" y="185"/><use href="#a50" x="340" y="185"/><use href="#a87" x="346" y="185"/><use href="#a87" x="347" y="185"/><use href="#a62" x="353" y="185"/><use href="#a62" x="354" y="185"/><use href="#g88" x="361" y="182"/><use href="#g88" x="362" y="182"/><use href="#a82" x="502" y="185"/><use href="#a82" x="503" y="185"/><use href="#g93" x="510" y="182"/><use href="#g93" x="511" y="182"/><use href="#g97" x="676" y="182"/><use href="#g97" x="677" y="182"/><use href="#g98" x="689" y="182"/><use href="#g98" x="690" y="182"/></g>
<g fill="#14148C"><use href="#g130" x="739" y="302"/><use href="#g78" x="751" y="302"/><use href="#g131" x="763" y="302"/><use href="#g132" x="775" y="302"/><use href="#g133" x="787" y="302"/><use href="#g134" x="799" y="302"/><use href="#g135" x="811" y="302"/><use href="#g107" x="823" y="302"/><use href="#g136" x="835" y="302"/><use href="#g137" x="847" y="302"/><use href="#a90" x="859" y="305"/><use href="#a82" x="865" y="305"/><use href="#a82" x="871" y="305"/><use href="#g138" x="877" y="302"/><use href="#g139" x="889" y="302"/><use href="#g135" x="901" y="302"/><use href="#g107" x="913" y="302"/><use href="#g140" x="925" y="302"/><use href="#g141" x="937" y="302"/><use href="#a87" x="949" y="305"/><use href="#a87" x="955" y="305"/><use href="#a87" x="961" y="305"/></g>
<g fill="#D8F4FF"><use href="#a90" x="99" y="345"/><use href="#a82" x="105" y="345"/><use href="#a90" x="111" y="345"/><use href="#a81" x="117" y="345"/><use href="#a158" x="123" y="345"/><use href="#a82" x="129" y="345"/><use href="#a159" x="135" y="345"/><use href="#a158" x="141" y="345"/><use href="#a90" x="147" y="345"/><use href="#a54" x="153" y="345"/><use href="#a75" x="165" y="345"/><use href="#a75" x="171" y="345"/><use href="#a160" x="177" y="345"/><use href="#a90" x="183" y="345"/><use href="#a54" x="189" y="345"/><use href="#g147" x="222" y="342"/><use href="#g148" x="234" y="342"/><use href="#g63" x="246" y="342"/><use href="#a161" x="325" y="345"/><use href="#a75" x="337" y="345"/><use href="#a90" x="343" y="345"/><use href="#a87" x="349" y="345"/><use href="#a62" x="355" y="345"/><use href="#a82" x="361" y="345"/><use href="#a82" x="430" y="345"/><use href="#a161" x="472" y="345"/><use href="#a82" x="484" y="345"/><use href="#a87" x="490" y="345"/><use href="#a82" x="496" y="345"/><use href="#a82" x="502" y="345"/><use href="#a161" x="534" y="345"/><use href="#a75" x="546" y="345"/><use href="#a90" x="552" y="345"/><use href="#a87" x="558" y="345"/><use href="#a62" x="564" y="345"/><use href="#a82" x="570" y="345"/><use href="#a161" x="608" y="345"/><use href="#a82" x="620" y="345"/><use href="#a87" x="626" y="345"/><use href="#a82" x="632" y="345"/><use href="#a82" x="638" y="345"/><use href="#a161" x="671" y="345"/><use href="#a82" x="683" y="345"/><use href="#a87" x="689" y="345"/><use href="#a82" x="695" y="345"/><use href="#a82" x="701" y="345"/><use href="#a161" x="740" y="345"/><use href="#a82" x="752" y="345"/><use href="#a87" x="758" y="345"/><use href="#a82" x="764" y="345"/><use href="#a82" x="770" y="345"/><use href="#a161" x="810" y="345"/><use href="#a82" x="822" y="345"/><use href="#a87" x="828" y="345"/><use href="#a82" x="834" y="345"/><use href="#a82" x="840" y="345"/><use href="#a161" x="882" y="345"/><use href="#a82" x="894" y="345"/><use href="#a87" x="900" y="345"/><use href="#a82" x="906" y="345"/><use href="#a82" x="912" y="345"/><use href="#a161" x="958" y="345"/><use href="#a82" x="970" y="345"/><use href="#a87" x="976" y="345"/><use href="#a82" x="982" y="345"/><use href="#a82" x="988" y="345"/><use href="#a161" x="1034" y="345"/><use href="#a82" x="1046" y="345"/><use href="#a87" x="1052" y="345"/><use href="#a82" x="1058" y="345"/><use href="#a82" x="1064" y="345"/></g>
</svg>
</body></html>
